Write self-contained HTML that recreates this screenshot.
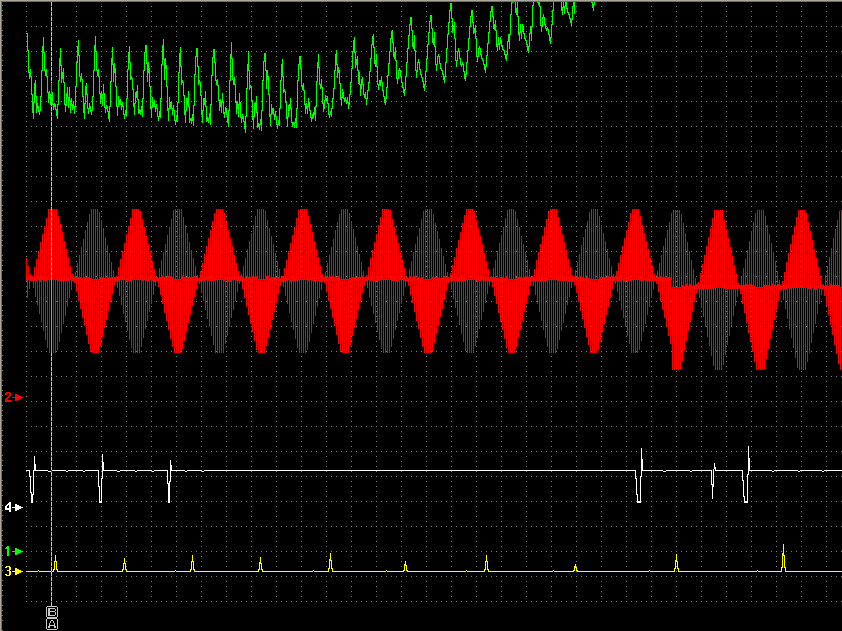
<!DOCTYPE html>
<html><head><meta charset="utf-8"><style>
html,body{margin:0;padding:0;background:#000;}
body{width:842px;height:631px;position:relative;overflow:hidden;font-family:"Liberation Sans",sans-serif;}
</style></head><body>
<svg width="842" height="631" viewBox="0 0 842 631" shape-rendering="crispEdges" style="position:absolute;left:0;top:0"><rect width="842" height="631" fill="#000"/><path fill="#808080" d="M26 6h1v1h-1zM26 11h1v1h-1zM26 16h1v1h-1zM26 21h1v1h-1zM26 26h1v1h-1zM26 31h1v1h-1zM26 36h1v1h-1zM26 41h1v1h-1zM26 46h1v1h-1zM26 51h1v1h-1zM26 56h1v1h-1zM26 61h1v1h-1zM26 66h1v1h-1zM26 71h1v1h-1zM26 76h1v1h-1zM26 81h1v1h-1zM26 86h1v1h-1zM26 91h1v1h-1zM26 96h1v1h-1zM26 101h1v1h-1zM26 106h1v1h-1zM26 111h1v1h-1zM26 116h1v1h-1zM26 121h1v1h-1zM26 126h1v1h-1zM26 131h1v1h-1zM26 136h1v1h-1zM26 141h1v1h-1zM26 146h1v1h-1zM26 151h1v1h-1zM26 156h1v1h-1zM26 161h1v1h-1zM26 166h1v1h-1zM26 171h1v1h-1zM26 176h1v1h-1zM26 181h1v1h-1zM26 186h1v1h-1zM26 191h1v1h-1zM26 196h1v1h-1zM26 201h1v1h-1zM26 206h1v1h-1zM26 211h1v1h-1zM26 216h1v1h-1zM26 221h1v1h-1zM26 226h1v1h-1zM26 231h1v1h-1zM26 236h1v1h-1zM26 241h1v1h-1zM26 246h1v1h-1zM26 251h1v1h-1zM26 256h1v1h-1zM26 261h1v1h-1zM26 266h1v1h-1zM26 271h1v1h-1zM26 276h1v1h-1zM26 281h1v1h-1zM26 286h1v1h-1zM26 291h1v1h-1zM26 296h1v1h-1zM26 301h1v1h-1zM26 306h1v1h-1zM26 311h1v1h-1zM26 316h1v1h-1zM26 321h1v1h-1zM26 326h1v1h-1zM26 331h1v1h-1zM26 336h1v1h-1zM26 341h1v1h-1zM26 346h1v1h-1zM26 351h1v1h-1zM26 356h1v1h-1zM26 361h1v1h-1zM26 366h1v1h-1zM26 371h1v1h-1zM26 376h1v1h-1zM26 381h1v1h-1zM26 386h1v1h-1zM26 391h1v1h-1zM26 396h1v1h-1zM26 401h1v1h-1zM26 406h1v1h-1zM26 411h1v1h-1zM26 416h1v1h-1zM26 421h1v1h-1zM26 426h1v1h-1zM26 431h1v1h-1zM26 436h1v1h-1zM26 441h1v1h-1zM26 446h1v1h-1zM26 451h1v1h-1zM26 456h1v1h-1zM26 461h1v1h-1zM26 466h1v1h-1zM26 471h1v1h-1zM26 476h1v1h-1zM26 481h1v1h-1zM26 486h1v1h-1zM26 491h1v1h-1zM26 496h1v1h-1zM26 501h1v1h-1zM26 506h1v1h-1zM26 511h1v1h-1zM26 516h1v1h-1zM26 521h1v1h-1zM26 526h1v1h-1zM26 531h1v1h-1zM26 536h1v1h-1zM26 541h1v1h-1zM26 546h1v1h-1zM26 551h1v1h-1zM26 556h1v1h-1zM26 561h1v1h-1zM26 566h1v1h-1zM26 571h1v1h-1zM26 576h1v1h-1zM26 581h1v1h-1zM26 586h1v1h-1zM26 591h1v1h-1zM26 596h1v1h-1zM26 601h1v1h-1zM51 6h1v1h-1zM51 11h1v1h-1zM51 16h1v1h-1zM51 21h1v1h-1zM51 26h1v1h-1zM51 31h1v1h-1zM51 36h1v1h-1zM51 41h1v1h-1zM51 46h1v1h-1zM51 51h1v1h-1zM51 56h1v1h-1zM51 61h1v1h-1zM51 66h1v1h-1zM51 71h1v1h-1zM51 76h1v1h-1zM51 81h1v1h-1zM51 86h1v1h-1zM51 91h1v1h-1zM51 96h1v1h-1zM51 101h1v1h-1zM51 106h1v1h-1zM51 111h1v1h-1zM51 116h1v1h-1zM51 121h1v1h-1zM51 126h1v1h-1zM51 131h1v1h-1zM51 136h1v1h-1zM51 141h1v1h-1zM51 146h1v1h-1zM51 151h1v1h-1zM51 156h1v1h-1zM51 161h1v1h-1zM51 166h1v1h-1zM51 171h1v1h-1zM51 176h1v1h-1zM51 181h1v1h-1zM51 186h1v1h-1zM51 191h1v1h-1zM51 196h1v1h-1zM51 201h1v1h-1zM51 206h1v1h-1zM51 211h1v1h-1zM51 216h1v1h-1zM51 221h1v1h-1zM51 226h1v1h-1zM51 231h1v1h-1zM51 236h1v1h-1zM51 241h1v1h-1zM51 246h1v1h-1zM51 251h1v1h-1zM51 256h1v1h-1zM51 261h1v1h-1zM51 266h1v1h-1zM51 271h1v1h-1zM51 276h1v1h-1zM51 281h1v1h-1zM51 286h1v1h-1zM51 291h1v1h-1zM51 296h1v1h-1zM51 301h1v1h-1zM51 306h1v1h-1zM51 311h1v1h-1zM51 316h1v1h-1zM51 321h1v1h-1zM51 326h1v1h-1zM51 331h1v1h-1zM51 336h1v1h-1zM51 341h1v1h-1zM51 346h1v1h-1zM51 351h1v1h-1zM51 356h1v1h-1zM51 361h1v1h-1zM51 366h1v1h-1zM51 371h1v1h-1zM51 376h1v1h-1zM51 381h1v1h-1zM51 386h1v1h-1zM51 391h1v1h-1zM51 396h1v1h-1zM51 401h1v1h-1zM51 406h1v1h-1zM51 411h1v1h-1zM51 416h1v1h-1zM51 421h1v1h-1zM51 426h1v1h-1zM51 431h1v1h-1zM51 436h1v1h-1zM51 441h1v1h-1zM51 446h1v1h-1zM51 451h1v1h-1zM51 456h1v1h-1zM51 461h1v1h-1zM51 466h1v1h-1zM51 471h1v1h-1zM51 476h1v1h-1zM51 481h1v1h-1zM51 486h1v1h-1zM51 491h1v1h-1zM51 496h1v1h-1zM51 501h1v1h-1zM51 506h1v1h-1zM51 511h1v1h-1zM51 516h1v1h-1zM51 521h1v1h-1zM51 526h1v1h-1zM51 531h1v1h-1zM51 536h1v1h-1zM51 541h1v1h-1zM51 546h1v1h-1zM51 551h1v1h-1zM51 556h1v1h-1zM51 561h1v1h-1zM51 566h1v1h-1zM51 571h1v1h-1zM51 576h1v1h-1zM51 581h1v1h-1zM51 586h1v1h-1zM51 591h1v1h-1zM51 596h1v1h-1zM51 601h1v1h-1zM76 6h1v1h-1zM76 11h1v1h-1zM76 16h1v1h-1zM76 21h1v1h-1zM76 26h1v1h-1zM76 31h1v1h-1zM76 36h1v1h-1zM76 41h1v1h-1zM76 46h1v1h-1zM76 51h1v1h-1zM76 56h1v1h-1zM76 61h1v1h-1zM76 66h1v1h-1zM76 71h1v1h-1zM76 76h1v1h-1zM76 81h1v1h-1zM76 86h1v1h-1zM76 91h1v1h-1zM76 96h1v1h-1zM76 101h1v1h-1zM76 106h1v1h-1zM76 111h1v1h-1zM76 116h1v1h-1zM76 121h1v1h-1zM76 126h1v1h-1zM76 131h1v1h-1zM76 136h1v1h-1zM76 141h1v1h-1zM76 146h1v1h-1zM76 151h1v1h-1zM76 156h1v1h-1zM76 161h1v1h-1zM76 166h1v1h-1zM76 171h1v1h-1zM76 176h1v1h-1zM76 181h1v1h-1zM76 186h1v1h-1zM76 191h1v1h-1zM76 196h1v1h-1zM76 201h1v1h-1zM76 206h1v1h-1zM76 211h1v1h-1zM76 216h1v1h-1zM76 221h1v1h-1zM76 226h1v1h-1zM76 231h1v1h-1zM76 236h1v1h-1zM76 241h1v1h-1zM76 246h1v1h-1zM76 251h1v1h-1zM76 256h1v1h-1zM76 261h1v1h-1zM76 266h1v1h-1zM76 271h1v1h-1zM76 276h1v1h-1zM76 281h1v1h-1zM76 286h1v1h-1zM76 291h1v1h-1zM76 296h1v1h-1zM76 301h1v1h-1zM76 306h1v1h-1zM76 311h1v1h-1zM76 316h1v1h-1zM76 321h1v1h-1zM76 326h1v1h-1zM76 331h1v1h-1zM76 336h1v1h-1zM76 341h1v1h-1zM76 346h1v1h-1zM76 351h1v1h-1zM76 356h1v1h-1zM76 361h1v1h-1zM76 366h1v1h-1zM76 371h1v1h-1zM76 376h1v1h-1zM76 381h1v1h-1zM76 386h1v1h-1zM76 391h1v1h-1zM76 396h1v1h-1zM76 401h1v1h-1zM76 406h1v1h-1zM76 411h1v1h-1zM76 416h1v1h-1zM76 421h1v1h-1zM76 426h1v1h-1zM76 431h1v1h-1zM76 436h1v1h-1zM76 441h1v1h-1zM76 446h1v1h-1zM76 451h1v1h-1zM76 456h1v1h-1zM76 461h1v1h-1zM76 466h1v1h-1zM76 471h1v1h-1zM76 476h1v1h-1zM76 481h1v1h-1zM76 486h1v1h-1zM76 491h1v1h-1zM76 496h1v1h-1zM76 501h1v1h-1zM76 506h1v1h-1zM76 511h1v1h-1zM76 516h1v1h-1zM76 521h1v1h-1zM76 526h1v1h-1zM76 531h1v1h-1zM76 536h1v1h-1zM76 541h1v1h-1zM76 546h1v1h-1zM76 551h1v1h-1zM76 556h1v1h-1zM76 561h1v1h-1zM76 566h1v1h-1zM76 571h1v1h-1zM76 576h1v1h-1zM76 581h1v1h-1zM76 586h1v1h-1zM76 591h1v1h-1zM76 596h1v1h-1zM76 601h1v1h-1zM101 6h1v1h-1zM101 11h1v1h-1zM101 16h1v1h-1zM101 21h1v1h-1zM101 26h1v1h-1zM101 31h1v1h-1zM101 36h1v1h-1zM101 41h1v1h-1zM101 46h1v1h-1zM101 51h1v1h-1zM101 56h1v1h-1zM101 61h1v1h-1zM101 66h1v1h-1zM101 71h1v1h-1zM101 76h1v1h-1zM101 81h1v1h-1zM101 86h1v1h-1zM101 91h1v1h-1zM101 96h1v1h-1zM101 101h1v1h-1zM101 106h1v1h-1zM101 111h1v1h-1zM101 116h1v1h-1zM101 121h1v1h-1zM101 126h1v1h-1zM101 131h1v1h-1zM101 136h1v1h-1zM101 141h1v1h-1zM101 146h1v1h-1zM101 151h1v1h-1zM101 156h1v1h-1zM101 161h1v1h-1zM101 166h1v1h-1zM101 171h1v1h-1zM101 176h1v1h-1zM101 181h1v1h-1zM101 186h1v1h-1zM101 191h1v1h-1zM101 196h1v1h-1zM101 201h1v1h-1zM101 206h1v1h-1zM101 211h1v1h-1zM101 216h1v1h-1zM101 221h1v1h-1zM101 226h1v1h-1zM101 231h1v1h-1zM101 236h1v1h-1zM101 241h1v1h-1zM101 246h1v1h-1zM101 251h1v1h-1zM101 256h1v1h-1zM101 261h1v1h-1zM101 266h1v1h-1zM101 271h1v1h-1zM101 276h1v1h-1zM101 281h1v1h-1zM101 286h1v1h-1zM101 291h1v1h-1zM101 296h1v1h-1zM101 301h1v1h-1zM101 306h1v1h-1zM101 311h1v1h-1zM101 316h1v1h-1zM101 321h1v1h-1zM101 326h1v1h-1zM101 331h1v1h-1zM101 336h1v1h-1zM101 341h1v1h-1zM101 346h1v1h-1zM101 351h1v1h-1zM101 356h1v1h-1zM101 361h1v1h-1zM101 366h1v1h-1zM101 371h1v1h-1zM101 376h1v1h-1zM101 381h1v1h-1zM101 386h1v1h-1zM101 391h1v1h-1zM101 396h1v1h-1zM101 401h1v1h-1zM101 406h1v1h-1zM101 411h1v1h-1zM101 416h1v1h-1zM101 421h1v1h-1zM101 426h1v1h-1zM101 431h1v1h-1zM101 436h1v1h-1zM101 441h1v1h-1zM101 446h1v1h-1zM101 451h1v1h-1zM101 456h1v1h-1zM101 461h1v1h-1zM101 466h1v1h-1zM101 471h1v1h-1zM101 476h1v1h-1zM101 481h1v1h-1zM101 486h1v1h-1zM101 491h1v1h-1zM101 496h1v1h-1zM101 501h1v1h-1zM101 506h1v1h-1zM101 511h1v1h-1zM101 516h1v1h-1zM101 521h1v1h-1zM101 526h1v1h-1zM101 531h1v1h-1zM101 536h1v1h-1zM101 541h1v1h-1zM101 546h1v1h-1zM101 551h1v1h-1zM101 556h1v1h-1zM101 561h1v1h-1zM101 566h1v1h-1zM101 571h1v1h-1zM101 576h1v1h-1zM101 581h1v1h-1zM101 586h1v1h-1zM101 591h1v1h-1zM101 596h1v1h-1zM101 601h1v1h-1zM126 6h1v1h-1zM126 11h1v1h-1zM126 16h1v1h-1zM126 21h1v1h-1zM126 26h1v1h-1zM126 31h1v1h-1zM126 36h1v1h-1zM126 41h1v1h-1zM126 46h1v1h-1zM126 51h1v1h-1zM126 56h1v1h-1zM126 61h1v1h-1zM126 66h1v1h-1zM126 71h1v1h-1zM126 76h1v1h-1zM126 81h1v1h-1zM126 86h1v1h-1zM126 91h1v1h-1zM126 96h1v1h-1zM126 101h1v1h-1zM126 106h1v1h-1zM126 111h1v1h-1zM126 116h1v1h-1zM126 121h1v1h-1zM126 126h1v1h-1zM126 131h1v1h-1zM126 136h1v1h-1zM126 141h1v1h-1zM126 146h1v1h-1zM126 151h1v1h-1zM126 156h1v1h-1zM126 161h1v1h-1zM126 166h1v1h-1zM126 171h1v1h-1zM126 176h1v1h-1zM126 181h1v1h-1zM126 186h1v1h-1zM126 191h1v1h-1zM126 196h1v1h-1zM126 201h1v1h-1zM126 206h1v1h-1zM126 211h1v1h-1zM126 216h1v1h-1zM126 221h1v1h-1zM126 226h1v1h-1zM126 231h1v1h-1zM126 236h1v1h-1zM126 241h1v1h-1zM126 246h1v1h-1zM126 251h1v1h-1zM126 256h1v1h-1zM126 261h1v1h-1zM126 266h1v1h-1zM126 271h1v1h-1zM126 276h1v1h-1zM126 281h1v1h-1zM126 286h1v1h-1zM126 291h1v1h-1zM126 296h1v1h-1zM126 301h1v1h-1zM126 306h1v1h-1zM126 311h1v1h-1zM126 316h1v1h-1zM126 321h1v1h-1zM126 326h1v1h-1zM126 331h1v1h-1zM126 336h1v1h-1zM126 341h1v1h-1zM126 346h1v1h-1zM126 351h1v1h-1zM126 356h1v1h-1zM126 361h1v1h-1zM126 366h1v1h-1zM126 371h1v1h-1zM126 376h1v1h-1zM126 381h1v1h-1zM126 386h1v1h-1zM126 391h1v1h-1zM126 396h1v1h-1zM126 401h1v1h-1zM126 406h1v1h-1zM126 411h1v1h-1zM126 416h1v1h-1zM126 421h1v1h-1zM126 426h1v1h-1zM126 431h1v1h-1zM126 436h1v1h-1zM126 441h1v1h-1zM126 446h1v1h-1zM126 451h1v1h-1zM126 456h1v1h-1zM126 461h1v1h-1zM126 466h1v1h-1zM126 471h1v1h-1zM126 476h1v1h-1zM126 481h1v1h-1zM126 486h1v1h-1zM126 491h1v1h-1zM126 496h1v1h-1zM126 501h1v1h-1zM126 506h1v1h-1zM126 511h1v1h-1zM126 516h1v1h-1zM126 521h1v1h-1zM126 526h1v1h-1zM126 531h1v1h-1zM126 536h1v1h-1zM126 541h1v1h-1zM126 546h1v1h-1zM126 551h1v1h-1zM126 556h1v1h-1zM126 561h1v1h-1zM126 566h1v1h-1zM126 571h1v1h-1zM126 576h1v1h-1zM126 581h1v1h-1zM126 586h1v1h-1zM126 591h1v1h-1zM126 596h1v1h-1zM126 601h1v1h-1zM151 6h1v1h-1zM151 11h1v1h-1zM151 16h1v1h-1zM151 21h1v1h-1zM151 26h1v1h-1zM151 31h1v1h-1zM151 36h1v1h-1zM151 41h1v1h-1zM151 46h1v1h-1zM151 51h1v1h-1zM151 56h1v1h-1zM151 61h1v1h-1zM151 66h1v1h-1zM151 71h1v1h-1zM151 76h1v1h-1zM151 81h1v1h-1zM151 86h1v1h-1zM151 91h1v1h-1zM151 96h1v1h-1zM151 101h1v1h-1zM151 106h1v1h-1zM151 111h1v1h-1zM151 116h1v1h-1zM151 121h1v1h-1zM151 126h1v1h-1zM151 131h1v1h-1zM151 136h1v1h-1zM151 141h1v1h-1zM151 146h1v1h-1zM151 151h1v1h-1zM151 156h1v1h-1zM151 161h1v1h-1zM151 166h1v1h-1zM151 171h1v1h-1zM151 176h1v1h-1zM151 181h1v1h-1zM151 186h1v1h-1zM151 191h1v1h-1zM151 196h1v1h-1zM151 201h1v1h-1zM151 206h1v1h-1zM151 211h1v1h-1zM151 216h1v1h-1zM151 221h1v1h-1zM151 226h1v1h-1zM151 231h1v1h-1zM151 236h1v1h-1zM151 241h1v1h-1zM151 246h1v1h-1zM151 251h1v1h-1zM151 256h1v1h-1zM151 261h1v1h-1zM151 266h1v1h-1zM151 271h1v1h-1zM151 276h1v1h-1zM151 281h1v1h-1zM151 286h1v1h-1zM151 291h1v1h-1zM151 296h1v1h-1zM151 301h1v1h-1zM151 306h1v1h-1zM151 311h1v1h-1zM151 316h1v1h-1zM151 321h1v1h-1zM151 326h1v1h-1zM151 331h1v1h-1zM151 336h1v1h-1zM151 341h1v1h-1zM151 346h1v1h-1zM151 351h1v1h-1zM151 356h1v1h-1zM151 361h1v1h-1zM151 366h1v1h-1zM151 371h1v1h-1zM151 376h1v1h-1zM151 381h1v1h-1zM151 386h1v1h-1zM151 391h1v1h-1zM151 396h1v1h-1zM151 401h1v1h-1zM151 406h1v1h-1zM151 411h1v1h-1zM151 416h1v1h-1zM151 421h1v1h-1zM151 426h1v1h-1zM151 431h1v1h-1zM151 436h1v1h-1zM151 441h1v1h-1zM151 446h1v1h-1zM151 451h1v1h-1zM151 456h1v1h-1zM151 461h1v1h-1zM151 466h1v1h-1zM151 471h1v1h-1zM151 476h1v1h-1zM151 481h1v1h-1zM151 486h1v1h-1zM151 491h1v1h-1zM151 496h1v1h-1zM151 501h1v1h-1zM151 506h1v1h-1zM151 511h1v1h-1zM151 516h1v1h-1zM151 521h1v1h-1zM151 526h1v1h-1zM151 531h1v1h-1zM151 536h1v1h-1zM151 541h1v1h-1zM151 546h1v1h-1zM151 551h1v1h-1zM151 556h1v1h-1zM151 561h1v1h-1zM151 566h1v1h-1zM151 571h1v1h-1zM151 576h1v1h-1zM151 581h1v1h-1zM151 586h1v1h-1zM151 591h1v1h-1zM151 596h1v1h-1zM151 601h1v1h-1zM176 6h1v1h-1zM176 11h1v1h-1zM176 16h1v1h-1zM176 21h1v1h-1zM176 26h1v1h-1zM176 31h1v1h-1zM176 36h1v1h-1zM176 41h1v1h-1zM176 46h1v1h-1zM176 51h1v1h-1zM176 56h1v1h-1zM176 61h1v1h-1zM176 66h1v1h-1zM176 71h1v1h-1zM176 76h1v1h-1zM176 81h1v1h-1zM176 86h1v1h-1zM176 91h1v1h-1zM176 96h1v1h-1zM176 101h1v1h-1zM176 106h1v1h-1zM176 111h1v1h-1zM176 116h1v1h-1zM176 121h1v1h-1zM176 126h1v1h-1zM176 131h1v1h-1zM176 136h1v1h-1zM176 141h1v1h-1zM176 146h1v1h-1zM176 151h1v1h-1zM176 156h1v1h-1zM176 161h1v1h-1zM176 166h1v1h-1zM176 171h1v1h-1zM176 176h1v1h-1zM176 181h1v1h-1zM176 186h1v1h-1zM176 191h1v1h-1zM176 196h1v1h-1zM176 201h1v1h-1zM176 206h1v1h-1zM176 211h1v1h-1zM176 216h1v1h-1zM176 221h1v1h-1zM176 226h1v1h-1zM176 231h1v1h-1zM176 236h1v1h-1zM176 241h1v1h-1zM176 246h1v1h-1zM176 251h1v1h-1zM176 256h1v1h-1zM176 261h1v1h-1zM176 266h1v1h-1zM176 271h1v1h-1zM176 276h1v1h-1zM176 281h1v1h-1zM176 286h1v1h-1zM176 291h1v1h-1zM176 296h1v1h-1zM176 301h1v1h-1zM176 306h1v1h-1zM176 311h1v1h-1zM176 316h1v1h-1zM176 321h1v1h-1zM176 326h1v1h-1zM176 331h1v1h-1zM176 336h1v1h-1zM176 341h1v1h-1zM176 346h1v1h-1zM176 351h1v1h-1zM176 356h1v1h-1zM176 361h1v1h-1zM176 366h1v1h-1zM176 371h1v1h-1zM176 376h1v1h-1zM176 381h1v1h-1zM176 386h1v1h-1zM176 391h1v1h-1zM176 396h1v1h-1zM176 401h1v1h-1zM176 406h1v1h-1zM176 411h1v1h-1zM176 416h1v1h-1zM176 421h1v1h-1zM176 426h1v1h-1zM176 431h1v1h-1zM176 436h1v1h-1zM176 441h1v1h-1zM176 446h1v1h-1zM176 451h1v1h-1zM176 456h1v1h-1zM176 461h1v1h-1zM176 466h1v1h-1zM176 471h1v1h-1zM176 476h1v1h-1zM176 481h1v1h-1zM176 486h1v1h-1zM176 491h1v1h-1zM176 496h1v1h-1zM176 501h1v1h-1zM176 506h1v1h-1zM176 511h1v1h-1zM176 516h1v1h-1zM176 521h1v1h-1zM176 526h1v1h-1zM176 531h1v1h-1zM176 536h1v1h-1zM176 541h1v1h-1zM176 546h1v1h-1zM176 551h1v1h-1zM176 556h1v1h-1zM176 561h1v1h-1zM176 566h1v1h-1zM176 571h1v1h-1zM176 576h1v1h-1zM176 581h1v1h-1zM176 586h1v1h-1zM176 591h1v1h-1zM176 596h1v1h-1zM176 601h1v1h-1zM201 6h1v1h-1zM201 11h1v1h-1zM201 16h1v1h-1zM201 21h1v1h-1zM201 26h1v1h-1zM201 31h1v1h-1zM201 36h1v1h-1zM201 41h1v1h-1zM201 46h1v1h-1zM201 51h1v1h-1zM201 56h1v1h-1zM201 61h1v1h-1zM201 66h1v1h-1zM201 71h1v1h-1zM201 76h1v1h-1zM201 81h1v1h-1zM201 86h1v1h-1zM201 91h1v1h-1zM201 96h1v1h-1zM201 101h1v1h-1zM201 106h1v1h-1zM201 111h1v1h-1zM201 116h1v1h-1zM201 121h1v1h-1zM201 126h1v1h-1zM201 131h1v1h-1zM201 136h1v1h-1zM201 141h1v1h-1zM201 146h1v1h-1zM201 151h1v1h-1zM201 156h1v1h-1zM201 161h1v1h-1zM201 166h1v1h-1zM201 171h1v1h-1zM201 176h1v1h-1zM201 181h1v1h-1zM201 186h1v1h-1zM201 191h1v1h-1zM201 196h1v1h-1zM201 201h1v1h-1zM201 206h1v1h-1zM201 211h1v1h-1zM201 216h1v1h-1zM201 221h1v1h-1zM201 226h1v1h-1zM201 231h1v1h-1zM201 236h1v1h-1zM201 241h1v1h-1zM201 246h1v1h-1zM201 251h1v1h-1zM201 256h1v1h-1zM201 261h1v1h-1zM201 266h1v1h-1zM201 271h1v1h-1zM201 276h1v1h-1zM201 281h1v1h-1zM201 286h1v1h-1zM201 291h1v1h-1zM201 296h1v1h-1zM201 301h1v1h-1zM201 306h1v1h-1zM201 311h1v1h-1zM201 316h1v1h-1zM201 321h1v1h-1zM201 326h1v1h-1zM201 331h1v1h-1zM201 336h1v1h-1zM201 341h1v1h-1zM201 346h1v1h-1zM201 351h1v1h-1zM201 356h1v1h-1zM201 361h1v1h-1zM201 366h1v1h-1zM201 371h1v1h-1zM201 376h1v1h-1zM201 381h1v1h-1zM201 386h1v1h-1zM201 391h1v1h-1zM201 396h1v1h-1zM201 401h1v1h-1zM201 406h1v1h-1zM201 411h1v1h-1zM201 416h1v1h-1zM201 421h1v1h-1zM201 426h1v1h-1zM201 431h1v1h-1zM201 436h1v1h-1zM201 441h1v1h-1zM201 446h1v1h-1zM201 451h1v1h-1zM201 456h1v1h-1zM201 461h1v1h-1zM201 466h1v1h-1zM201 471h1v1h-1zM201 476h1v1h-1zM201 481h1v1h-1zM201 486h1v1h-1zM201 491h1v1h-1zM201 496h1v1h-1zM201 501h1v1h-1zM201 506h1v1h-1zM201 511h1v1h-1zM201 516h1v1h-1zM201 521h1v1h-1zM201 526h1v1h-1zM201 531h1v1h-1zM201 536h1v1h-1zM201 541h1v1h-1zM201 546h1v1h-1zM201 551h1v1h-1zM201 556h1v1h-1zM201 561h1v1h-1zM201 566h1v1h-1zM201 571h1v1h-1zM201 576h1v1h-1zM201 581h1v1h-1zM201 586h1v1h-1zM201 591h1v1h-1zM201 596h1v1h-1zM201 601h1v1h-1zM226 6h1v1h-1zM226 11h1v1h-1zM226 16h1v1h-1zM226 21h1v1h-1zM226 26h1v1h-1zM226 31h1v1h-1zM226 36h1v1h-1zM226 41h1v1h-1zM226 46h1v1h-1zM226 51h1v1h-1zM226 56h1v1h-1zM226 61h1v1h-1zM226 66h1v1h-1zM226 71h1v1h-1zM226 76h1v1h-1zM226 81h1v1h-1zM226 86h1v1h-1zM226 91h1v1h-1zM226 96h1v1h-1zM226 101h1v1h-1zM226 106h1v1h-1zM226 111h1v1h-1zM226 116h1v1h-1zM226 121h1v1h-1zM226 126h1v1h-1zM226 131h1v1h-1zM226 136h1v1h-1zM226 141h1v1h-1zM226 146h1v1h-1zM226 151h1v1h-1zM226 156h1v1h-1zM226 161h1v1h-1zM226 166h1v1h-1zM226 171h1v1h-1zM226 176h1v1h-1zM226 181h1v1h-1zM226 186h1v1h-1zM226 191h1v1h-1zM226 196h1v1h-1zM226 201h1v1h-1zM226 206h1v1h-1zM226 211h1v1h-1zM226 216h1v1h-1zM226 221h1v1h-1zM226 226h1v1h-1zM226 231h1v1h-1zM226 236h1v1h-1zM226 241h1v1h-1zM226 246h1v1h-1zM226 251h1v1h-1zM226 256h1v1h-1zM226 261h1v1h-1zM226 266h1v1h-1zM226 271h1v1h-1zM226 276h1v1h-1zM226 281h1v1h-1zM226 286h1v1h-1zM226 291h1v1h-1zM226 296h1v1h-1zM226 301h1v1h-1zM226 306h1v1h-1zM226 311h1v1h-1zM226 316h1v1h-1zM226 321h1v1h-1zM226 326h1v1h-1zM226 331h1v1h-1zM226 336h1v1h-1zM226 341h1v1h-1zM226 346h1v1h-1zM226 351h1v1h-1zM226 356h1v1h-1zM226 361h1v1h-1zM226 366h1v1h-1zM226 371h1v1h-1zM226 376h1v1h-1zM226 381h1v1h-1zM226 386h1v1h-1zM226 391h1v1h-1zM226 396h1v1h-1zM226 401h1v1h-1zM226 406h1v1h-1zM226 411h1v1h-1zM226 416h1v1h-1zM226 421h1v1h-1zM226 426h1v1h-1zM226 431h1v1h-1zM226 436h1v1h-1zM226 441h1v1h-1zM226 446h1v1h-1zM226 451h1v1h-1zM226 456h1v1h-1zM226 461h1v1h-1zM226 466h1v1h-1zM226 471h1v1h-1zM226 476h1v1h-1zM226 481h1v1h-1zM226 486h1v1h-1zM226 491h1v1h-1zM226 496h1v1h-1zM226 501h1v1h-1zM226 506h1v1h-1zM226 511h1v1h-1zM226 516h1v1h-1zM226 521h1v1h-1zM226 526h1v1h-1zM226 531h1v1h-1zM226 536h1v1h-1zM226 541h1v1h-1zM226 546h1v1h-1zM226 551h1v1h-1zM226 556h1v1h-1zM226 561h1v1h-1zM226 566h1v1h-1zM226 571h1v1h-1zM226 576h1v1h-1zM226 581h1v1h-1zM226 586h1v1h-1zM226 591h1v1h-1zM226 596h1v1h-1zM226 601h1v1h-1zM251 6h1v1h-1zM251 11h1v1h-1zM251 16h1v1h-1zM251 21h1v1h-1zM251 26h1v1h-1zM251 31h1v1h-1zM251 36h1v1h-1zM251 41h1v1h-1zM251 46h1v1h-1zM251 51h1v1h-1zM251 56h1v1h-1zM251 61h1v1h-1zM251 66h1v1h-1zM251 71h1v1h-1zM251 76h1v1h-1zM251 81h1v1h-1zM251 86h1v1h-1zM251 91h1v1h-1zM251 96h1v1h-1zM251 101h1v1h-1zM251 106h1v1h-1zM251 111h1v1h-1zM251 116h1v1h-1zM251 121h1v1h-1zM251 126h1v1h-1zM251 131h1v1h-1zM251 136h1v1h-1zM251 141h1v1h-1zM251 146h1v1h-1zM251 151h1v1h-1zM251 156h1v1h-1zM251 161h1v1h-1zM251 166h1v1h-1zM251 171h1v1h-1zM251 176h1v1h-1zM251 181h1v1h-1zM251 186h1v1h-1zM251 191h1v1h-1zM251 196h1v1h-1zM251 201h1v1h-1zM251 206h1v1h-1zM251 211h1v1h-1zM251 216h1v1h-1zM251 221h1v1h-1zM251 226h1v1h-1zM251 231h1v1h-1zM251 236h1v1h-1zM251 241h1v1h-1zM251 246h1v1h-1zM251 251h1v1h-1zM251 256h1v1h-1zM251 261h1v1h-1zM251 266h1v1h-1zM251 271h1v1h-1zM251 276h1v1h-1zM251 281h1v1h-1zM251 286h1v1h-1zM251 291h1v1h-1zM251 296h1v1h-1zM251 301h1v1h-1zM251 306h1v1h-1zM251 311h1v1h-1zM251 316h1v1h-1zM251 321h1v1h-1zM251 326h1v1h-1zM251 331h1v1h-1zM251 336h1v1h-1zM251 341h1v1h-1zM251 346h1v1h-1zM251 351h1v1h-1zM251 356h1v1h-1zM251 361h1v1h-1zM251 366h1v1h-1zM251 371h1v1h-1zM251 376h1v1h-1zM251 381h1v1h-1zM251 386h1v1h-1zM251 391h1v1h-1zM251 396h1v1h-1zM251 401h1v1h-1zM251 406h1v1h-1zM251 411h1v1h-1zM251 416h1v1h-1zM251 421h1v1h-1zM251 426h1v1h-1zM251 431h1v1h-1zM251 436h1v1h-1zM251 441h1v1h-1zM251 446h1v1h-1zM251 451h1v1h-1zM251 456h1v1h-1zM251 461h1v1h-1zM251 466h1v1h-1zM251 471h1v1h-1zM251 476h1v1h-1zM251 481h1v1h-1zM251 486h1v1h-1zM251 491h1v1h-1zM251 496h1v1h-1zM251 501h1v1h-1zM251 506h1v1h-1zM251 511h1v1h-1zM251 516h1v1h-1zM251 521h1v1h-1zM251 526h1v1h-1zM251 531h1v1h-1zM251 536h1v1h-1zM251 541h1v1h-1zM251 546h1v1h-1zM251 551h1v1h-1zM251 556h1v1h-1zM251 561h1v1h-1zM251 566h1v1h-1zM251 571h1v1h-1zM251 576h1v1h-1zM251 581h1v1h-1zM251 586h1v1h-1zM251 591h1v1h-1zM251 596h1v1h-1zM251 601h1v1h-1zM276 6h1v1h-1zM276 11h1v1h-1zM276 16h1v1h-1zM276 21h1v1h-1zM276 26h1v1h-1zM276 31h1v1h-1zM276 36h1v1h-1zM276 41h1v1h-1zM276 46h1v1h-1zM276 51h1v1h-1zM276 56h1v1h-1zM276 61h1v1h-1zM276 66h1v1h-1zM276 71h1v1h-1zM276 76h1v1h-1zM276 81h1v1h-1zM276 86h1v1h-1zM276 91h1v1h-1zM276 96h1v1h-1zM276 101h1v1h-1zM276 106h1v1h-1zM276 111h1v1h-1zM276 116h1v1h-1zM276 121h1v1h-1zM276 126h1v1h-1zM276 131h1v1h-1zM276 136h1v1h-1zM276 141h1v1h-1zM276 146h1v1h-1zM276 151h1v1h-1zM276 156h1v1h-1zM276 161h1v1h-1zM276 166h1v1h-1zM276 171h1v1h-1zM276 176h1v1h-1zM276 181h1v1h-1zM276 186h1v1h-1zM276 191h1v1h-1zM276 196h1v1h-1zM276 201h1v1h-1zM276 206h1v1h-1zM276 211h1v1h-1zM276 216h1v1h-1zM276 221h1v1h-1zM276 226h1v1h-1zM276 231h1v1h-1zM276 236h1v1h-1zM276 241h1v1h-1zM276 246h1v1h-1zM276 251h1v1h-1zM276 256h1v1h-1zM276 261h1v1h-1zM276 266h1v1h-1zM276 271h1v1h-1zM276 276h1v1h-1zM276 281h1v1h-1zM276 286h1v1h-1zM276 291h1v1h-1zM276 296h1v1h-1zM276 301h1v1h-1zM276 306h1v1h-1zM276 311h1v1h-1zM276 316h1v1h-1zM276 321h1v1h-1zM276 326h1v1h-1zM276 331h1v1h-1zM276 336h1v1h-1zM276 341h1v1h-1zM276 346h1v1h-1zM276 351h1v1h-1zM276 356h1v1h-1zM276 361h1v1h-1zM276 366h1v1h-1zM276 371h1v1h-1zM276 376h1v1h-1zM276 381h1v1h-1zM276 386h1v1h-1zM276 391h1v1h-1zM276 396h1v1h-1zM276 401h1v1h-1zM276 406h1v1h-1zM276 411h1v1h-1zM276 416h1v1h-1zM276 421h1v1h-1zM276 426h1v1h-1zM276 431h1v1h-1zM276 436h1v1h-1zM276 441h1v1h-1zM276 446h1v1h-1zM276 451h1v1h-1zM276 456h1v1h-1zM276 461h1v1h-1zM276 466h1v1h-1zM276 471h1v1h-1zM276 476h1v1h-1zM276 481h1v1h-1zM276 486h1v1h-1zM276 491h1v1h-1zM276 496h1v1h-1zM276 501h1v1h-1zM276 506h1v1h-1zM276 511h1v1h-1zM276 516h1v1h-1zM276 521h1v1h-1zM276 526h1v1h-1zM276 531h1v1h-1zM276 536h1v1h-1zM276 541h1v1h-1zM276 546h1v1h-1zM276 551h1v1h-1zM276 556h1v1h-1zM276 561h1v1h-1zM276 566h1v1h-1zM276 571h1v1h-1zM276 576h1v1h-1zM276 581h1v1h-1zM276 586h1v1h-1zM276 591h1v1h-1zM276 596h1v1h-1zM276 601h1v1h-1zM301 6h1v1h-1zM301 11h1v1h-1zM301 16h1v1h-1zM301 21h1v1h-1zM301 26h1v1h-1zM301 31h1v1h-1zM301 36h1v1h-1zM301 41h1v1h-1zM301 46h1v1h-1zM301 51h1v1h-1zM301 56h1v1h-1zM301 61h1v1h-1zM301 66h1v1h-1zM301 71h1v1h-1zM301 76h1v1h-1zM301 81h1v1h-1zM301 86h1v1h-1zM301 91h1v1h-1zM301 96h1v1h-1zM301 101h1v1h-1zM301 106h1v1h-1zM301 111h1v1h-1zM301 116h1v1h-1zM301 121h1v1h-1zM301 126h1v1h-1zM301 131h1v1h-1zM301 136h1v1h-1zM301 141h1v1h-1zM301 146h1v1h-1zM301 151h1v1h-1zM301 156h1v1h-1zM301 161h1v1h-1zM301 166h1v1h-1zM301 171h1v1h-1zM301 176h1v1h-1zM301 181h1v1h-1zM301 186h1v1h-1zM301 191h1v1h-1zM301 196h1v1h-1zM301 201h1v1h-1zM301 206h1v1h-1zM301 211h1v1h-1zM301 216h1v1h-1zM301 221h1v1h-1zM301 226h1v1h-1zM301 231h1v1h-1zM301 236h1v1h-1zM301 241h1v1h-1zM301 246h1v1h-1zM301 251h1v1h-1zM301 256h1v1h-1zM301 261h1v1h-1zM301 266h1v1h-1zM301 271h1v1h-1zM301 276h1v1h-1zM301 281h1v1h-1zM301 286h1v1h-1zM301 291h1v1h-1zM301 296h1v1h-1zM301 301h1v1h-1zM301 306h1v1h-1zM301 311h1v1h-1zM301 316h1v1h-1zM301 321h1v1h-1zM301 326h1v1h-1zM301 331h1v1h-1zM301 336h1v1h-1zM301 341h1v1h-1zM301 346h1v1h-1zM301 351h1v1h-1zM301 356h1v1h-1zM301 361h1v1h-1zM301 366h1v1h-1zM301 371h1v1h-1zM301 376h1v1h-1zM301 381h1v1h-1zM301 386h1v1h-1zM301 391h1v1h-1zM301 396h1v1h-1zM301 401h1v1h-1zM301 406h1v1h-1zM301 411h1v1h-1zM301 416h1v1h-1zM301 421h1v1h-1zM301 426h1v1h-1zM301 431h1v1h-1zM301 436h1v1h-1zM301 441h1v1h-1zM301 446h1v1h-1zM301 451h1v1h-1zM301 456h1v1h-1zM301 461h1v1h-1zM301 466h1v1h-1zM301 471h1v1h-1zM301 476h1v1h-1zM301 481h1v1h-1zM301 486h1v1h-1zM301 491h1v1h-1zM301 496h1v1h-1zM301 501h1v1h-1zM301 506h1v1h-1zM301 511h1v1h-1zM301 516h1v1h-1zM301 521h1v1h-1zM301 526h1v1h-1zM301 531h1v1h-1zM301 536h1v1h-1zM301 541h1v1h-1zM301 546h1v1h-1zM301 551h1v1h-1zM301 556h1v1h-1zM301 561h1v1h-1zM301 566h1v1h-1zM301 571h1v1h-1zM301 576h1v1h-1zM301 581h1v1h-1zM301 586h1v1h-1zM301 591h1v1h-1zM301 596h1v1h-1zM301 601h1v1h-1zM326 6h1v1h-1zM326 11h1v1h-1zM326 16h1v1h-1zM326 21h1v1h-1zM326 26h1v1h-1zM326 31h1v1h-1zM326 36h1v1h-1zM326 41h1v1h-1zM326 46h1v1h-1zM326 51h1v1h-1zM326 56h1v1h-1zM326 61h1v1h-1zM326 66h1v1h-1zM326 71h1v1h-1zM326 76h1v1h-1zM326 81h1v1h-1zM326 86h1v1h-1zM326 91h1v1h-1zM326 96h1v1h-1zM326 101h1v1h-1zM326 106h1v1h-1zM326 111h1v1h-1zM326 116h1v1h-1zM326 121h1v1h-1zM326 126h1v1h-1zM326 131h1v1h-1zM326 136h1v1h-1zM326 141h1v1h-1zM326 146h1v1h-1zM326 151h1v1h-1zM326 156h1v1h-1zM326 161h1v1h-1zM326 166h1v1h-1zM326 171h1v1h-1zM326 176h1v1h-1zM326 181h1v1h-1zM326 186h1v1h-1zM326 191h1v1h-1zM326 196h1v1h-1zM326 201h1v1h-1zM326 206h1v1h-1zM326 211h1v1h-1zM326 216h1v1h-1zM326 221h1v1h-1zM326 226h1v1h-1zM326 231h1v1h-1zM326 236h1v1h-1zM326 241h1v1h-1zM326 246h1v1h-1zM326 251h1v1h-1zM326 256h1v1h-1zM326 261h1v1h-1zM326 266h1v1h-1zM326 271h1v1h-1zM326 276h1v1h-1zM326 281h1v1h-1zM326 286h1v1h-1zM326 291h1v1h-1zM326 296h1v1h-1zM326 301h1v1h-1zM326 306h1v1h-1zM326 311h1v1h-1zM326 316h1v1h-1zM326 321h1v1h-1zM326 326h1v1h-1zM326 331h1v1h-1zM326 336h1v1h-1zM326 341h1v1h-1zM326 346h1v1h-1zM326 351h1v1h-1zM326 356h1v1h-1zM326 361h1v1h-1zM326 366h1v1h-1zM326 371h1v1h-1zM326 376h1v1h-1zM326 381h1v1h-1zM326 386h1v1h-1zM326 391h1v1h-1zM326 396h1v1h-1zM326 401h1v1h-1zM326 406h1v1h-1zM326 411h1v1h-1zM326 416h1v1h-1zM326 421h1v1h-1zM326 426h1v1h-1zM326 431h1v1h-1zM326 436h1v1h-1zM326 441h1v1h-1zM326 446h1v1h-1zM326 451h1v1h-1zM326 456h1v1h-1zM326 461h1v1h-1zM326 466h1v1h-1zM326 471h1v1h-1zM326 476h1v1h-1zM326 481h1v1h-1zM326 486h1v1h-1zM326 491h1v1h-1zM326 496h1v1h-1zM326 501h1v1h-1zM326 506h1v1h-1zM326 511h1v1h-1zM326 516h1v1h-1zM326 521h1v1h-1zM326 526h1v1h-1zM326 531h1v1h-1zM326 536h1v1h-1zM326 541h1v1h-1zM326 546h1v1h-1zM326 551h1v1h-1zM326 556h1v1h-1zM326 561h1v1h-1zM326 566h1v1h-1zM326 571h1v1h-1zM326 576h1v1h-1zM326 581h1v1h-1zM326 586h1v1h-1zM326 591h1v1h-1zM326 596h1v1h-1zM326 601h1v1h-1zM351 6h1v1h-1zM351 11h1v1h-1zM351 16h1v1h-1zM351 21h1v1h-1zM351 26h1v1h-1zM351 31h1v1h-1zM351 36h1v1h-1zM351 41h1v1h-1zM351 46h1v1h-1zM351 51h1v1h-1zM351 56h1v1h-1zM351 61h1v1h-1zM351 66h1v1h-1zM351 71h1v1h-1zM351 76h1v1h-1zM351 81h1v1h-1zM351 86h1v1h-1zM351 91h1v1h-1zM351 96h1v1h-1zM351 101h1v1h-1zM351 106h1v1h-1zM351 111h1v1h-1zM351 116h1v1h-1zM351 121h1v1h-1zM351 126h1v1h-1zM351 131h1v1h-1zM351 136h1v1h-1zM351 141h1v1h-1zM351 146h1v1h-1zM351 151h1v1h-1zM351 156h1v1h-1zM351 161h1v1h-1zM351 166h1v1h-1zM351 171h1v1h-1zM351 176h1v1h-1zM351 181h1v1h-1zM351 186h1v1h-1zM351 191h1v1h-1zM351 196h1v1h-1zM351 201h1v1h-1zM351 206h1v1h-1zM351 211h1v1h-1zM351 216h1v1h-1zM351 221h1v1h-1zM351 226h1v1h-1zM351 231h1v1h-1zM351 236h1v1h-1zM351 241h1v1h-1zM351 246h1v1h-1zM351 251h1v1h-1zM351 256h1v1h-1zM351 261h1v1h-1zM351 266h1v1h-1zM351 271h1v1h-1zM351 276h1v1h-1zM351 281h1v1h-1zM351 286h1v1h-1zM351 291h1v1h-1zM351 296h1v1h-1zM351 301h1v1h-1zM351 306h1v1h-1zM351 311h1v1h-1zM351 316h1v1h-1zM351 321h1v1h-1zM351 326h1v1h-1zM351 331h1v1h-1zM351 336h1v1h-1zM351 341h1v1h-1zM351 346h1v1h-1zM351 351h1v1h-1zM351 356h1v1h-1zM351 361h1v1h-1zM351 366h1v1h-1zM351 371h1v1h-1zM351 376h1v1h-1zM351 381h1v1h-1zM351 386h1v1h-1zM351 391h1v1h-1zM351 396h1v1h-1zM351 401h1v1h-1zM351 406h1v1h-1zM351 411h1v1h-1zM351 416h1v1h-1zM351 421h1v1h-1zM351 426h1v1h-1zM351 431h1v1h-1zM351 436h1v1h-1zM351 441h1v1h-1zM351 446h1v1h-1zM351 451h1v1h-1zM351 456h1v1h-1zM351 461h1v1h-1zM351 466h1v1h-1zM351 471h1v1h-1zM351 476h1v1h-1zM351 481h1v1h-1zM351 486h1v1h-1zM351 491h1v1h-1zM351 496h1v1h-1zM351 501h1v1h-1zM351 506h1v1h-1zM351 511h1v1h-1zM351 516h1v1h-1zM351 521h1v1h-1zM351 526h1v1h-1zM351 531h1v1h-1zM351 536h1v1h-1zM351 541h1v1h-1zM351 546h1v1h-1zM351 551h1v1h-1zM351 556h1v1h-1zM351 561h1v1h-1zM351 566h1v1h-1zM351 571h1v1h-1zM351 576h1v1h-1zM351 581h1v1h-1zM351 586h1v1h-1zM351 591h1v1h-1zM351 596h1v1h-1zM351 601h1v1h-1zM376 6h1v1h-1zM376 11h1v1h-1zM376 16h1v1h-1zM376 21h1v1h-1zM376 26h1v1h-1zM376 31h1v1h-1zM376 36h1v1h-1zM376 41h1v1h-1zM376 46h1v1h-1zM376 51h1v1h-1zM376 56h1v1h-1zM376 61h1v1h-1zM376 66h1v1h-1zM376 71h1v1h-1zM376 76h1v1h-1zM376 81h1v1h-1zM376 86h1v1h-1zM376 91h1v1h-1zM376 96h1v1h-1zM376 101h1v1h-1zM376 106h1v1h-1zM376 111h1v1h-1zM376 116h1v1h-1zM376 121h1v1h-1zM376 126h1v1h-1zM376 131h1v1h-1zM376 136h1v1h-1zM376 141h1v1h-1zM376 146h1v1h-1zM376 151h1v1h-1zM376 156h1v1h-1zM376 161h1v1h-1zM376 166h1v1h-1zM376 171h1v1h-1zM376 176h1v1h-1zM376 181h1v1h-1zM376 186h1v1h-1zM376 191h1v1h-1zM376 196h1v1h-1zM376 201h1v1h-1zM376 206h1v1h-1zM376 211h1v1h-1zM376 216h1v1h-1zM376 221h1v1h-1zM376 226h1v1h-1zM376 231h1v1h-1zM376 236h1v1h-1zM376 241h1v1h-1zM376 246h1v1h-1zM376 251h1v1h-1zM376 256h1v1h-1zM376 261h1v1h-1zM376 266h1v1h-1zM376 271h1v1h-1zM376 276h1v1h-1zM376 281h1v1h-1zM376 286h1v1h-1zM376 291h1v1h-1zM376 296h1v1h-1zM376 301h1v1h-1zM376 306h1v1h-1zM376 311h1v1h-1zM376 316h1v1h-1zM376 321h1v1h-1zM376 326h1v1h-1zM376 331h1v1h-1zM376 336h1v1h-1zM376 341h1v1h-1zM376 346h1v1h-1zM376 351h1v1h-1zM376 356h1v1h-1zM376 361h1v1h-1zM376 366h1v1h-1zM376 371h1v1h-1zM376 376h1v1h-1zM376 381h1v1h-1zM376 386h1v1h-1zM376 391h1v1h-1zM376 396h1v1h-1zM376 401h1v1h-1zM376 406h1v1h-1zM376 411h1v1h-1zM376 416h1v1h-1zM376 421h1v1h-1zM376 426h1v1h-1zM376 431h1v1h-1zM376 436h1v1h-1zM376 441h1v1h-1zM376 446h1v1h-1zM376 451h1v1h-1zM376 456h1v1h-1zM376 461h1v1h-1zM376 466h1v1h-1zM376 471h1v1h-1zM376 476h1v1h-1zM376 481h1v1h-1zM376 486h1v1h-1zM376 491h1v1h-1zM376 496h1v1h-1zM376 501h1v1h-1zM376 506h1v1h-1zM376 511h1v1h-1zM376 516h1v1h-1zM376 521h1v1h-1zM376 526h1v1h-1zM376 531h1v1h-1zM376 536h1v1h-1zM376 541h1v1h-1zM376 546h1v1h-1zM376 551h1v1h-1zM376 556h1v1h-1zM376 561h1v1h-1zM376 566h1v1h-1zM376 571h1v1h-1zM376 576h1v1h-1zM376 581h1v1h-1zM376 586h1v1h-1zM376 591h1v1h-1zM376 596h1v1h-1zM376 601h1v1h-1zM401 6h1v1h-1zM401 11h1v1h-1zM401 16h1v1h-1zM401 21h1v1h-1zM401 26h1v1h-1zM401 31h1v1h-1zM401 36h1v1h-1zM401 41h1v1h-1zM401 46h1v1h-1zM401 51h1v1h-1zM401 56h1v1h-1zM401 61h1v1h-1zM401 66h1v1h-1zM401 71h1v1h-1zM401 76h1v1h-1zM401 81h1v1h-1zM401 86h1v1h-1zM401 91h1v1h-1zM401 96h1v1h-1zM401 101h1v1h-1zM401 106h1v1h-1zM401 111h1v1h-1zM401 116h1v1h-1zM401 121h1v1h-1zM401 126h1v1h-1zM401 131h1v1h-1zM401 136h1v1h-1zM401 141h1v1h-1zM401 146h1v1h-1zM401 151h1v1h-1zM401 156h1v1h-1zM401 161h1v1h-1zM401 166h1v1h-1zM401 171h1v1h-1zM401 176h1v1h-1zM401 181h1v1h-1zM401 186h1v1h-1zM401 191h1v1h-1zM401 196h1v1h-1zM401 201h1v1h-1zM401 206h1v1h-1zM401 211h1v1h-1zM401 216h1v1h-1zM401 221h1v1h-1zM401 226h1v1h-1zM401 231h1v1h-1zM401 236h1v1h-1zM401 241h1v1h-1zM401 246h1v1h-1zM401 251h1v1h-1zM401 256h1v1h-1zM401 261h1v1h-1zM401 266h1v1h-1zM401 271h1v1h-1zM401 276h1v1h-1zM401 281h1v1h-1zM401 286h1v1h-1zM401 291h1v1h-1zM401 296h1v1h-1zM401 301h1v1h-1zM401 306h1v1h-1zM401 311h1v1h-1zM401 316h1v1h-1zM401 321h1v1h-1zM401 326h1v1h-1zM401 331h1v1h-1zM401 336h1v1h-1zM401 341h1v1h-1zM401 346h1v1h-1zM401 351h1v1h-1zM401 356h1v1h-1zM401 361h1v1h-1zM401 366h1v1h-1zM401 371h1v1h-1zM401 376h1v1h-1zM401 381h1v1h-1zM401 386h1v1h-1zM401 391h1v1h-1zM401 396h1v1h-1zM401 401h1v1h-1zM401 406h1v1h-1zM401 411h1v1h-1zM401 416h1v1h-1zM401 421h1v1h-1zM401 426h1v1h-1zM401 431h1v1h-1zM401 436h1v1h-1zM401 441h1v1h-1zM401 446h1v1h-1zM401 451h1v1h-1zM401 456h1v1h-1zM401 461h1v1h-1zM401 466h1v1h-1zM401 471h1v1h-1zM401 476h1v1h-1zM401 481h1v1h-1zM401 486h1v1h-1zM401 491h1v1h-1zM401 496h1v1h-1zM401 501h1v1h-1zM401 506h1v1h-1zM401 511h1v1h-1zM401 516h1v1h-1zM401 521h1v1h-1zM401 526h1v1h-1zM401 531h1v1h-1zM401 536h1v1h-1zM401 541h1v1h-1zM401 546h1v1h-1zM401 551h1v1h-1zM401 556h1v1h-1zM401 561h1v1h-1zM401 566h1v1h-1zM401 571h1v1h-1zM401 576h1v1h-1zM401 581h1v1h-1zM401 586h1v1h-1zM401 591h1v1h-1zM401 596h1v1h-1zM401 601h1v1h-1zM426 6h1v1h-1zM426 11h1v1h-1zM426 16h1v1h-1zM426 21h1v1h-1zM426 26h1v1h-1zM426 31h1v1h-1zM426 36h1v1h-1zM426 41h1v1h-1zM426 46h1v1h-1zM426 51h1v1h-1zM426 56h1v1h-1zM426 61h1v1h-1zM426 66h1v1h-1zM426 71h1v1h-1zM426 76h1v1h-1zM426 81h1v1h-1zM426 86h1v1h-1zM426 91h1v1h-1zM426 96h1v1h-1zM426 101h1v1h-1zM426 106h1v1h-1zM426 111h1v1h-1zM426 116h1v1h-1zM426 121h1v1h-1zM426 126h1v1h-1zM426 131h1v1h-1zM426 136h1v1h-1zM426 141h1v1h-1zM426 146h1v1h-1zM426 151h1v1h-1zM426 156h1v1h-1zM426 161h1v1h-1zM426 166h1v1h-1zM426 171h1v1h-1zM426 176h1v1h-1zM426 181h1v1h-1zM426 186h1v1h-1zM426 191h1v1h-1zM426 196h1v1h-1zM426 201h1v1h-1zM426 206h1v1h-1zM426 211h1v1h-1zM426 216h1v1h-1zM426 221h1v1h-1zM426 226h1v1h-1zM426 231h1v1h-1zM426 236h1v1h-1zM426 241h1v1h-1zM426 246h1v1h-1zM426 251h1v1h-1zM426 256h1v1h-1zM426 261h1v1h-1zM426 266h1v1h-1zM426 271h1v1h-1zM426 276h1v1h-1zM426 281h1v1h-1zM426 286h1v1h-1zM426 291h1v1h-1zM426 296h1v1h-1zM426 301h1v1h-1zM426 306h1v1h-1zM426 311h1v1h-1zM426 316h1v1h-1zM426 321h1v1h-1zM426 326h1v1h-1zM426 331h1v1h-1zM426 336h1v1h-1zM426 341h1v1h-1zM426 346h1v1h-1zM426 351h1v1h-1zM426 356h1v1h-1zM426 361h1v1h-1zM426 366h1v1h-1zM426 371h1v1h-1zM426 376h1v1h-1zM426 381h1v1h-1zM426 386h1v1h-1zM426 391h1v1h-1zM426 396h1v1h-1zM426 401h1v1h-1zM426 406h1v1h-1zM426 411h1v1h-1zM426 416h1v1h-1zM426 421h1v1h-1zM426 426h1v1h-1zM426 431h1v1h-1zM426 436h1v1h-1zM426 441h1v1h-1zM426 446h1v1h-1zM426 451h1v1h-1zM426 456h1v1h-1zM426 461h1v1h-1zM426 466h1v1h-1zM426 471h1v1h-1zM426 476h1v1h-1zM426 481h1v1h-1zM426 486h1v1h-1zM426 491h1v1h-1zM426 496h1v1h-1zM426 501h1v1h-1zM426 506h1v1h-1zM426 511h1v1h-1zM426 516h1v1h-1zM426 521h1v1h-1zM426 526h1v1h-1zM426 531h1v1h-1zM426 536h1v1h-1zM426 541h1v1h-1zM426 546h1v1h-1zM426 551h1v1h-1zM426 556h1v1h-1zM426 561h1v1h-1zM426 566h1v1h-1zM426 571h1v1h-1zM426 576h1v1h-1zM426 581h1v1h-1zM426 586h1v1h-1zM426 591h1v1h-1zM426 596h1v1h-1zM426 601h1v1h-1zM451 6h1v1h-1zM451 11h1v1h-1zM451 16h1v1h-1zM451 21h1v1h-1zM451 26h1v1h-1zM451 31h1v1h-1zM451 36h1v1h-1zM451 41h1v1h-1zM451 46h1v1h-1zM451 51h1v1h-1zM451 56h1v1h-1zM451 61h1v1h-1zM451 66h1v1h-1zM451 71h1v1h-1zM451 76h1v1h-1zM451 81h1v1h-1zM451 86h1v1h-1zM451 91h1v1h-1zM451 96h1v1h-1zM451 101h1v1h-1zM451 106h1v1h-1zM451 111h1v1h-1zM451 116h1v1h-1zM451 121h1v1h-1zM451 126h1v1h-1zM451 131h1v1h-1zM451 136h1v1h-1zM451 141h1v1h-1zM451 146h1v1h-1zM451 151h1v1h-1zM451 156h1v1h-1zM451 161h1v1h-1zM451 166h1v1h-1zM451 171h1v1h-1zM451 176h1v1h-1zM451 181h1v1h-1zM451 186h1v1h-1zM451 191h1v1h-1zM451 196h1v1h-1zM451 201h1v1h-1zM451 206h1v1h-1zM451 211h1v1h-1zM451 216h1v1h-1zM451 221h1v1h-1zM451 226h1v1h-1zM451 231h1v1h-1zM451 236h1v1h-1zM451 241h1v1h-1zM451 246h1v1h-1zM451 251h1v1h-1zM451 256h1v1h-1zM451 261h1v1h-1zM451 266h1v1h-1zM451 271h1v1h-1zM451 276h1v1h-1zM451 281h1v1h-1zM451 286h1v1h-1zM451 291h1v1h-1zM451 296h1v1h-1zM451 301h1v1h-1zM451 306h1v1h-1zM451 311h1v1h-1zM451 316h1v1h-1zM451 321h1v1h-1zM451 326h1v1h-1zM451 331h1v1h-1zM451 336h1v1h-1zM451 341h1v1h-1zM451 346h1v1h-1zM451 351h1v1h-1zM451 356h1v1h-1zM451 361h1v1h-1zM451 366h1v1h-1zM451 371h1v1h-1zM451 376h1v1h-1zM451 381h1v1h-1zM451 386h1v1h-1zM451 391h1v1h-1zM451 396h1v1h-1zM451 401h1v1h-1zM451 406h1v1h-1zM451 411h1v1h-1zM451 416h1v1h-1zM451 421h1v1h-1zM451 426h1v1h-1zM451 431h1v1h-1zM451 436h1v1h-1zM451 441h1v1h-1zM451 446h1v1h-1zM451 451h1v1h-1zM451 456h1v1h-1zM451 461h1v1h-1zM451 466h1v1h-1zM451 471h1v1h-1zM451 476h1v1h-1zM451 481h1v1h-1zM451 486h1v1h-1zM451 491h1v1h-1zM451 496h1v1h-1zM451 501h1v1h-1zM451 506h1v1h-1zM451 511h1v1h-1zM451 516h1v1h-1zM451 521h1v1h-1zM451 526h1v1h-1zM451 531h1v1h-1zM451 536h1v1h-1zM451 541h1v1h-1zM451 546h1v1h-1zM451 551h1v1h-1zM451 556h1v1h-1zM451 561h1v1h-1zM451 566h1v1h-1zM451 571h1v1h-1zM451 576h1v1h-1zM451 581h1v1h-1zM451 586h1v1h-1zM451 591h1v1h-1zM451 596h1v1h-1zM451 601h1v1h-1zM476 6h1v1h-1zM476 11h1v1h-1zM476 16h1v1h-1zM476 21h1v1h-1zM476 26h1v1h-1zM476 31h1v1h-1zM476 36h1v1h-1zM476 41h1v1h-1zM476 46h1v1h-1zM476 51h1v1h-1zM476 56h1v1h-1zM476 61h1v1h-1zM476 66h1v1h-1zM476 71h1v1h-1zM476 76h1v1h-1zM476 81h1v1h-1zM476 86h1v1h-1zM476 91h1v1h-1zM476 96h1v1h-1zM476 101h1v1h-1zM476 106h1v1h-1zM476 111h1v1h-1zM476 116h1v1h-1zM476 121h1v1h-1zM476 126h1v1h-1zM476 131h1v1h-1zM476 136h1v1h-1zM476 141h1v1h-1zM476 146h1v1h-1zM476 151h1v1h-1zM476 156h1v1h-1zM476 161h1v1h-1zM476 166h1v1h-1zM476 171h1v1h-1zM476 176h1v1h-1zM476 181h1v1h-1zM476 186h1v1h-1zM476 191h1v1h-1zM476 196h1v1h-1zM476 201h1v1h-1zM476 206h1v1h-1zM476 211h1v1h-1zM476 216h1v1h-1zM476 221h1v1h-1zM476 226h1v1h-1zM476 231h1v1h-1zM476 236h1v1h-1zM476 241h1v1h-1zM476 246h1v1h-1zM476 251h1v1h-1zM476 256h1v1h-1zM476 261h1v1h-1zM476 266h1v1h-1zM476 271h1v1h-1zM476 276h1v1h-1zM476 281h1v1h-1zM476 286h1v1h-1zM476 291h1v1h-1zM476 296h1v1h-1zM476 301h1v1h-1zM476 306h1v1h-1zM476 311h1v1h-1zM476 316h1v1h-1zM476 321h1v1h-1zM476 326h1v1h-1zM476 331h1v1h-1zM476 336h1v1h-1zM476 341h1v1h-1zM476 346h1v1h-1zM476 351h1v1h-1zM476 356h1v1h-1zM476 361h1v1h-1zM476 366h1v1h-1zM476 371h1v1h-1zM476 376h1v1h-1zM476 381h1v1h-1zM476 386h1v1h-1zM476 391h1v1h-1zM476 396h1v1h-1zM476 401h1v1h-1zM476 406h1v1h-1zM476 411h1v1h-1zM476 416h1v1h-1zM476 421h1v1h-1zM476 426h1v1h-1zM476 431h1v1h-1zM476 436h1v1h-1zM476 441h1v1h-1zM476 446h1v1h-1zM476 451h1v1h-1zM476 456h1v1h-1zM476 461h1v1h-1zM476 466h1v1h-1zM476 471h1v1h-1zM476 476h1v1h-1zM476 481h1v1h-1zM476 486h1v1h-1zM476 491h1v1h-1zM476 496h1v1h-1zM476 501h1v1h-1zM476 506h1v1h-1zM476 511h1v1h-1zM476 516h1v1h-1zM476 521h1v1h-1zM476 526h1v1h-1zM476 531h1v1h-1zM476 536h1v1h-1zM476 541h1v1h-1zM476 546h1v1h-1zM476 551h1v1h-1zM476 556h1v1h-1zM476 561h1v1h-1zM476 566h1v1h-1zM476 571h1v1h-1zM476 576h1v1h-1zM476 581h1v1h-1zM476 586h1v1h-1zM476 591h1v1h-1zM476 596h1v1h-1zM476 601h1v1h-1zM501 6h1v1h-1zM501 11h1v1h-1zM501 16h1v1h-1zM501 21h1v1h-1zM501 26h1v1h-1zM501 31h1v1h-1zM501 36h1v1h-1zM501 41h1v1h-1zM501 46h1v1h-1zM501 51h1v1h-1zM501 56h1v1h-1zM501 61h1v1h-1zM501 66h1v1h-1zM501 71h1v1h-1zM501 76h1v1h-1zM501 81h1v1h-1zM501 86h1v1h-1zM501 91h1v1h-1zM501 96h1v1h-1zM501 101h1v1h-1zM501 106h1v1h-1zM501 111h1v1h-1zM501 116h1v1h-1zM501 121h1v1h-1zM501 126h1v1h-1zM501 131h1v1h-1zM501 136h1v1h-1zM501 141h1v1h-1zM501 146h1v1h-1zM501 151h1v1h-1zM501 156h1v1h-1zM501 161h1v1h-1zM501 166h1v1h-1zM501 171h1v1h-1zM501 176h1v1h-1zM501 181h1v1h-1zM501 186h1v1h-1zM501 191h1v1h-1zM501 196h1v1h-1zM501 201h1v1h-1zM501 206h1v1h-1zM501 211h1v1h-1zM501 216h1v1h-1zM501 221h1v1h-1zM501 226h1v1h-1zM501 231h1v1h-1zM501 236h1v1h-1zM501 241h1v1h-1zM501 246h1v1h-1zM501 251h1v1h-1zM501 256h1v1h-1zM501 261h1v1h-1zM501 266h1v1h-1zM501 271h1v1h-1zM501 276h1v1h-1zM501 281h1v1h-1zM501 286h1v1h-1zM501 291h1v1h-1zM501 296h1v1h-1zM501 301h1v1h-1zM501 306h1v1h-1zM501 311h1v1h-1zM501 316h1v1h-1zM501 321h1v1h-1zM501 326h1v1h-1zM501 331h1v1h-1zM501 336h1v1h-1zM501 341h1v1h-1zM501 346h1v1h-1zM501 351h1v1h-1zM501 356h1v1h-1zM501 361h1v1h-1zM501 366h1v1h-1zM501 371h1v1h-1zM501 376h1v1h-1zM501 381h1v1h-1zM501 386h1v1h-1zM501 391h1v1h-1zM501 396h1v1h-1zM501 401h1v1h-1zM501 406h1v1h-1zM501 411h1v1h-1zM501 416h1v1h-1zM501 421h1v1h-1zM501 426h1v1h-1zM501 431h1v1h-1zM501 436h1v1h-1zM501 441h1v1h-1zM501 446h1v1h-1zM501 451h1v1h-1zM501 456h1v1h-1zM501 461h1v1h-1zM501 466h1v1h-1zM501 471h1v1h-1zM501 476h1v1h-1zM501 481h1v1h-1zM501 486h1v1h-1zM501 491h1v1h-1zM501 496h1v1h-1zM501 501h1v1h-1zM501 506h1v1h-1zM501 511h1v1h-1zM501 516h1v1h-1zM501 521h1v1h-1zM501 526h1v1h-1zM501 531h1v1h-1zM501 536h1v1h-1zM501 541h1v1h-1zM501 546h1v1h-1zM501 551h1v1h-1zM501 556h1v1h-1zM501 561h1v1h-1zM501 566h1v1h-1zM501 571h1v1h-1zM501 576h1v1h-1zM501 581h1v1h-1zM501 586h1v1h-1zM501 591h1v1h-1zM501 596h1v1h-1zM501 601h1v1h-1zM526 6h1v1h-1zM526 11h1v1h-1zM526 16h1v1h-1zM526 21h1v1h-1zM526 26h1v1h-1zM526 31h1v1h-1zM526 36h1v1h-1zM526 41h1v1h-1zM526 46h1v1h-1zM526 51h1v1h-1zM526 56h1v1h-1zM526 61h1v1h-1zM526 66h1v1h-1zM526 71h1v1h-1zM526 76h1v1h-1zM526 81h1v1h-1zM526 86h1v1h-1zM526 91h1v1h-1zM526 96h1v1h-1zM526 101h1v1h-1zM526 106h1v1h-1zM526 111h1v1h-1zM526 116h1v1h-1zM526 121h1v1h-1zM526 126h1v1h-1zM526 131h1v1h-1zM526 136h1v1h-1zM526 141h1v1h-1zM526 146h1v1h-1zM526 151h1v1h-1zM526 156h1v1h-1zM526 161h1v1h-1zM526 166h1v1h-1zM526 171h1v1h-1zM526 176h1v1h-1zM526 181h1v1h-1zM526 186h1v1h-1zM526 191h1v1h-1zM526 196h1v1h-1zM526 201h1v1h-1zM526 206h1v1h-1zM526 211h1v1h-1zM526 216h1v1h-1zM526 221h1v1h-1zM526 226h1v1h-1zM526 231h1v1h-1zM526 236h1v1h-1zM526 241h1v1h-1zM526 246h1v1h-1zM526 251h1v1h-1zM526 256h1v1h-1zM526 261h1v1h-1zM526 266h1v1h-1zM526 271h1v1h-1zM526 276h1v1h-1zM526 281h1v1h-1zM526 286h1v1h-1zM526 291h1v1h-1zM526 296h1v1h-1zM526 301h1v1h-1zM526 306h1v1h-1zM526 311h1v1h-1zM526 316h1v1h-1zM526 321h1v1h-1zM526 326h1v1h-1zM526 331h1v1h-1zM526 336h1v1h-1zM526 341h1v1h-1zM526 346h1v1h-1zM526 351h1v1h-1zM526 356h1v1h-1zM526 361h1v1h-1zM526 366h1v1h-1zM526 371h1v1h-1zM526 376h1v1h-1zM526 381h1v1h-1zM526 386h1v1h-1zM526 391h1v1h-1zM526 396h1v1h-1zM526 401h1v1h-1zM526 406h1v1h-1zM526 411h1v1h-1zM526 416h1v1h-1zM526 421h1v1h-1zM526 426h1v1h-1zM526 431h1v1h-1zM526 436h1v1h-1zM526 441h1v1h-1zM526 446h1v1h-1zM526 451h1v1h-1zM526 456h1v1h-1zM526 461h1v1h-1zM526 466h1v1h-1zM526 471h1v1h-1zM526 476h1v1h-1zM526 481h1v1h-1zM526 486h1v1h-1zM526 491h1v1h-1zM526 496h1v1h-1zM526 501h1v1h-1zM526 506h1v1h-1zM526 511h1v1h-1zM526 516h1v1h-1zM526 521h1v1h-1zM526 526h1v1h-1zM526 531h1v1h-1zM526 536h1v1h-1zM526 541h1v1h-1zM526 546h1v1h-1zM526 551h1v1h-1zM526 556h1v1h-1zM526 561h1v1h-1zM526 566h1v1h-1zM526 571h1v1h-1zM526 576h1v1h-1zM526 581h1v1h-1zM526 586h1v1h-1zM526 591h1v1h-1zM526 596h1v1h-1zM526 601h1v1h-1zM551 6h1v1h-1zM551 11h1v1h-1zM551 16h1v1h-1zM551 21h1v1h-1zM551 26h1v1h-1zM551 31h1v1h-1zM551 36h1v1h-1zM551 41h1v1h-1zM551 46h1v1h-1zM551 51h1v1h-1zM551 56h1v1h-1zM551 61h1v1h-1zM551 66h1v1h-1zM551 71h1v1h-1zM551 76h1v1h-1zM551 81h1v1h-1zM551 86h1v1h-1zM551 91h1v1h-1zM551 96h1v1h-1zM551 101h1v1h-1zM551 106h1v1h-1zM551 111h1v1h-1zM551 116h1v1h-1zM551 121h1v1h-1zM551 126h1v1h-1zM551 131h1v1h-1zM551 136h1v1h-1zM551 141h1v1h-1zM551 146h1v1h-1zM551 151h1v1h-1zM551 156h1v1h-1zM551 161h1v1h-1zM551 166h1v1h-1zM551 171h1v1h-1zM551 176h1v1h-1zM551 181h1v1h-1zM551 186h1v1h-1zM551 191h1v1h-1zM551 196h1v1h-1zM551 201h1v1h-1zM551 206h1v1h-1zM551 211h1v1h-1zM551 216h1v1h-1zM551 221h1v1h-1zM551 226h1v1h-1zM551 231h1v1h-1zM551 236h1v1h-1zM551 241h1v1h-1zM551 246h1v1h-1zM551 251h1v1h-1zM551 256h1v1h-1zM551 261h1v1h-1zM551 266h1v1h-1zM551 271h1v1h-1zM551 276h1v1h-1zM551 281h1v1h-1zM551 286h1v1h-1zM551 291h1v1h-1zM551 296h1v1h-1zM551 301h1v1h-1zM551 306h1v1h-1zM551 311h1v1h-1zM551 316h1v1h-1zM551 321h1v1h-1zM551 326h1v1h-1zM551 331h1v1h-1zM551 336h1v1h-1zM551 341h1v1h-1zM551 346h1v1h-1zM551 351h1v1h-1zM551 356h1v1h-1zM551 361h1v1h-1zM551 366h1v1h-1zM551 371h1v1h-1zM551 376h1v1h-1zM551 381h1v1h-1zM551 386h1v1h-1zM551 391h1v1h-1zM551 396h1v1h-1zM551 401h1v1h-1zM551 406h1v1h-1zM551 411h1v1h-1zM551 416h1v1h-1zM551 421h1v1h-1zM551 426h1v1h-1zM551 431h1v1h-1zM551 436h1v1h-1zM551 441h1v1h-1zM551 446h1v1h-1zM551 451h1v1h-1zM551 456h1v1h-1zM551 461h1v1h-1zM551 466h1v1h-1zM551 471h1v1h-1zM551 476h1v1h-1zM551 481h1v1h-1zM551 486h1v1h-1zM551 491h1v1h-1zM551 496h1v1h-1zM551 501h1v1h-1zM551 506h1v1h-1zM551 511h1v1h-1zM551 516h1v1h-1zM551 521h1v1h-1zM551 526h1v1h-1zM551 531h1v1h-1zM551 536h1v1h-1zM551 541h1v1h-1zM551 546h1v1h-1zM551 551h1v1h-1zM551 556h1v1h-1zM551 561h1v1h-1zM551 566h1v1h-1zM551 571h1v1h-1zM551 576h1v1h-1zM551 581h1v1h-1zM551 586h1v1h-1zM551 591h1v1h-1zM551 596h1v1h-1zM551 601h1v1h-1zM576 6h1v1h-1zM576 11h1v1h-1zM576 16h1v1h-1zM576 21h1v1h-1zM576 26h1v1h-1zM576 31h1v1h-1zM576 36h1v1h-1zM576 41h1v1h-1zM576 46h1v1h-1zM576 51h1v1h-1zM576 56h1v1h-1zM576 61h1v1h-1zM576 66h1v1h-1zM576 71h1v1h-1zM576 76h1v1h-1zM576 81h1v1h-1zM576 86h1v1h-1zM576 91h1v1h-1zM576 96h1v1h-1zM576 101h1v1h-1zM576 106h1v1h-1zM576 111h1v1h-1zM576 116h1v1h-1zM576 121h1v1h-1zM576 126h1v1h-1zM576 131h1v1h-1zM576 136h1v1h-1zM576 141h1v1h-1zM576 146h1v1h-1zM576 151h1v1h-1zM576 156h1v1h-1zM576 161h1v1h-1zM576 166h1v1h-1zM576 171h1v1h-1zM576 176h1v1h-1zM576 181h1v1h-1zM576 186h1v1h-1zM576 191h1v1h-1zM576 196h1v1h-1zM576 201h1v1h-1zM576 206h1v1h-1zM576 211h1v1h-1zM576 216h1v1h-1zM576 221h1v1h-1zM576 226h1v1h-1zM576 231h1v1h-1zM576 236h1v1h-1zM576 241h1v1h-1zM576 246h1v1h-1zM576 251h1v1h-1zM576 256h1v1h-1zM576 261h1v1h-1zM576 266h1v1h-1zM576 271h1v1h-1zM576 276h1v1h-1zM576 281h1v1h-1zM576 286h1v1h-1zM576 291h1v1h-1zM576 296h1v1h-1zM576 301h1v1h-1zM576 306h1v1h-1zM576 311h1v1h-1zM576 316h1v1h-1zM576 321h1v1h-1zM576 326h1v1h-1zM576 331h1v1h-1zM576 336h1v1h-1zM576 341h1v1h-1zM576 346h1v1h-1zM576 351h1v1h-1zM576 356h1v1h-1zM576 361h1v1h-1zM576 366h1v1h-1zM576 371h1v1h-1zM576 376h1v1h-1zM576 381h1v1h-1zM576 386h1v1h-1zM576 391h1v1h-1zM576 396h1v1h-1zM576 401h1v1h-1zM576 406h1v1h-1zM576 411h1v1h-1zM576 416h1v1h-1zM576 421h1v1h-1zM576 426h1v1h-1zM576 431h1v1h-1zM576 436h1v1h-1zM576 441h1v1h-1zM576 446h1v1h-1zM576 451h1v1h-1zM576 456h1v1h-1zM576 461h1v1h-1zM576 466h1v1h-1zM576 471h1v1h-1zM576 476h1v1h-1zM576 481h1v1h-1zM576 486h1v1h-1zM576 491h1v1h-1zM576 496h1v1h-1zM576 501h1v1h-1zM576 506h1v1h-1zM576 511h1v1h-1zM576 516h1v1h-1zM576 521h1v1h-1zM576 526h1v1h-1zM576 531h1v1h-1zM576 536h1v1h-1zM576 541h1v1h-1zM576 546h1v1h-1zM576 551h1v1h-1zM576 556h1v1h-1zM576 561h1v1h-1zM576 566h1v1h-1zM576 571h1v1h-1zM576 576h1v1h-1zM576 581h1v1h-1zM576 586h1v1h-1zM576 591h1v1h-1zM576 596h1v1h-1zM576 601h1v1h-1zM601 6h1v1h-1zM601 11h1v1h-1zM601 16h1v1h-1zM601 21h1v1h-1zM601 26h1v1h-1zM601 31h1v1h-1zM601 36h1v1h-1zM601 41h1v1h-1zM601 46h1v1h-1zM601 51h1v1h-1zM601 56h1v1h-1zM601 61h1v1h-1zM601 66h1v1h-1zM601 71h1v1h-1zM601 76h1v1h-1zM601 81h1v1h-1zM601 86h1v1h-1zM601 91h1v1h-1zM601 96h1v1h-1zM601 101h1v1h-1zM601 106h1v1h-1zM601 111h1v1h-1zM601 116h1v1h-1zM601 121h1v1h-1zM601 126h1v1h-1zM601 131h1v1h-1zM601 136h1v1h-1zM601 141h1v1h-1zM601 146h1v1h-1zM601 151h1v1h-1zM601 156h1v1h-1zM601 161h1v1h-1zM601 166h1v1h-1zM601 171h1v1h-1zM601 176h1v1h-1zM601 181h1v1h-1zM601 186h1v1h-1zM601 191h1v1h-1zM601 196h1v1h-1zM601 201h1v1h-1zM601 206h1v1h-1zM601 211h1v1h-1zM601 216h1v1h-1zM601 221h1v1h-1zM601 226h1v1h-1zM601 231h1v1h-1zM601 236h1v1h-1zM601 241h1v1h-1zM601 246h1v1h-1zM601 251h1v1h-1zM601 256h1v1h-1zM601 261h1v1h-1zM601 266h1v1h-1zM601 271h1v1h-1zM601 276h1v1h-1zM601 281h1v1h-1zM601 286h1v1h-1zM601 291h1v1h-1zM601 296h1v1h-1zM601 301h1v1h-1zM601 306h1v1h-1zM601 311h1v1h-1zM601 316h1v1h-1zM601 321h1v1h-1zM601 326h1v1h-1zM601 331h1v1h-1zM601 336h1v1h-1zM601 341h1v1h-1zM601 346h1v1h-1zM601 351h1v1h-1zM601 356h1v1h-1zM601 361h1v1h-1zM601 366h1v1h-1zM601 371h1v1h-1zM601 376h1v1h-1zM601 381h1v1h-1zM601 386h1v1h-1zM601 391h1v1h-1zM601 396h1v1h-1zM601 401h1v1h-1zM601 406h1v1h-1zM601 411h1v1h-1zM601 416h1v1h-1zM601 421h1v1h-1zM601 426h1v1h-1zM601 431h1v1h-1zM601 436h1v1h-1zM601 441h1v1h-1zM601 446h1v1h-1zM601 451h1v1h-1zM601 456h1v1h-1zM601 461h1v1h-1zM601 466h1v1h-1zM601 471h1v1h-1zM601 476h1v1h-1zM601 481h1v1h-1zM601 486h1v1h-1zM601 491h1v1h-1zM601 496h1v1h-1zM601 501h1v1h-1zM601 506h1v1h-1zM601 511h1v1h-1zM601 516h1v1h-1zM601 521h1v1h-1zM601 526h1v1h-1zM601 531h1v1h-1zM601 536h1v1h-1zM601 541h1v1h-1zM601 546h1v1h-1zM601 551h1v1h-1zM601 556h1v1h-1zM601 561h1v1h-1zM601 566h1v1h-1zM601 571h1v1h-1zM601 576h1v1h-1zM601 581h1v1h-1zM601 586h1v1h-1zM601 591h1v1h-1zM601 596h1v1h-1zM601 601h1v1h-1zM626 6h1v1h-1zM626 11h1v1h-1zM626 16h1v1h-1zM626 21h1v1h-1zM626 26h1v1h-1zM626 31h1v1h-1zM626 36h1v1h-1zM626 41h1v1h-1zM626 46h1v1h-1zM626 51h1v1h-1zM626 56h1v1h-1zM626 61h1v1h-1zM626 66h1v1h-1zM626 71h1v1h-1zM626 76h1v1h-1zM626 81h1v1h-1zM626 86h1v1h-1zM626 91h1v1h-1zM626 96h1v1h-1zM626 101h1v1h-1zM626 106h1v1h-1zM626 111h1v1h-1zM626 116h1v1h-1zM626 121h1v1h-1zM626 126h1v1h-1zM626 131h1v1h-1zM626 136h1v1h-1zM626 141h1v1h-1zM626 146h1v1h-1zM626 151h1v1h-1zM626 156h1v1h-1zM626 161h1v1h-1zM626 166h1v1h-1zM626 171h1v1h-1zM626 176h1v1h-1zM626 181h1v1h-1zM626 186h1v1h-1zM626 191h1v1h-1zM626 196h1v1h-1zM626 201h1v1h-1zM626 206h1v1h-1zM626 211h1v1h-1zM626 216h1v1h-1zM626 221h1v1h-1zM626 226h1v1h-1zM626 231h1v1h-1zM626 236h1v1h-1zM626 241h1v1h-1zM626 246h1v1h-1zM626 251h1v1h-1zM626 256h1v1h-1zM626 261h1v1h-1zM626 266h1v1h-1zM626 271h1v1h-1zM626 276h1v1h-1zM626 281h1v1h-1zM626 286h1v1h-1zM626 291h1v1h-1zM626 296h1v1h-1zM626 301h1v1h-1zM626 306h1v1h-1zM626 311h1v1h-1zM626 316h1v1h-1zM626 321h1v1h-1zM626 326h1v1h-1zM626 331h1v1h-1zM626 336h1v1h-1zM626 341h1v1h-1zM626 346h1v1h-1zM626 351h1v1h-1zM626 356h1v1h-1zM626 361h1v1h-1zM626 366h1v1h-1zM626 371h1v1h-1zM626 376h1v1h-1zM626 381h1v1h-1zM626 386h1v1h-1zM626 391h1v1h-1zM626 396h1v1h-1zM626 401h1v1h-1zM626 406h1v1h-1zM626 411h1v1h-1zM626 416h1v1h-1zM626 421h1v1h-1zM626 426h1v1h-1zM626 431h1v1h-1zM626 436h1v1h-1zM626 441h1v1h-1zM626 446h1v1h-1zM626 451h1v1h-1zM626 456h1v1h-1zM626 461h1v1h-1zM626 466h1v1h-1zM626 471h1v1h-1zM626 476h1v1h-1zM626 481h1v1h-1zM626 486h1v1h-1zM626 491h1v1h-1zM626 496h1v1h-1zM626 501h1v1h-1zM626 506h1v1h-1zM626 511h1v1h-1zM626 516h1v1h-1zM626 521h1v1h-1zM626 526h1v1h-1zM626 531h1v1h-1zM626 536h1v1h-1zM626 541h1v1h-1zM626 546h1v1h-1zM626 551h1v1h-1zM626 556h1v1h-1zM626 561h1v1h-1zM626 566h1v1h-1zM626 571h1v1h-1zM626 576h1v1h-1zM626 581h1v1h-1zM626 586h1v1h-1zM626 591h1v1h-1zM626 596h1v1h-1zM626 601h1v1h-1zM651 6h1v1h-1zM651 11h1v1h-1zM651 16h1v1h-1zM651 21h1v1h-1zM651 26h1v1h-1zM651 31h1v1h-1zM651 36h1v1h-1zM651 41h1v1h-1zM651 46h1v1h-1zM651 51h1v1h-1zM651 56h1v1h-1zM651 61h1v1h-1zM651 66h1v1h-1zM651 71h1v1h-1zM651 76h1v1h-1zM651 81h1v1h-1zM651 86h1v1h-1zM651 91h1v1h-1zM651 96h1v1h-1zM651 101h1v1h-1zM651 106h1v1h-1zM651 111h1v1h-1zM651 116h1v1h-1zM651 121h1v1h-1zM651 126h1v1h-1zM651 131h1v1h-1zM651 136h1v1h-1zM651 141h1v1h-1zM651 146h1v1h-1zM651 151h1v1h-1zM651 156h1v1h-1zM651 161h1v1h-1zM651 166h1v1h-1zM651 171h1v1h-1zM651 176h1v1h-1zM651 181h1v1h-1zM651 186h1v1h-1zM651 191h1v1h-1zM651 196h1v1h-1zM651 201h1v1h-1zM651 206h1v1h-1zM651 211h1v1h-1zM651 216h1v1h-1zM651 221h1v1h-1zM651 226h1v1h-1zM651 231h1v1h-1zM651 236h1v1h-1zM651 241h1v1h-1zM651 246h1v1h-1zM651 251h1v1h-1zM651 256h1v1h-1zM651 261h1v1h-1zM651 266h1v1h-1zM651 271h1v1h-1zM651 276h1v1h-1zM651 281h1v1h-1zM651 286h1v1h-1zM651 291h1v1h-1zM651 296h1v1h-1zM651 301h1v1h-1zM651 306h1v1h-1zM651 311h1v1h-1zM651 316h1v1h-1zM651 321h1v1h-1zM651 326h1v1h-1zM651 331h1v1h-1zM651 336h1v1h-1zM651 341h1v1h-1zM651 346h1v1h-1zM651 351h1v1h-1zM651 356h1v1h-1zM651 361h1v1h-1zM651 366h1v1h-1zM651 371h1v1h-1zM651 376h1v1h-1zM651 381h1v1h-1zM651 386h1v1h-1zM651 391h1v1h-1zM651 396h1v1h-1zM651 401h1v1h-1zM651 406h1v1h-1zM651 411h1v1h-1zM651 416h1v1h-1zM651 421h1v1h-1zM651 426h1v1h-1zM651 431h1v1h-1zM651 436h1v1h-1zM651 441h1v1h-1zM651 446h1v1h-1zM651 451h1v1h-1zM651 456h1v1h-1zM651 461h1v1h-1zM651 466h1v1h-1zM651 471h1v1h-1zM651 476h1v1h-1zM651 481h1v1h-1zM651 486h1v1h-1zM651 491h1v1h-1zM651 496h1v1h-1zM651 501h1v1h-1zM651 506h1v1h-1zM651 511h1v1h-1zM651 516h1v1h-1zM651 521h1v1h-1zM651 526h1v1h-1zM651 531h1v1h-1zM651 536h1v1h-1zM651 541h1v1h-1zM651 546h1v1h-1zM651 551h1v1h-1zM651 556h1v1h-1zM651 561h1v1h-1zM651 566h1v1h-1zM651 571h1v1h-1zM651 576h1v1h-1zM651 581h1v1h-1zM651 586h1v1h-1zM651 591h1v1h-1zM651 596h1v1h-1zM651 601h1v1h-1zM676 6h1v1h-1zM676 11h1v1h-1zM676 16h1v1h-1zM676 21h1v1h-1zM676 26h1v1h-1zM676 31h1v1h-1zM676 36h1v1h-1zM676 41h1v1h-1zM676 46h1v1h-1zM676 51h1v1h-1zM676 56h1v1h-1zM676 61h1v1h-1zM676 66h1v1h-1zM676 71h1v1h-1zM676 76h1v1h-1zM676 81h1v1h-1zM676 86h1v1h-1zM676 91h1v1h-1zM676 96h1v1h-1zM676 101h1v1h-1zM676 106h1v1h-1zM676 111h1v1h-1zM676 116h1v1h-1zM676 121h1v1h-1zM676 126h1v1h-1zM676 131h1v1h-1zM676 136h1v1h-1zM676 141h1v1h-1zM676 146h1v1h-1zM676 151h1v1h-1zM676 156h1v1h-1zM676 161h1v1h-1zM676 166h1v1h-1zM676 171h1v1h-1zM676 176h1v1h-1zM676 181h1v1h-1zM676 186h1v1h-1zM676 191h1v1h-1zM676 196h1v1h-1zM676 201h1v1h-1zM676 206h1v1h-1zM676 211h1v1h-1zM676 216h1v1h-1zM676 221h1v1h-1zM676 226h1v1h-1zM676 231h1v1h-1zM676 236h1v1h-1zM676 241h1v1h-1zM676 246h1v1h-1zM676 251h1v1h-1zM676 256h1v1h-1zM676 261h1v1h-1zM676 266h1v1h-1zM676 271h1v1h-1zM676 276h1v1h-1zM676 281h1v1h-1zM676 286h1v1h-1zM676 291h1v1h-1zM676 296h1v1h-1zM676 301h1v1h-1zM676 306h1v1h-1zM676 311h1v1h-1zM676 316h1v1h-1zM676 321h1v1h-1zM676 326h1v1h-1zM676 331h1v1h-1zM676 336h1v1h-1zM676 341h1v1h-1zM676 346h1v1h-1zM676 351h1v1h-1zM676 356h1v1h-1zM676 361h1v1h-1zM676 366h1v1h-1zM676 371h1v1h-1zM676 376h1v1h-1zM676 381h1v1h-1zM676 386h1v1h-1zM676 391h1v1h-1zM676 396h1v1h-1zM676 401h1v1h-1zM676 406h1v1h-1zM676 411h1v1h-1zM676 416h1v1h-1zM676 421h1v1h-1zM676 426h1v1h-1zM676 431h1v1h-1zM676 436h1v1h-1zM676 441h1v1h-1zM676 446h1v1h-1zM676 451h1v1h-1zM676 456h1v1h-1zM676 461h1v1h-1zM676 466h1v1h-1zM676 471h1v1h-1zM676 476h1v1h-1zM676 481h1v1h-1zM676 486h1v1h-1zM676 491h1v1h-1zM676 496h1v1h-1zM676 501h1v1h-1zM676 506h1v1h-1zM676 511h1v1h-1zM676 516h1v1h-1zM676 521h1v1h-1zM676 526h1v1h-1zM676 531h1v1h-1zM676 536h1v1h-1zM676 541h1v1h-1zM676 546h1v1h-1zM676 551h1v1h-1zM676 556h1v1h-1zM676 561h1v1h-1zM676 566h1v1h-1zM676 571h1v1h-1zM676 576h1v1h-1zM676 581h1v1h-1zM676 586h1v1h-1zM676 591h1v1h-1zM676 596h1v1h-1zM676 601h1v1h-1zM701 6h1v1h-1zM701 11h1v1h-1zM701 16h1v1h-1zM701 21h1v1h-1zM701 26h1v1h-1zM701 31h1v1h-1zM701 36h1v1h-1zM701 41h1v1h-1zM701 46h1v1h-1zM701 51h1v1h-1zM701 56h1v1h-1zM701 61h1v1h-1zM701 66h1v1h-1zM701 71h1v1h-1zM701 76h1v1h-1zM701 81h1v1h-1zM701 86h1v1h-1zM701 91h1v1h-1zM701 96h1v1h-1zM701 101h1v1h-1zM701 106h1v1h-1zM701 111h1v1h-1zM701 116h1v1h-1zM701 121h1v1h-1zM701 126h1v1h-1zM701 131h1v1h-1zM701 136h1v1h-1zM701 141h1v1h-1zM701 146h1v1h-1zM701 151h1v1h-1zM701 156h1v1h-1zM701 161h1v1h-1zM701 166h1v1h-1zM701 171h1v1h-1zM701 176h1v1h-1zM701 181h1v1h-1zM701 186h1v1h-1zM701 191h1v1h-1zM701 196h1v1h-1zM701 201h1v1h-1zM701 206h1v1h-1zM701 211h1v1h-1zM701 216h1v1h-1zM701 221h1v1h-1zM701 226h1v1h-1zM701 231h1v1h-1zM701 236h1v1h-1zM701 241h1v1h-1zM701 246h1v1h-1zM701 251h1v1h-1zM701 256h1v1h-1zM701 261h1v1h-1zM701 266h1v1h-1zM701 271h1v1h-1zM701 276h1v1h-1zM701 281h1v1h-1zM701 286h1v1h-1zM701 291h1v1h-1zM701 296h1v1h-1zM701 301h1v1h-1zM701 306h1v1h-1zM701 311h1v1h-1zM701 316h1v1h-1zM701 321h1v1h-1zM701 326h1v1h-1zM701 331h1v1h-1zM701 336h1v1h-1zM701 341h1v1h-1zM701 346h1v1h-1zM701 351h1v1h-1zM701 356h1v1h-1zM701 361h1v1h-1zM701 366h1v1h-1zM701 371h1v1h-1zM701 376h1v1h-1zM701 381h1v1h-1zM701 386h1v1h-1zM701 391h1v1h-1zM701 396h1v1h-1zM701 401h1v1h-1zM701 406h1v1h-1zM701 411h1v1h-1zM701 416h1v1h-1zM701 421h1v1h-1zM701 426h1v1h-1zM701 431h1v1h-1zM701 436h1v1h-1zM701 441h1v1h-1zM701 446h1v1h-1zM701 451h1v1h-1zM701 456h1v1h-1zM701 461h1v1h-1zM701 466h1v1h-1zM701 471h1v1h-1zM701 476h1v1h-1zM701 481h1v1h-1zM701 486h1v1h-1zM701 491h1v1h-1zM701 496h1v1h-1zM701 501h1v1h-1zM701 506h1v1h-1zM701 511h1v1h-1zM701 516h1v1h-1zM701 521h1v1h-1zM701 526h1v1h-1zM701 531h1v1h-1zM701 536h1v1h-1zM701 541h1v1h-1zM701 546h1v1h-1zM701 551h1v1h-1zM701 556h1v1h-1zM701 561h1v1h-1zM701 566h1v1h-1zM701 571h1v1h-1zM701 576h1v1h-1zM701 581h1v1h-1zM701 586h1v1h-1zM701 591h1v1h-1zM701 596h1v1h-1zM701 601h1v1h-1zM726 6h1v1h-1zM726 11h1v1h-1zM726 16h1v1h-1zM726 21h1v1h-1zM726 26h1v1h-1zM726 31h1v1h-1zM726 36h1v1h-1zM726 41h1v1h-1zM726 46h1v1h-1zM726 51h1v1h-1zM726 56h1v1h-1zM726 61h1v1h-1zM726 66h1v1h-1zM726 71h1v1h-1zM726 76h1v1h-1zM726 81h1v1h-1zM726 86h1v1h-1zM726 91h1v1h-1zM726 96h1v1h-1zM726 101h1v1h-1zM726 106h1v1h-1zM726 111h1v1h-1zM726 116h1v1h-1zM726 121h1v1h-1zM726 126h1v1h-1zM726 131h1v1h-1zM726 136h1v1h-1zM726 141h1v1h-1zM726 146h1v1h-1zM726 151h1v1h-1zM726 156h1v1h-1zM726 161h1v1h-1zM726 166h1v1h-1zM726 171h1v1h-1zM726 176h1v1h-1zM726 181h1v1h-1zM726 186h1v1h-1zM726 191h1v1h-1zM726 196h1v1h-1zM726 201h1v1h-1zM726 206h1v1h-1zM726 211h1v1h-1zM726 216h1v1h-1zM726 221h1v1h-1zM726 226h1v1h-1zM726 231h1v1h-1zM726 236h1v1h-1zM726 241h1v1h-1zM726 246h1v1h-1zM726 251h1v1h-1zM726 256h1v1h-1zM726 261h1v1h-1zM726 266h1v1h-1zM726 271h1v1h-1zM726 276h1v1h-1zM726 281h1v1h-1zM726 286h1v1h-1zM726 291h1v1h-1zM726 296h1v1h-1zM726 301h1v1h-1zM726 306h1v1h-1zM726 311h1v1h-1zM726 316h1v1h-1zM726 321h1v1h-1zM726 326h1v1h-1zM726 331h1v1h-1zM726 336h1v1h-1zM726 341h1v1h-1zM726 346h1v1h-1zM726 351h1v1h-1zM726 356h1v1h-1zM726 361h1v1h-1zM726 366h1v1h-1zM726 371h1v1h-1zM726 376h1v1h-1zM726 381h1v1h-1zM726 386h1v1h-1zM726 391h1v1h-1zM726 396h1v1h-1zM726 401h1v1h-1zM726 406h1v1h-1zM726 411h1v1h-1zM726 416h1v1h-1zM726 421h1v1h-1zM726 426h1v1h-1zM726 431h1v1h-1zM726 436h1v1h-1zM726 441h1v1h-1zM726 446h1v1h-1zM726 451h1v1h-1zM726 456h1v1h-1zM726 461h1v1h-1zM726 466h1v1h-1zM726 471h1v1h-1zM726 476h1v1h-1zM726 481h1v1h-1zM726 486h1v1h-1zM726 491h1v1h-1zM726 496h1v1h-1zM726 501h1v1h-1zM726 506h1v1h-1zM726 511h1v1h-1zM726 516h1v1h-1zM726 521h1v1h-1zM726 526h1v1h-1zM726 531h1v1h-1zM726 536h1v1h-1zM726 541h1v1h-1zM726 546h1v1h-1zM726 551h1v1h-1zM726 556h1v1h-1zM726 561h1v1h-1zM726 566h1v1h-1zM726 571h1v1h-1zM726 576h1v1h-1zM726 581h1v1h-1zM726 586h1v1h-1zM726 591h1v1h-1zM726 596h1v1h-1zM726 601h1v1h-1zM751 6h1v1h-1zM751 11h1v1h-1zM751 16h1v1h-1zM751 21h1v1h-1zM751 26h1v1h-1zM751 31h1v1h-1zM751 36h1v1h-1zM751 41h1v1h-1zM751 46h1v1h-1zM751 51h1v1h-1zM751 56h1v1h-1zM751 61h1v1h-1zM751 66h1v1h-1zM751 71h1v1h-1zM751 76h1v1h-1zM751 81h1v1h-1zM751 86h1v1h-1zM751 91h1v1h-1zM751 96h1v1h-1zM751 101h1v1h-1zM751 106h1v1h-1zM751 111h1v1h-1zM751 116h1v1h-1zM751 121h1v1h-1zM751 126h1v1h-1zM751 131h1v1h-1zM751 136h1v1h-1zM751 141h1v1h-1zM751 146h1v1h-1zM751 151h1v1h-1zM751 156h1v1h-1zM751 161h1v1h-1zM751 166h1v1h-1zM751 171h1v1h-1zM751 176h1v1h-1zM751 181h1v1h-1zM751 186h1v1h-1zM751 191h1v1h-1zM751 196h1v1h-1zM751 201h1v1h-1zM751 206h1v1h-1zM751 211h1v1h-1zM751 216h1v1h-1zM751 221h1v1h-1zM751 226h1v1h-1zM751 231h1v1h-1zM751 236h1v1h-1zM751 241h1v1h-1zM751 246h1v1h-1zM751 251h1v1h-1zM751 256h1v1h-1zM751 261h1v1h-1zM751 266h1v1h-1zM751 271h1v1h-1zM751 276h1v1h-1zM751 281h1v1h-1zM751 286h1v1h-1zM751 291h1v1h-1zM751 296h1v1h-1zM751 301h1v1h-1zM751 306h1v1h-1zM751 311h1v1h-1zM751 316h1v1h-1zM751 321h1v1h-1zM751 326h1v1h-1zM751 331h1v1h-1zM751 336h1v1h-1zM751 341h1v1h-1zM751 346h1v1h-1zM751 351h1v1h-1zM751 356h1v1h-1zM751 361h1v1h-1zM751 366h1v1h-1zM751 371h1v1h-1zM751 376h1v1h-1zM751 381h1v1h-1zM751 386h1v1h-1zM751 391h1v1h-1zM751 396h1v1h-1zM751 401h1v1h-1zM751 406h1v1h-1zM751 411h1v1h-1zM751 416h1v1h-1zM751 421h1v1h-1zM751 426h1v1h-1zM751 431h1v1h-1zM751 436h1v1h-1zM751 441h1v1h-1zM751 446h1v1h-1zM751 451h1v1h-1zM751 456h1v1h-1zM751 461h1v1h-1zM751 466h1v1h-1zM751 471h1v1h-1zM751 476h1v1h-1zM751 481h1v1h-1zM751 486h1v1h-1zM751 491h1v1h-1zM751 496h1v1h-1zM751 501h1v1h-1zM751 506h1v1h-1zM751 511h1v1h-1zM751 516h1v1h-1zM751 521h1v1h-1zM751 526h1v1h-1zM751 531h1v1h-1zM751 536h1v1h-1zM751 541h1v1h-1zM751 546h1v1h-1zM751 551h1v1h-1zM751 556h1v1h-1zM751 561h1v1h-1zM751 566h1v1h-1zM751 571h1v1h-1zM751 576h1v1h-1zM751 581h1v1h-1zM751 586h1v1h-1zM751 591h1v1h-1zM751 596h1v1h-1zM751 601h1v1h-1zM776 6h1v1h-1zM776 11h1v1h-1zM776 16h1v1h-1zM776 21h1v1h-1zM776 26h1v1h-1zM776 31h1v1h-1zM776 36h1v1h-1zM776 41h1v1h-1zM776 46h1v1h-1zM776 51h1v1h-1zM776 56h1v1h-1zM776 61h1v1h-1zM776 66h1v1h-1zM776 71h1v1h-1zM776 76h1v1h-1zM776 81h1v1h-1zM776 86h1v1h-1zM776 91h1v1h-1zM776 96h1v1h-1zM776 101h1v1h-1zM776 106h1v1h-1zM776 111h1v1h-1zM776 116h1v1h-1zM776 121h1v1h-1zM776 126h1v1h-1zM776 131h1v1h-1zM776 136h1v1h-1zM776 141h1v1h-1zM776 146h1v1h-1zM776 151h1v1h-1zM776 156h1v1h-1zM776 161h1v1h-1zM776 166h1v1h-1zM776 171h1v1h-1zM776 176h1v1h-1zM776 181h1v1h-1zM776 186h1v1h-1zM776 191h1v1h-1zM776 196h1v1h-1zM776 201h1v1h-1zM776 206h1v1h-1zM776 211h1v1h-1zM776 216h1v1h-1zM776 221h1v1h-1zM776 226h1v1h-1zM776 231h1v1h-1zM776 236h1v1h-1zM776 241h1v1h-1zM776 246h1v1h-1zM776 251h1v1h-1zM776 256h1v1h-1zM776 261h1v1h-1zM776 266h1v1h-1zM776 271h1v1h-1zM776 276h1v1h-1zM776 281h1v1h-1zM776 286h1v1h-1zM776 291h1v1h-1zM776 296h1v1h-1zM776 301h1v1h-1zM776 306h1v1h-1zM776 311h1v1h-1zM776 316h1v1h-1zM776 321h1v1h-1zM776 326h1v1h-1zM776 331h1v1h-1zM776 336h1v1h-1zM776 341h1v1h-1zM776 346h1v1h-1zM776 351h1v1h-1zM776 356h1v1h-1zM776 361h1v1h-1zM776 366h1v1h-1zM776 371h1v1h-1zM776 376h1v1h-1zM776 381h1v1h-1zM776 386h1v1h-1zM776 391h1v1h-1zM776 396h1v1h-1zM776 401h1v1h-1zM776 406h1v1h-1zM776 411h1v1h-1zM776 416h1v1h-1zM776 421h1v1h-1zM776 426h1v1h-1zM776 431h1v1h-1zM776 436h1v1h-1zM776 441h1v1h-1zM776 446h1v1h-1zM776 451h1v1h-1zM776 456h1v1h-1zM776 461h1v1h-1zM776 466h1v1h-1zM776 471h1v1h-1zM776 476h1v1h-1zM776 481h1v1h-1zM776 486h1v1h-1zM776 491h1v1h-1zM776 496h1v1h-1zM776 501h1v1h-1zM776 506h1v1h-1zM776 511h1v1h-1zM776 516h1v1h-1zM776 521h1v1h-1zM776 526h1v1h-1zM776 531h1v1h-1zM776 536h1v1h-1zM776 541h1v1h-1zM776 546h1v1h-1zM776 551h1v1h-1zM776 556h1v1h-1zM776 561h1v1h-1zM776 566h1v1h-1zM776 571h1v1h-1zM776 576h1v1h-1zM776 581h1v1h-1zM776 586h1v1h-1zM776 591h1v1h-1zM776 596h1v1h-1zM776 601h1v1h-1zM801 6h1v1h-1zM801 11h1v1h-1zM801 16h1v1h-1zM801 21h1v1h-1zM801 26h1v1h-1zM801 31h1v1h-1zM801 36h1v1h-1zM801 41h1v1h-1zM801 46h1v1h-1zM801 51h1v1h-1zM801 56h1v1h-1zM801 61h1v1h-1zM801 66h1v1h-1zM801 71h1v1h-1zM801 76h1v1h-1zM801 81h1v1h-1zM801 86h1v1h-1zM801 91h1v1h-1zM801 96h1v1h-1zM801 101h1v1h-1zM801 106h1v1h-1zM801 111h1v1h-1zM801 116h1v1h-1zM801 121h1v1h-1zM801 126h1v1h-1zM801 131h1v1h-1zM801 136h1v1h-1zM801 141h1v1h-1zM801 146h1v1h-1zM801 151h1v1h-1zM801 156h1v1h-1zM801 161h1v1h-1zM801 166h1v1h-1zM801 171h1v1h-1zM801 176h1v1h-1zM801 181h1v1h-1zM801 186h1v1h-1zM801 191h1v1h-1zM801 196h1v1h-1zM801 201h1v1h-1zM801 206h1v1h-1zM801 211h1v1h-1zM801 216h1v1h-1zM801 221h1v1h-1zM801 226h1v1h-1zM801 231h1v1h-1zM801 236h1v1h-1zM801 241h1v1h-1zM801 246h1v1h-1zM801 251h1v1h-1zM801 256h1v1h-1zM801 261h1v1h-1zM801 266h1v1h-1zM801 271h1v1h-1zM801 276h1v1h-1zM801 281h1v1h-1zM801 286h1v1h-1zM801 291h1v1h-1zM801 296h1v1h-1zM801 301h1v1h-1zM801 306h1v1h-1zM801 311h1v1h-1zM801 316h1v1h-1zM801 321h1v1h-1zM801 326h1v1h-1zM801 331h1v1h-1zM801 336h1v1h-1zM801 341h1v1h-1zM801 346h1v1h-1zM801 351h1v1h-1zM801 356h1v1h-1zM801 361h1v1h-1zM801 366h1v1h-1zM801 371h1v1h-1zM801 376h1v1h-1zM801 381h1v1h-1zM801 386h1v1h-1zM801 391h1v1h-1zM801 396h1v1h-1zM801 401h1v1h-1zM801 406h1v1h-1zM801 411h1v1h-1zM801 416h1v1h-1zM801 421h1v1h-1zM801 426h1v1h-1zM801 431h1v1h-1zM801 436h1v1h-1zM801 441h1v1h-1zM801 446h1v1h-1zM801 451h1v1h-1zM801 456h1v1h-1zM801 461h1v1h-1zM801 466h1v1h-1zM801 471h1v1h-1zM801 476h1v1h-1zM801 481h1v1h-1zM801 486h1v1h-1zM801 491h1v1h-1zM801 496h1v1h-1zM801 501h1v1h-1zM801 506h1v1h-1zM801 511h1v1h-1zM801 516h1v1h-1zM801 521h1v1h-1zM801 526h1v1h-1zM801 531h1v1h-1zM801 536h1v1h-1zM801 541h1v1h-1zM801 546h1v1h-1zM801 551h1v1h-1zM801 556h1v1h-1zM801 561h1v1h-1zM801 566h1v1h-1zM801 571h1v1h-1zM801 576h1v1h-1zM801 581h1v1h-1zM801 586h1v1h-1zM801 591h1v1h-1zM801 596h1v1h-1zM801 601h1v1h-1zM826 6h1v1h-1zM826 11h1v1h-1zM826 16h1v1h-1zM826 21h1v1h-1zM826 26h1v1h-1zM826 31h1v1h-1zM826 36h1v1h-1zM826 41h1v1h-1zM826 46h1v1h-1zM826 51h1v1h-1zM826 56h1v1h-1zM826 61h1v1h-1zM826 66h1v1h-1zM826 71h1v1h-1zM826 76h1v1h-1zM826 81h1v1h-1zM826 86h1v1h-1zM826 91h1v1h-1zM826 96h1v1h-1zM826 101h1v1h-1zM826 106h1v1h-1zM826 111h1v1h-1zM826 116h1v1h-1zM826 121h1v1h-1zM826 126h1v1h-1zM826 131h1v1h-1zM826 136h1v1h-1zM826 141h1v1h-1zM826 146h1v1h-1zM826 151h1v1h-1zM826 156h1v1h-1zM826 161h1v1h-1zM826 166h1v1h-1zM826 171h1v1h-1zM826 176h1v1h-1zM826 181h1v1h-1zM826 186h1v1h-1zM826 191h1v1h-1zM826 196h1v1h-1zM826 201h1v1h-1zM826 206h1v1h-1zM826 211h1v1h-1zM826 216h1v1h-1zM826 221h1v1h-1zM826 226h1v1h-1zM826 231h1v1h-1zM826 236h1v1h-1zM826 241h1v1h-1zM826 246h1v1h-1zM826 251h1v1h-1zM826 256h1v1h-1zM826 261h1v1h-1zM826 266h1v1h-1zM826 271h1v1h-1zM826 276h1v1h-1zM826 281h1v1h-1zM826 286h1v1h-1zM826 291h1v1h-1zM826 296h1v1h-1zM826 301h1v1h-1zM826 306h1v1h-1zM826 311h1v1h-1zM826 316h1v1h-1zM826 321h1v1h-1zM826 326h1v1h-1zM826 331h1v1h-1zM826 336h1v1h-1zM826 341h1v1h-1zM826 346h1v1h-1zM826 351h1v1h-1zM826 356h1v1h-1zM826 361h1v1h-1zM826 366h1v1h-1zM826 371h1v1h-1zM826 376h1v1h-1zM826 381h1v1h-1zM826 386h1v1h-1zM826 391h1v1h-1zM826 396h1v1h-1zM826 401h1v1h-1zM826 406h1v1h-1zM826 411h1v1h-1zM826 416h1v1h-1zM826 421h1v1h-1zM826 426h1v1h-1zM826 431h1v1h-1zM826 436h1v1h-1zM826 441h1v1h-1zM826 446h1v1h-1zM826 451h1v1h-1zM826 456h1v1h-1zM826 461h1v1h-1zM826 466h1v1h-1zM826 471h1v1h-1zM826 476h1v1h-1zM826 481h1v1h-1zM826 486h1v1h-1zM826 491h1v1h-1zM826 496h1v1h-1zM826 501h1v1h-1zM826 506h1v1h-1zM826 511h1v1h-1zM826 516h1v1h-1zM826 521h1v1h-1zM826 526h1v1h-1zM826 531h1v1h-1zM826 536h1v1h-1zM826 541h1v1h-1zM826 546h1v1h-1zM826 551h1v1h-1zM826 556h1v1h-1zM826 561h1v1h-1zM826 566h1v1h-1zM826 571h1v1h-1zM826 576h1v1h-1zM826 581h1v1h-1zM826 586h1v1h-1zM826 591h1v1h-1zM826 596h1v1h-1zM826 601h1v1h-1zM31 26h1v1h-1zM36 26h1v1h-1zM41 26h1v1h-1zM46 26h1v1h-1zM56 26h1v1h-1zM61 26h1v1h-1zM66 26h1v1h-1zM71 26h1v1h-1zM81 26h1v1h-1zM86 26h1v1h-1zM91 26h1v1h-1zM96 26h1v1h-1zM106 26h1v1h-1zM111 26h1v1h-1zM116 26h1v1h-1zM121 26h1v1h-1zM131 26h1v1h-1zM136 26h1v1h-1zM141 26h1v1h-1zM146 26h1v1h-1zM156 26h1v1h-1zM161 26h1v1h-1zM166 26h1v1h-1zM171 26h1v1h-1zM181 26h1v1h-1zM186 26h1v1h-1zM191 26h1v1h-1zM196 26h1v1h-1zM206 26h1v1h-1zM211 26h1v1h-1zM216 26h1v1h-1zM221 26h1v1h-1zM231 26h1v1h-1zM236 26h1v1h-1zM241 26h1v1h-1zM246 26h1v1h-1zM256 26h1v1h-1zM261 26h1v1h-1zM266 26h1v1h-1zM271 26h1v1h-1zM281 26h1v1h-1zM286 26h1v1h-1zM291 26h1v1h-1zM296 26h1v1h-1zM306 26h1v1h-1zM311 26h1v1h-1zM316 26h1v1h-1zM321 26h1v1h-1zM331 26h1v1h-1zM336 26h1v1h-1zM341 26h1v1h-1zM346 26h1v1h-1zM356 26h1v1h-1zM361 26h1v1h-1zM366 26h1v1h-1zM371 26h1v1h-1zM381 26h1v1h-1zM386 26h1v1h-1zM391 26h1v1h-1zM396 26h1v1h-1zM406 26h1v1h-1zM411 26h1v1h-1zM416 26h1v1h-1zM421 26h1v1h-1zM431 26h1v1h-1zM436 26h1v1h-1zM441 26h1v1h-1zM446 26h1v1h-1zM456 26h1v1h-1zM461 26h1v1h-1zM466 26h1v1h-1zM471 26h1v1h-1zM481 26h1v1h-1zM486 26h1v1h-1zM491 26h1v1h-1zM496 26h1v1h-1zM506 26h1v1h-1zM511 26h1v1h-1zM516 26h1v1h-1zM521 26h1v1h-1zM531 26h1v1h-1zM536 26h1v1h-1zM541 26h1v1h-1zM546 26h1v1h-1zM556 26h1v1h-1zM561 26h1v1h-1zM566 26h1v1h-1zM571 26h1v1h-1zM581 26h1v1h-1zM586 26h1v1h-1zM591 26h1v1h-1zM596 26h1v1h-1zM606 26h1v1h-1zM611 26h1v1h-1zM616 26h1v1h-1zM621 26h1v1h-1zM631 26h1v1h-1zM636 26h1v1h-1zM641 26h1v1h-1zM646 26h1v1h-1zM656 26h1v1h-1zM661 26h1v1h-1zM666 26h1v1h-1zM671 26h1v1h-1zM681 26h1v1h-1zM686 26h1v1h-1zM691 26h1v1h-1zM696 26h1v1h-1zM706 26h1v1h-1zM711 26h1v1h-1zM716 26h1v1h-1zM721 26h1v1h-1zM731 26h1v1h-1zM736 26h1v1h-1zM741 26h1v1h-1zM746 26h1v1h-1zM756 26h1v1h-1zM761 26h1v1h-1zM766 26h1v1h-1zM771 26h1v1h-1zM781 26h1v1h-1zM786 26h1v1h-1zM791 26h1v1h-1zM796 26h1v1h-1zM806 26h1v1h-1zM811 26h1v1h-1zM816 26h1v1h-1zM821 26h1v1h-1zM831 26h1v1h-1zM836 26h1v1h-1zM841 26h1v1h-1zM31 51h1v1h-1zM36 51h1v1h-1zM41 51h1v1h-1zM46 51h1v1h-1zM56 51h1v1h-1zM61 51h1v1h-1zM66 51h1v1h-1zM71 51h1v1h-1zM81 51h1v1h-1zM86 51h1v1h-1zM91 51h1v1h-1zM96 51h1v1h-1zM106 51h1v1h-1zM111 51h1v1h-1zM116 51h1v1h-1zM121 51h1v1h-1zM131 51h1v1h-1zM136 51h1v1h-1zM141 51h1v1h-1zM146 51h1v1h-1zM156 51h1v1h-1zM161 51h1v1h-1zM166 51h1v1h-1zM171 51h1v1h-1zM181 51h1v1h-1zM186 51h1v1h-1zM191 51h1v1h-1zM196 51h1v1h-1zM206 51h1v1h-1zM211 51h1v1h-1zM216 51h1v1h-1zM221 51h1v1h-1zM231 51h1v1h-1zM236 51h1v1h-1zM241 51h1v1h-1zM246 51h1v1h-1zM256 51h1v1h-1zM261 51h1v1h-1zM266 51h1v1h-1zM271 51h1v1h-1zM281 51h1v1h-1zM286 51h1v1h-1zM291 51h1v1h-1zM296 51h1v1h-1zM306 51h1v1h-1zM311 51h1v1h-1zM316 51h1v1h-1zM321 51h1v1h-1zM331 51h1v1h-1zM336 51h1v1h-1zM341 51h1v1h-1zM346 51h1v1h-1zM356 51h1v1h-1zM361 51h1v1h-1zM366 51h1v1h-1zM371 51h1v1h-1zM381 51h1v1h-1zM386 51h1v1h-1zM391 51h1v1h-1zM396 51h1v1h-1zM406 51h1v1h-1zM411 51h1v1h-1zM416 51h1v1h-1zM421 51h1v1h-1zM431 51h1v1h-1zM436 51h1v1h-1zM441 51h1v1h-1zM446 51h1v1h-1zM456 51h1v1h-1zM461 51h1v1h-1zM466 51h1v1h-1zM471 51h1v1h-1zM481 51h1v1h-1zM486 51h1v1h-1zM491 51h1v1h-1zM496 51h1v1h-1zM506 51h1v1h-1zM511 51h1v1h-1zM516 51h1v1h-1zM521 51h1v1h-1zM531 51h1v1h-1zM536 51h1v1h-1zM541 51h1v1h-1zM546 51h1v1h-1zM556 51h1v1h-1zM561 51h1v1h-1zM566 51h1v1h-1zM571 51h1v1h-1zM581 51h1v1h-1zM586 51h1v1h-1zM591 51h1v1h-1zM596 51h1v1h-1zM606 51h1v1h-1zM611 51h1v1h-1zM616 51h1v1h-1zM621 51h1v1h-1zM631 51h1v1h-1zM636 51h1v1h-1zM641 51h1v1h-1zM646 51h1v1h-1zM656 51h1v1h-1zM661 51h1v1h-1zM666 51h1v1h-1zM671 51h1v1h-1zM681 51h1v1h-1zM686 51h1v1h-1zM691 51h1v1h-1zM696 51h1v1h-1zM706 51h1v1h-1zM711 51h1v1h-1zM716 51h1v1h-1zM721 51h1v1h-1zM731 51h1v1h-1zM736 51h1v1h-1zM741 51h1v1h-1zM746 51h1v1h-1zM756 51h1v1h-1zM761 51h1v1h-1zM766 51h1v1h-1zM771 51h1v1h-1zM781 51h1v1h-1zM786 51h1v1h-1zM791 51h1v1h-1zM796 51h1v1h-1zM806 51h1v1h-1zM811 51h1v1h-1zM816 51h1v1h-1zM821 51h1v1h-1zM831 51h1v1h-1zM836 51h1v1h-1zM841 51h1v1h-1zM31 76h1v1h-1zM36 76h1v1h-1zM41 76h1v1h-1zM46 76h1v1h-1zM56 76h1v1h-1zM61 76h1v1h-1zM66 76h1v1h-1zM71 76h1v1h-1zM81 76h1v1h-1zM86 76h1v1h-1zM91 76h1v1h-1zM96 76h1v1h-1zM106 76h1v1h-1zM111 76h1v1h-1zM116 76h1v1h-1zM121 76h1v1h-1zM131 76h1v1h-1zM136 76h1v1h-1zM141 76h1v1h-1zM146 76h1v1h-1zM156 76h1v1h-1zM161 76h1v1h-1zM166 76h1v1h-1zM171 76h1v1h-1zM181 76h1v1h-1zM186 76h1v1h-1zM191 76h1v1h-1zM196 76h1v1h-1zM206 76h1v1h-1zM211 76h1v1h-1zM216 76h1v1h-1zM221 76h1v1h-1zM231 76h1v1h-1zM236 76h1v1h-1zM241 76h1v1h-1zM246 76h1v1h-1zM256 76h1v1h-1zM261 76h1v1h-1zM266 76h1v1h-1zM271 76h1v1h-1zM281 76h1v1h-1zM286 76h1v1h-1zM291 76h1v1h-1zM296 76h1v1h-1zM306 76h1v1h-1zM311 76h1v1h-1zM316 76h1v1h-1zM321 76h1v1h-1zM331 76h1v1h-1zM336 76h1v1h-1zM341 76h1v1h-1zM346 76h1v1h-1zM356 76h1v1h-1zM361 76h1v1h-1zM366 76h1v1h-1zM371 76h1v1h-1zM381 76h1v1h-1zM386 76h1v1h-1zM391 76h1v1h-1zM396 76h1v1h-1zM406 76h1v1h-1zM411 76h1v1h-1zM416 76h1v1h-1zM421 76h1v1h-1zM431 76h1v1h-1zM436 76h1v1h-1zM441 76h1v1h-1zM446 76h1v1h-1zM456 76h1v1h-1zM461 76h1v1h-1zM466 76h1v1h-1zM471 76h1v1h-1zM481 76h1v1h-1zM486 76h1v1h-1zM491 76h1v1h-1zM496 76h1v1h-1zM506 76h1v1h-1zM511 76h1v1h-1zM516 76h1v1h-1zM521 76h1v1h-1zM531 76h1v1h-1zM536 76h1v1h-1zM541 76h1v1h-1zM546 76h1v1h-1zM556 76h1v1h-1zM561 76h1v1h-1zM566 76h1v1h-1zM571 76h1v1h-1zM581 76h1v1h-1zM586 76h1v1h-1zM591 76h1v1h-1zM596 76h1v1h-1zM606 76h1v1h-1zM611 76h1v1h-1zM616 76h1v1h-1zM621 76h1v1h-1zM631 76h1v1h-1zM636 76h1v1h-1zM641 76h1v1h-1zM646 76h1v1h-1zM656 76h1v1h-1zM661 76h1v1h-1zM666 76h1v1h-1zM671 76h1v1h-1zM681 76h1v1h-1zM686 76h1v1h-1zM691 76h1v1h-1zM696 76h1v1h-1zM706 76h1v1h-1zM711 76h1v1h-1zM716 76h1v1h-1zM721 76h1v1h-1zM731 76h1v1h-1zM736 76h1v1h-1zM741 76h1v1h-1zM746 76h1v1h-1zM756 76h1v1h-1zM761 76h1v1h-1zM766 76h1v1h-1zM771 76h1v1h-1zM781 76h1v1h-1zM786 76h1v1h-1zM791 76h1v1h-1zM796 76h1v1h-1zM806 76h1v1h-1zM811 76h1v1h-1zM816 76h1v1h-1zM821 76h1v1h-1zM831 76h1v1h-1zM836 76h1v1h-1zM841 76h1v1h-1zM31 101h1v1h-1zM36 101h1v1h-1zM41 101h1v1h-1zM46 101h1v1h-1zM56 101h1v1h-1zM61 101h1v1h-1zM66 101h1v1h-1zM71 101h1v1h-1zM81 101h1v1h-1zM86 101h1v1h-1zM91 101h1v1h-1zM96 101h1v1h-1zM106 101h1v1h-1zM111 101h1v1h-1zM116 101h1v1h-1zM121 101h1v1h-1zM131 101h1v1h-1zM136 101h1v1h-1zM141 101h1v1h-1zM146 101h1v1h-1zM156 101h1v1h-1zM161 101h1v1h-1zM166 101h1v1h-1zM171 101h1v1h-1zM181 101h1v1h-1zM186 101h1v1h-1zM191 101h1v1h-1zM196 101h1v1h-1zM206 101h1v1h-1zM211 101h1v1h-1zM216 101h1v1h-1zM221 101h1v1h-1zM231 101h1v1h-1zM236 101h1v1h-1zM241 101h1v1h-1zM246 101h1v1h-1zM256 101h1v1h-1zM261 101h1v1h-1zM266 101h1v1h-1zM271 101h1v1h-1zM281 101h1v1h-1zM286 101h1v1h-1zM291 101h1v1h-1zM296 101h1v1h-1zM306 101h1v1h-1zM311 101h1v1h-1zM316 101h1v1h-1zM321 101h1v1h-1zM331 101h1v1h-1zM336 101h1v1h-1zM341 101h1v1h-1zM346 101h1v1h-1zM356 101h1v1h-1zM361 101h1v1h-1zM366 101h1v1h-1zM371 101h1v1h-1zM381 101h1v1h-1zM386 101h1v1h-1zM391 101h1v1h-1zM396 101h1v1h-1zM406 101h1v1h-1zM411 101h1v1h-1zM416 101h1v1h-1zM421 101h1v1h-1zM431 101h1v1h-1zM436 101h1v1h-1zM441 101h1v1h-1zM446 101h1v1h-1zM456 101h1v1h-1zM461 101h1v1h-1zM466 101h1v1h-1zM471 101h1v1h-1zM481 101h1v1h-1zM486 101h1v1h-1zM491 101h1v1h-1zM496 101h1v1h-1zM506 101h1v1h-1zM511 101h1v1h-1zM516 101h1v1h-1zM521 101h1v1h-1zM531 101h1v1h-1zM536 101h1v1h-1zM541 101h1v1h-1zM546 101h1v1h-1zM556 101h1v1h-1zM561 101h1v1h-1zM566 101h1v1h-1zM571 101h1v1h-1zM581 101h1v1h-1zM586 101h1v1h-1zM591 101h1v1h-1zM596 101h1v1h-1zM606 101h1v1h-1zM611 101h1v1h-1zM616 101h1v1h-1zM621 101h1v1h-1zM631 101h1v1h-1zM636 101h1v1h-1zM641 101h1v1h-1zM646 101h1v1h-1zM656 101h1v1h-1zM661 101h1v1h-1zM666 101h1v1h-1zM671 101h1v1h-1zM681 101h1v1h-1zM686 101h1v1h-1zM691 101h1v1h-1zM696 101h1v1h-1zM706 101h1v1h-1zM711 101h1v1h-1zM716 101h1v1h-1zM721 101h1v1h-1zM731 101h1v1h-1zM736 101h1v1h-1zM741 101h1v1h-1zM746 101h1v1h-1zM756 101h1v1h-1zM761 101h1v1h-1zM766 101h1v1h-1zM771 101h1v1h-1zM781 101h1v1h-1zM786 101h1v1h-1zM791 101h1v1h-1zM796 101h1v1h-1zM806 101h1v1h-1zM811 101h1v1h-1zM816 101h1v1h-1zM821 101h1v1h-1zM831 101h1v1h-1zM836 101h1v1h-1zM841 101h1v1h-1zM31 126h1v1h-1zM36 126h1v1h-1zM41 126h1v1h-1zM46 126h1v1h-1zM56 126h1v1h-1zM61 126h1v1h-1zM66 126h1v1h-1zM71 126h1v1h-1zM81 126h1v1h-1zM86 126h1v1h-1zM91 126h1v1h-1zM96 126h1v1h-1zM106 126h1v1h-1zM111 126h1v1h-1zM116 126h1v1h-1zM121 126h1v1h-1zM131 126h1v1h-1zM136 126h1v1h-1zM141 126h1v1h-1zM146 126h1v1h-1zM156 126h1v1h-1zM161 126h1v1h-1zM166 126h1v1h-1zM171 126h1v1h-1zM181 126h1v1h-1zM186 126h1v1h-1zM191 126h1v1h-1zM196 126h1v1h-1zM206 126h1v1h-1zM211 126h1v1h-1zM216 126h1v1h-1zM221 126h1v1h-1zM231 126h1v1h-1zM236 126h1v1h-1zM241 126h1v1h-1zM246 126h1v1h-1zM256 126h1v1h-1zM261 126h1v1h-1zM266 126h1v1h-1zM271 126h1v1h-1zM281 126h1v1h-1zM286 126h1v1h-1zM291 126h1v1h-1zM296 126h1v1h-1zM306 126h1v1h-1zM311 126h1v1h-1zM316 126h1v1h-1zM321 126h1v1h-1zM331 126h1v1h-1zM336 126h1v1h-1zM341 126h1v1h-1zM346 126h1v1h-1zM356 126h1v1h-1zM361 126h1v1h-1zM366 126h1v1h-1zM371 126h1v1h-1zM381 126h1v1h-1zM386 126h1v1h-1zM391 126h1v1h-1zM396 126h1v1h-1zM406 126h1v1h-1zM411 126h1v1h-1zM416 126h1v1h-1zM421 126h1v1h-1zM431 126h1v1h-1zM436 126h1v1h-1zM441 126h1v1h-1zM446 126h1v1h-1zM456 126h1v1h-1zM461 126h1v1h-1zM466 126h1v1h-1zM471 126h1v1h-1zM481 126h1v1h-1zM486 126h1v1h-1zM491 126h1v1h-1zM496 126h1v1h-1zM506 126h1v1h-1zM511 126h1v1h-1zM516 126h1v1h-1zM521 126h1v1h-1zM531 126h1v1h-1zM536 126h1v1h-1zM541 126h1v1h-1zM546 126h1v1h-1zM556 126h1v1h-1zM561 126h1v1h-1zM566 126h1v1h-1zM571 126h1v1h-1zM581 126h1v1h-1zM586 126h1v1h-1zM591 126h1v1h-1zM596 126h1v1h-1zM606 126h1v1h-1zM611 126h1v1h-1zM616 126h1v1h-1zM621 126h1v1h-1zM631 126h1v1h-1zM636 126h1v1h-1zM641 126h1v1h-1zM646 126h1v1h-1zM656 126h1v1h-1zM661 126h1v1h-1zM666 126h1v1h-1zM671 126h1v1h-1zM681 126h1v1h-1zM686 126h1v1h-1zM691 126h1v1h-1zM696 126h1v1h-1zM706 126h1v1h-1zM711 126h1v1h-1zM716 126h1v1h-1zM721 126h1v1h-1zM731 126h1v1h-1zM736 126h1v1h-1zM741 126h1v1h-1zM746 126h1v1h-1zM756 126h1v1h-1zM761 126h1v1h-1zM766 126h1v1h-1zM771 126h1v1h-1zM781 126h1v1h-1zM786 126h1v1h-1zM791 126h1v1h-1zM796 126h1v1h-1zM806 126h1v1h-1zM811 126h1v1h-1zM816 126h1v1h-1zM821 126h1v1h-1zM831 126h1v1h-1zM836 126h1v1h-1zM841 126h1v1h-1zM31 151h1v1h-1zM36 151h1v1h-1zM41 151h1v1h-1zM46 151h1v1h-1zM56 151h1v1h-1zM61 151h1v1h-1zM66 151h1v1h-1zM71 151h1v1h-1zM81 151h1v1h-1zM86 151h1v1h-1zM91 151h1v1h-1zM96 151h1v1h-1zM106 151h1v1h-1zM111 151h1v1h-1zM116 151h1v1h-1zM121 151h1v1h-1zM131 151h1v1h-1zM136 151h1v1h-1zM141 151h1v1h-1zM146 151h1v1h-1zM156 151h1v1h-1zM161 151h1v1h-1zM166 151h1v1h-1zM171 151h1v1h-1zM181 151h1v1h-1zM186 151h1v1h-1zM191 151h1v1h-1zM196 151h1v1h-1zM206 151h1v1h-1zM211 151h1v1h-1zM216 151h1v1h-1zM221 151h1v1h-1zM231 151h1v1h-1zM236 151h1v1h-1zM241 151h1v1h-1zM246 151h1v1h-1zM256 151h1v1h-1zM261 151h1v1h-1zM266 151h1v1h-1zM271 151h1v1h-1zM281 151h1v1h-1zM286 151h1v1h-1zM291 151h1v1h-1zM296 151h1v1h-1zM306 151h1v1h-1zM311 151h1v1h-1zM316 151h1v1h-1zM321 151h1v1h-1zM331 151h1v1h-1zM336 151h1v1h-1zM341 151h1v1h-1zM346 151h1v1h-1zM356 151h1v1h-1zM361 151h1v1h-1zM366 151h1v1h-1zM371 151h1v1h-1zM381 151h1v1h-1zM386 151h1v1h-1zM391 151h1v1h-1zM396 151h1v1h-1zM406 151h1v1h-1zM411 151h1v1h-1zM416 151h1v1h-1zM421 151h1v1h-1zM431 151h1v1h-1zM436 151h1v1h-1zM441 151h1v1h-1zM446 151h1v1h-1zM456 151h1v1h-1zM461 151h1v1h-1zM466 151h1v1h-1zM471 151h1v1h-1zM481 151h1v1h-1zM486 151h1v1h-1zM491 151h1v1h-1zM496 151h1v1h-1zM506 151h1v1h-1zM511 151h1v1h-1zM516 151h1v1h-1zM521 151h1v1h-1zM531 151h1v1h-1zM536 151h1v1h-1zM541 151h1v1h-1zM546 151h1v1h-1zM556 151h1v1h-1zM561 151h1v1h-1zM566 151h1v1h-1zM571 151h1v1h-1zM581 151h1v1h-1zM586 151h1v1h-1zM591 151h1v1h-1zM596 151h1v1h-1zM606 151h1v1h-1zM611 151h1v1h-1zM616 151h1v1h-1zM621 151h1v1h-1zM631 151h1v1h-1zM636 151h1v1h-1zM641 151h1v1h-1zM646 151h1v1h-1zM656 151h1v1h-1zM661 151h1v1h-1zM666 151h1v1h-1zM671 151h1v1h-1zM681 151h1v1h-1zM686 151h1v1h-1zM691 151h1v1h-1zM696 151h1v1h-1zM706 151h1v1h-1zM711 151h1v1h-1zM716 151h1v1h-1zM721 151h1v1h-1zM731 151h1v1h-1zM736 151h1v1h-1zM741 151h1v1h-1zM746 151h1v1h-1zM756 151h1v1h-1zM761 151h1v1h-1zM766 151h1v1h-1zM771 151h1v1h-1zM781 151h1v1h-1zM786 151h1v1h-1zM791 151h1v1h-1zM796 151h1v1h-1zM806 151h1v1h-1zM811 151h1v1h-1zM816 151h1v1h-1zM821 151h1v1h-1zM831 151h1v1h-1zM836 151h1v1h-1zM841 151h1v1h-1zM31 176h1v1h-1zM36 176h1v1h-1zM41 176h1v1h-1zM46 176h1v1h-1zM56 176h1v1h-1zM61 176h1v1h-1zM66 176h1v1h-1zM71 176h1v1h-1zM81 176h1v1h-1zM86 176h1v1h-1zM91 176h1v1h-1zM96 176h1v1h-1zM106 176h1v1h-1zM111 176h1v1h-1zM116 176h1v1h-1zM121 176h1v1h-1zM131 176h1v1h-1zM136 176h1v1h-1zM141 176h1v1h-1zM146 176h1v1h-1zM156 176h1v1h-1zM161 176h1v1h-1zM166 176h1v1h-1zM171 176h1v1h-1zM181 176h1v1h-1zM186 176h1v1h-1zM191 176h1v1h-1zM196 176h1v1h-1zM206 176h1v1h-1zM211 176h1v1h-1zM216 176h1v1h-1zM221 176h1v1h-1zM231 176h1v1h-1zM236 176h1v1h-1zM241 176h1v1h-1zM246 176h1v1h-1zM256 176h1v1h-1zM261 176h1v1h-1zM266 176h1v1h-1zM271 176h1v1h-1zM281 176h1v1h-1zM286 176h1v1h-1zM291 176h1v1h-1zM296 176h1v1h-1zM306 176h1v1h-1zM311 176h1v1h-1zM316 176h1v1h-1zM321 176h1v1h-1zM331 176h1v1h-1zM336 176h1v1h-1zM341 176h1v1h-1zM346 176h1v1h-1zM356 176h1v1h-1zM361 176h1v1h-1zM366 176h1v1h-1zM371 176h1v1h-1zM381 176h1v1h-1zM386 176h1v1h-1zM391 176h1v1h-1zM396 176h1v1h-1zM406 176h1v1h-1zM411 176h1v1h-1zM416 176h1v1h-1zM421 176h1v1h-1zM431 176h1v1h-1zM436 176h1v1h-1zM441 176h1v1h-1zM446 176h1v1h-1zM456 176h1v1h-1zM461 176h1v1h-1zM466 176h1v1h-1zM471 176h1v1h-1zM481 176h1v1h-1zM486 176h1v1h-1zM491 176h1v1h-1zM496 176h1v1h-1zM506 176h1v1h-1zM511 176h1v1h-1zM516 176h1v1h-1zM521 176h1v1h-1zM531 176h1v1h-1zM536 176h1v1h-1zM541 176h1v1h-1zM546 176h1v1h-1zM556 176h1v1h-1zM561 176h1v1h-1zM566 176h1v1h-1zM571 176h1v1h-1zM581 176h1v1h-1zM586 176h1v1h-1zM591 176h1v1h-1zM596 176h1v1h-1zM606 176h1v1h-1zM611 176h1v1h-1zM616 176h1v1h-1zM621 176h1v1h-1zM631 176h1v1h-1zM636 176h1v1h-1zM641 176h1v1h-1zM646 176h1v1h-1zM656 176h1v1h-1zM661 176h1v1h-1zM666 176h1v1h-1zM671 176h1v1h-1zM681 176h1v1h-1zM686 176h1v1h-1zM691 176h1v1h-1zM696 176h1v1h-1zM706 176h1v1h-1zM711 176h1v1h-1zM716 176h1v1h-1zM721 176h1v1h-1zM731 176h1v1h-1zM736 176h1v1h-1zM741 176h1v1h-1zM746 176h1v1h-1zM756 176h1v1h-1zM761 176h1v1h-1zM766 176h1v1h-1zM771 176h1v1h-1zM781 176h1v1h-1zM786 176h1v1h-1zM791 176h1v1h-1zM796 176h1v1h-1zM806 176h1v1h-1zM811 176h1v1h-1zM816 176h1v1h-1zM821 176h1v1h-1zM831 176h1v1h-1zM836 176h1v1h-1zM841 176h1v1h-1zM31 201h1v1h-1zM36 201h1v1h-1zM41 201h1v1h-1zM46 201h1v1h-1zM56 201h1v1h-1zM61 201h1v1h-1zM66 201h1v1h-1zM71 201h1v1h-1zM81 201h1v1h-1zM86 201h1v1h-1zM91 201h1v1h-1zM96 201h1v1h-1zM106 201h1v1h-1zM111 201h1v1h-1zM116 201h1v1h-1zM121 201h1v1h-1zM131 201h1v1h-1zM136 201h1v1h-1zM141 201h1v1h-1zM146 201h1v1h-1zM156 201h1v1h-1zM161 201h1v1h-1zM166 201h1v1h-1zM171 201h1v1h-1zM181 201h1v1h-1zM186 201h1v1h-1zM191 201h1v1h-1zM196 201h1v1h-1zM206 201h1v1h-1zM211 201h1v1h-1zM216 201h1v1h-1zM221 201h1v1h-1zM231 201h1v1h-1zM236 201h1v1h-1zM241 201h1v1h-1zM246 201h1v1h-1zM256 201h1v1h-1zM261 201h1v1h-1zM266 201h1v1h-1zM271 201h1v1h-1zM281 201h1v1h-1zM286 201h1v1h-1zM291 201h1v1h-1zM296 201h1v1h-1zM306 201h1v1h-1zM311 201h1v1h-1zM316 201h1v1h-1zM321 201h1v1h-1zM331 201h1v1h-1zM336 201h1v1h-1zM341 201h1v1h-1zM346 201h1v1h-1zM356 201h1v1h-1zM361 201h1v1h-1zM366 201h1v1h-1zM371 201h1v1h-1zM381 201h1v1h-1zM386 201h1v1h-1zM391 201h1v1h-1zM396 201h1v1h-1zM406 201h1v1h-1zM411 201h1v1h-1zM416 201h1v1h-1zM421 201h1v1h-1zM431 201h1v1h-1zM436 201h1v1h-1zM441 201h1v1h-1zM446 201h1v1h-1zM456 201h1v1h-1zM461 201h1v1h-1zM466 201h1v1h-1zM471 201h1v1h-1zM481 201h1v1h-1zM486 201h1v1h-1zM491 201h1v1h-1zM496 201h1v1h-1zM506 201h1v1h-1zM511 201h1v1h-1zM516 201h1v1h-1zM521 201h1v1h-1zM531 201h1v1h-1zM536 201h1v1h-1zM541 201h1v1h-1zM546 201h1v1h-1zM556 201h1v1h-1zM561 201h1v1h-1zM566 201h1v1h-1zM571 201h1v1h-1zM581 201h1v1h-1zM586 201h1v1h-1zM591 201h1v1h-1zM596 201h1v1h-1zM606 201h1v1h-1zM611 201h1v1h-1zM616 201h1v1h-1zM621 201h1v1h-1zM631 201h1v1h-1zM636 201h1v1h-1zM641 201h1v1h-1zM646 201h1v1h-1zM656 201h1v1h-1zM661 201h1v1h-1zM666 201h1v1h-1zM671 201h1v1h-1zM681 201h1v1h-1zM686 201h1v1h-1zM691 201h1v1h-1zM696 201h1v1h-1zM706 201h1v1h-1zM711 201h1v1h-1zM716 201h1v1h-1zM721 201h1v1h-1zM731 201h1v1h-1zM736 201h1v1h-1zM741 201h1v1h-1zM746 201h1v1h-1zM756 201h1v1h-1zM761 201h1v1h-1zM766 201h1v1h-1zM771 201h1v1h-1zM781 201h1v1h-1zM786 201h1v1h-1zM791 201h1v1h-1zM796 201h1v1h-1zM806 201h1v1h-1zM811 201h1v1h-1zM816 201h1v1h-1zM821 201h1v1h-1zM831 201h1v1h-1zM836 201h1v1h-1zM841 201h1v1h-1zM31 226h1v1h-1zM36 226h1v1h-1zM41 226h1v1h-1zM46 226h1v1h-1zM56 226h1v1h-1zM61 226h1v1h-1zM66 226h1v1h-1zM71 226h1v1h-1zM81 226h1v1h-1zM86 226h1v1h-1zM91 226h1v1h-1zM96 226h1v1h-1zM106 226h1v1h-1zM111 226h1v1h-1zM116 226h1v1h-1zM121 226h1v1h-1zM131 226h1v1h-1zM136 226h1v1h-1zM141 226h1v1h-1zM146 226h1v1h-1zM156 226h1v1h-1zM161 226h1v1h-1zM166 226h1v1h-1zM171 226h1v1h-1zM181 226h1v1h-1zM186 226h1v1h-1zM191 226h1v1h-1zM196 226h1v1h-1zM206 226h1v1h-1zM211 226h1v1h-1zM216 226h1v1h-1zM221 226h1v1h-1zM231 226h1v1h-1zM236 226h1v1h-1zM241 226h1v1h-1zM246 226h1v1h-1zM256 226h1v1h-1zM261 226h1v1h-1zM266 226h1v1h-1zM271 226h1v1h-1zM281 226h1v1h-1zM286 226h1v1h-1zM291 226h1v1h-1zM296 226h1v1h-1zM306 226h1v1h-1zM311 226h1v1h-1zM316 226h1v1h-1zM321 226h1v1h-1zM331 226h1v1h-1zM336 226h1v1h-1zM341 226h1v1h-1zM346 226h1v1h-1zM356 226h1v1h-1zM361 226h1v1h-1zM366 226h1v1h-1zM371 226h1v1h-1zM381 226h1v1h-1zM386 226h1v1h-1zM391 226h1v1h-1zM396 226h1v1h-1zM406 226h1v1h-1zM411 226h1v1h-1zM416 226h1v1h-1zM421 226h1v1h-1zM431 226h1v1h-1zM436 226h1v1h-1zM441 226h1v1h-1zM446 226h1v1h-1zM456 226h1v1h-1zM461 226h1v1h-1zM466 226h1v1h-1zM471 226h1v1h-1zM481 226h1v1h-1zM486 226h1v1h-1zM491 226h1v1h-1zM496 226h1v1h-1zM506 226h1v1h-1zM511 226h1v1h-1zM516 226h1v1h-1zM521 226h1v1h-1zM531 226h1v1h-1zM536 226h1v1h-1zM541 226h1v1h-1zM546 226h1v1h-1zM556 226h1v1h-1zM561 226h1v1h-1zM566 226h1v1h-1zM571 226h1v1h-1zM581 226h1v1h-1zM586 226h1v1h-1zM591 226h1v1h-1zM596 226h1v1h-1zM606 226h1v1h-1zM611 226h1v1h-1zM616 226h1v1h-1zM621 226h1v1h-1zM631 226h1v1h-1zM636 226h1v1h-1zM641 226h1v1h-1zM646 226h1v1h-1zM656 226h1v1h-1zM661 226h1v1h-1zM666 226h1v1h-1zM671 226h1v1h-1zM681 226h1v1h-1zM686 226h1v1h-1zM691 226h1v1h-1zM696 226h1v1h-1zM706 226h1v1h-1zM711 226h1v1h-1zM716 226h1v1h-1zM721 226h1v1h-1zM731 226h1v1h-1zM736 226h1v1h-1zM741 226h1v1h-1zM746 226h1v1h-1zM756 226h1v1h-1zM761 226h1v1h-1zM766 226h1v1h-1zM771 226h1v1h-1zM781 226h1v1h-1zM786 226h1v1h-1zM791 226h1v1h-1zM796 226h1v1h-1zM806 226h1v1h-1zM811 226h1v1h-1zM816 226h1v1h-1zM821 226h1v1h-1zM831 226h1v1h-1zM836 226h1v1h-1zM841 226h1v1h-1zM31 251h1v1h-1zM36 251h1v1h-1zM41 251h1v1h-1zM46 251h1v1h-1zM56 251h1v1h-1zM61 251h1v1h-1zM66 251h1v1h-1zM71 251h1v1h-1zM81 251h1v1h-1zM86 251h1v1h-1zM91 251h1v1h-1zM96 251h1v1h-1zM106 251h1v1h-1zM111 251h1v1h-1zM116 251h1v1h-1zM121 251h1v1h-1zM131 251h1v1h-1zM136 251h1v1h-1zM141 251h1v1h-1zM146 251h1v1h-1zM156 251h1v1h-1zM161 251h1v1h-1zM166 251h1v1h-1zM171 251h1v1h-1zM181 251h1v1h-1zM186 251h1v1h-1zM191 251h1v1h-1zM196 251h1v1h-1zM206 251h1v1h-1zM211 251h1v1h-1zM216 251h1v1h-1zM221 251h1v1h-1zM231 251h1v1h-1zM236 251h1v1h-1zM241 251h1v1h-1zM246 251h1v1h-1zM256 251h1v1h-1zM261 251h1v1h-1zM266 251h1v1h-1zM271 251h1v1h-1zM281 251h1v1h-1zM286 251h1v1h-1zM291 251h1v1h-1zM296 251h1v1h-1zM306 251h1v1h-1zM311 251h1v1h-1zM316 251h1v1h-1zM321 251h1v1h-1zM331 251h1v1h-1zM336 251h1v1h-1zM341 251h1v1h-1zM346 251h1v1h-1zM356 251h1v1h-1zM361 251h1v1h-1zM366 251h1v1h-1zM371 251h1v1h-1zM381 251h1v1h-1zM386 251h1v1h-1zM391 251h1v1h-1zM396 251h1v1h-1zM406 251h1v1h-1zM411 251h1v1h-1zM416 251h1v1h-1zM421 251h1v1h-1zM431 251h1v1h-1zM436 251h1v1h-1zM441 251h1v1h-1zM446 251h1v1h-1zM456 251h1v1h-1zM461 251h1v1h-1zM466 251h1v1h-1zM471 251h1v1h-1zM481 251h1v1h-1zM486 251h1v1h-1zM491 251h1v1h-1zM496 251h1v1h-1zM506 251h1v1h-1zM511 251h1v1h-1zM516 251h1v1h-1zM521 251h1v1h-1zM531 251h1v1h-1zM536 251h1v1h-1zM541 251h1v1h-1zM546 251h1v1h-1zM556 251h1v1h-1zM561 251h1v1h-1zM566 251h1v1h-1zM571 251h1v1h-1zM581 251h1v1h-1zM586 251h1v1h-1zM591 251h1v1h-1zM596 251h1v1h-1zM606 251h1v1h-1zM611 251h1v1h-1zM616 251h1v1h-1zM621 251h1v1h-1zM631 251h1v1h-1zM636 251h1v1h-1zM641 251h1v1h-1zM646 251h1v1h-1zM656 251h1v1h-1zM661 251h1v1h-1zM666 251h1v1h-1zM671 251h1v1h-1zM681 251h1v1h-1zM686 251h1v1h-1zM691 251h1v1h-1zM696 251h1v1h-1zM706 251h1v1h-1zM711 251h1v1h-1zM716 251h1v1h-1zM721 251h1v1h-1zM731 251h1v1h-1zM736 251h1v1h-1zM741 251h1v1h-1zM746 251h1v1h-1zM756 251h1v1h-1zM761 251h1v1h-1zM766 251h1v1h-1zM771 251h1v1h-1zM781 251h1v1h-1zM786 251h1v1h-1zM791 251h1v1h-1zM796 251h1v1h-1zM806 251h1v1h-1zM811 251h1v1h-1zM816 251h1v1h-1zM821 251h1v1h-1zM831 251h1v1h-1zM836 251h1v1h-1zM841 251h1v1h-1zM31 276h1v1h-1zM36 276h1v1h-1zM41 276h1v1h-1zM46 276h1v1h-1zM56 276h1v1h-1zM61 276h1v1h-1zM66 276h1v1h-1zM71 276h1v1h-1zM81 276h1v1h-1zM86 276h1v1h-1zM91 276h1v1h-1zM96 276h1v1h-1zM106 276h1v1h-1zM111 276h1v1h-1zM116 276h1v1h-1zM121 276h1v1h-1zM131 276h1v1h-1zM136 276h1v1h-1zM141 276h1v1h-1zM146 276h1v1h-1zM156 276h1v1h-1zM161 276h1v1h-1zM166 276h1v1h-1zM171 276h1v1h-1zM181 276h1v1h-1zM186 276h1v1h-1zM191 276h1v1h-1zM196 276h1v1h-1zM206 276h1v1h-1zM211 276h1v1h-1zM216 276h1v1h-1zM221 276h1v1h-1zM231 276h1v1h-1zM236 276h1v1h-1zM241 276h1v1h-1zM246 276h1v1h-1zM256 276h1v1h-1zM261 276h1v1h-1zM266 276h1v1h-1zM271 276h1v1h-1zM281 276h1v1h-1zM286 276h1v1h-1zM291 276h1v1h-1zM296 276h1v1h-1zM306 276h1v1h-1zM311 276h1v1h-1zM316 276h1v1h-1zM321 276h1v1h-1zM331 276h1v1h-1zM336 276h1v1h-1zM341 276h1v1h-1zM346 276h1v1h-1zM356 276h1v1h-1zM361 276h1v1h-1zM366 276h1v1h-1zM371 276h1v1h-1zM381 276h1v1h-1zM386 276h1v1h-1zM391 276h1v1h-1zM396 276h1v1h-1zM406 276h1v1h-1zM411 276h1v1h-1zM416 276h1v1h-1zM421 276h1v1h-1zM431 276h1v1h-1zM436 276h1v1h-1zM441 276h1v1h-1zM446 276h1v1h-1zM456 276h1v1h-1zM461 276h1v1h-1zM466 276h1v1h-1zM471 276h1v1h-1zM481 276h1v1h-1zM486 276h1v1h-1zM491 276h1v1h-1zM496 276h1v1h-1zM506 276h1v1h-1zM511 276h1v1h-1zM516 276h1v1h-1zM521 276h1v1h-1zM531 276h1v1h-1zM536 276h1v1h-1zM541 276h1v1h-1zM546 276h1v1h-1zM556 276h1v1h-1zM561 276h1v1h-1zM566 276h1v1h-1zM571 276h1v1h-1zM581 276h1v1h-1zM586 276h1v1h-1zM591 276h1v1h-1zM596 276h1v1h-1zM606 276h1v1h-1zM611 276h1v1h-1zM616 276h1v1h-1zM621 276h1v1h-1zM631 276h1v1h-1zM636 276h1v1h-1zM641 276h1v1h-1zM646 276h1v1h-1zM656 276h1v1h-1zM661 276h1v1h-1zM666 276h1v1h-1zM671 276h1v1h-1zM681 276h1v1h-1zM686 276h1v1h-1zM691 276h1v1h-1zM696 276h1v1h-1zM706 276h1v1h-1zM711 276h1v1h-1zM716 276h1v1h-1zM721 276h1v1h-1zM731 276h1v1h-1zM736 276h1v1h-1zM741 276h1v1h-1zM746 276h1v1h-1zM756 276h1v1h-1zM761 276h1v1h-1zM766 276h1v1h-1zM771 276h1v1h-1zM781 276h1v1h-1zM786 276h1v1h-1zM791 276h1v1h-1zM796 276h1v1h-1zM806 276h1v1h-1zM811 276h1v1h-1zM816 276h1v1h-1zM821 276h1v1h-1zM831 276h1v1h-1zM836 276h1v1h-1zM841 276h1v1h-1zM31 301h1v1h-1zM36 301h1v1h-1zM41 301h1v1h-1zM46 301h1v1h-1zM56 301h1v1h-1zM61 301h1v1h-1zM66 301h1v1h-1zM71 301h1v1h-1zM81 301h1v1h-1zM86 301h1v1h-1zM91 301h1v1h-1zM96 301h1v1h-1zM106 301h1v1h-1zM111 301h1v1h-1zM116 301h1v1h-1zM121 301h1v1h-1zM131 301h1v1h-1zM136 301h1v1h-1zM141 301h1v1h-1zM146 301h1v1h-1zM156 301h1v1h-1zM161 301h1v1h-1zM166 301h1v1h-1zM171 301h1v1h-1zM181 301h1v1h-1zM186 301h1v1h-1zM191 301h1v1h-1zM196 301h1v1h-1zM206 301h1v1h-1zM211 301h1v1h-1zM216 301h1v1h-1zM221 301h1v1h-1zM231 301h1v1h-1zM236 301h1v1h-1zM241 301h1v1h-1zM246 301h1v1h-1zM256 301h1v1h-1zM261 301h1v1h-1zM266 301h1v1h-1zM271 301h1v1h-1zM281 301h1v1h-1zM286 301h1v1h-1zM291 301h1v1h-1zM296 301h1v1h-1zM306 301h1v1h-1zM311 301h1v1h-1zM316 301h1v1h-1zM321 301h1v1h-1zM331 301h1v1h-1zM336 301h1v1h-1zM341 301h1v1h-1zM346 301h1v1h-1zM356 301h1v1h-1zM361 301h1v1h-1zM366 301h1v1h-1zM371 301h1v1h-1zM381 301h1v1h-1zM386 301h1v1h-1zM391 301h1v1h-1zM396 301h1v1h-1zM406 301h1v1h-1zM411 301h1v1h-1zM416 301h1v1h-1zM421 301h1v1h-1zM431 301h1v1h-1zM436 301h1v1h-1zM441 301h1v1h-1zM446 301h1v1h-1zM456 301h1v1h-1zM461 301h1v1h-1zM466 301h1v1h-1zM471 301h1v1h-1zM481 301h1v1h-1zM486 301h1v1h-1zM491 301h1v1h-1zM496 301h1v1h-1zM506 301h1v1h-1zM511 301h1v1h-1zM516 301h1v1h-1zM521 301h1v1h-1zM531 301h1v1h-1zM536 301h1v1h-1zM541 301h1v1h-1zM546 301h1v1h-1zM556 301h1v1h-1zM561 301h1v1h-1zM566 301h1v1h-1zM571 301h1v1h-1zM581 301h1v1h-1zM586 301h1v1h-1zM591 301h1v1h-1zM596 301h1v1h-1zM606 301h1v1h-1zM611 301h1v1h-1zM616 301h1v1h-1zM621 301h1v1h-1zM631 301h1v1h-1zM636 301h1v1h-1zM641 301h1v1h-1zM646 301h1v1h-1zM656 301h1v1h-1zM661 301h1v1h-1zM666 301h1v1h-1zM671 301h1v1h-1zM681 301h1v1h-1zM686 301h1v1h-1zM691 301h1v1h-1zM696 301h1v1h-1zM706 301h1v1h-1zM711 301h1v1h-1zM716 301h1v1h-1zM721 301h1v1h-1zM731 301h1v1h-1zM736 301h1v1h-1zM741 301h1v1h-1zM746 301h1v1h-1zM756 301h1v1h-1zM761 301h1v1h-1zM766 301h1v1h-1zM771 301h1v1h-1zM781 301h1v1h-1zM786 301h1v1h-1zM791 301h1v1h-1zM796 301h1v1h-1zM806 301h1v1h-1zM811 301h1v1h-1zM816 301h1v1h-1zM821 301h1v1h-1zM831 301h1v1h-1zM836 301h1v1h-1zM841 301h1v1h-1zM31 326h1v1h-1zM36 326h1v1h-1zM41 326h1v1h-1zM46 326h1v1h-1zM56 326h1v1h-1zM61 326h1v1h-1zM66 326h1v1h-1zM71 326h1v1h-1zM81 326h1v1h-1zM86 326h1v1h-1zM91 326h1v1h-1zM96 326h1v1h-1zM106 326h1v1h-1zM111 326h1v1h-1zM116 326h1v1h-1zM121 326h1v1h-1zM131 326h1v1h-1zM136 326h1v1h-1zM141 326h1v1h-1zM146 326h1v1h-1zM156 326h1v1h-1zM161 326h1v1h-1zM166 326h1v1h-1zM171 326h1v1h-1zM181 326h1v1h-1zM186 326h1v1h-1zM191 326h1v1h-1zM196 326h1v1h-1zM206 326h1v1h-1zM211 326h1v1h-1zM216 326h1v1h-1zM221 326h1v1h-1zM231 326h1v1h-1zM236 326h1v1h-1zM241 326h1v1h-1zM246 326h1v1h-1zM256 326h1v1h-1zM261 326h1v1h-1zM266 326h1v1h-1zM271 326h1v1h-1zM281 326h1v1h-1zM286 326h1v1h-1zM291 326h1v1h-1zM296 326h1v1h-1zM306 326h1v1h-1zM311 326h1v1h-1zM316 326h1v1h-1zM321 326h1v1h-1zM331 326h1v1h-1zM336 326h1v1h-1zM341 326h1v1h-1zM346 326h1v1h-1zM356 326h1v1h-1zM361 326h1v1h-1zM366 326h1v1h-1zM371 326h1v1h-1zM381 326h1v1h-1zM386 326h1v1h-1zM391 326h1v1h-1zM396 326h1v1h-1zM406 326h1v1h-1zM411 326h1v1h-1zM416 326h1v1h-1zM421 326h1v1h-1zM431 326h1v1h-1zM436 326h1v1h-1zM441 326h1v1h-1zM446 326h1v1h-1zM456 326h1v1h-1zM461 326h1v1h-1zM466 326h1v1h-1zM471 326h1v1h-1zM481 326h1v1h-1zM486 326h1v1h-1zM491 326h1v1h-1zM496 326h1v1h-1zM506 326h1v1h-1zM511 326h1v1h-1zM516 326h1v1h-1zM521 326h1v1h-1zM531 326h1v1h-1zM536 326h1v1h-1zM541 326h1v1h-1zM546 326h1v1h-1zM556 326h1v1h-1zM561 326h1v1h-1zM566 326h1v1h-1zM571 326h1v1h-1zM581 326h1v1h-1zM586 326h1v1h-1zM591 326h1v1h-1zM596 326h1v1h-1zM606 326h1v1h-1zM611 326h1v1h-1zM616 326h1v1h-1zM621 326h1v1h-1zM631 326h1v1h-1zM636 326h1v1h-1zM641 326h1v1h-1zM646 326h1v1h-1zM656 326h1v1h-1zM661 326h1v1h-1zM666 326h1v1h-1zM671 326h1v1h-1zM681 326h1v1h-1zM686 326h1v1h-1zM691 326h1v1h-1zM696 326h1v1h-1zM706 326h1v1h-1zM711 326h1v1h-1zM716 326h1v1h-1zM721 326h1v1h-1zM731 326h1v1h-1zM736 326h1v1h-1zM741 326h1v1h-1zM746 326h1v1h-1zM756 326h1v1h-1zM761 326h1v1h-1zM766 326h1v1h-1zM771 326h1v1h-1zM781 326h1v1h-1zM786 326h1v1h-1zM791 326h1v1h-1zM796 326h1v1h-1zM806 326h1v1h-1zM811 326h1v1h-1zM816 326h1v1h-1zM821 326h1v1h-1zM831 326h1v1h-1zM836 326h1v1h-1zM841 326h1v1h-1zM31 351h1v1h-1zM36 351h1v1h-1zM41 351h1v1h-1zM46 351h1v1h-1zM56 351h1v1h-1zM61 351h1v1h-1zM66 351h1v1h-1zM71 351h1v1h-1zM81 351h1v1h-1zM86 351h1v1h-1zM91 351h1v1h-1zM96 351h1v1h-1zM106 351h1v1h-1zM111 351h1v1h-1zM116 351h1v1h-1zM121 351h1v1h-1zM131 351h1v1h-1zM136 351h1v1h-1zM141 351h1v1h-1zM146 351h1v1h-1zM156 351h1v1h-1zM161 351h1v1h-1zM166 351h1v1h-1zM171 351h1v1h-1zM181 351h1v1h-1zM186 351h1v1h-1zM191 351h1v1h-1zM196 351h1v1h-1zM206 351h1v1h-1zM211 351h1v1h-1zM216 351h1v1h-1zM221 351h1v1h-1zM231 351h1v1h-1zM236 351h1v1h-1zM241 351h1v1h-1zM246 351h1v1h-1zM256 351h1v1h-1zM261 351h1v1h-1zM266 351h1v1h-1zM271 351h1v1h-1zM281 351h1v1h-1zM286 351h1v1h-1zM291 351h1v1h-1zM296 351h1v1h-1zM306 351h1v1h-1zM311 351h1v1h-1zM316 351h1v1h-1zM321 351h1v1h-1zM331 351h1v1h-1zM336 351h1v1h-1zM341 351h1v1h-1zM346 351h1v1h-1zM356 351h1v1h-1zM361 351h1v1h-1zM366 351h1v1h-1zM371 351h1v1h-1zM381 351h1v1h-1zM386 351h1v1h-1zM391 351h1v1h-1zM396 351h1v1h-1zM406 351h1v1h-1zM411 351h1v1h-1zM416 351h1v1h-1zM421 351h1v1h-1zM431 351h1v1h-1zM436 351h1v1h-1zM441 351h1v1h-1zM446 351h1v1h-1zM456 351h1v1h-1zM461 351h1v1h-1zM466 351h1v1h-1zM471 351h1v1h-1zM481 351h1v1h-1zM486 351h1v1h-1zM491 351h1v1h-1zM496 351h1v1h-1zM506 351h1v1h-1zM511 351h1v1h-1zM516 351h1v1h-1zM521 351h1v1h-1zM531 351h1v1h-1zM536 351h1v1h-1zM541 351h1v1h-1zM546 351h1v1h-1zM556 351h1v1h-1zM561 351h1v1h-1zM566 351h1v1h-1zM571 351h1v1h-1zM581 351h1v1h-1zM586 351h1v1h-1zM591 351h1v1h-1zM596 351h1v1h-1zM606 351h1v1h-1zM611 351h1v1h-1zM616 351h1v1h-1zM621 351h1v1h-1zM631 351h1v1h-1zM636 351h1v1h-1zM641 351h1v1h-1zM646 351h1v1h-1zM656 351h1v1h-1zM661 351h1v1h-1zM666 351h1v1h-1zM671 351h1v1h-1zM681 351h1v1h-1zM686 351h1v1h-1zM691 351h1v1h-1zM696 351h1v1h-1zM706 351h1v1h-1zM711 351h1v1h-1zM716 351h1v1h-1zM721 351h1v1h-1zM731 351h1v1h-1zM736 351h1v1h-1zM741 351h1v1h-1zM746 351h1v1h-1zM756 351h1v1h-1zM761 351h1v1h-1zM766 351h1v1h-1zM771 351h1v1h-1zM781 351h1v1h-1zM786 351h1v1h-1zM791 351h1v1h-1zM796 351h1v1h-1zM806 351h1v1h-1zM811 351h1v1h-1zM816 351h1v1h-1zM821 351h1v1h-1zM831 351h1v1h-1zM836 351h1v1h-1zM841 351h1v1h-1zM31 376h1v1h-1zM36 376h1v1h-1zM41 376h1v1h-1zM46 376h1v1h-1zM56 376h1v1h-1zM61 376h1v1h-1zM66 376h1v1h-1zM71 376h1v1h-1zM81 376h1v1h-1zM86 376h1v1h-1zM91 376h1v1h-1zM96 376h1v1h-1zM106 376h1v1h-1zM111 376h1v1h-1zM116 376h1v1h-1zM121 376h1v1h-1zM131 376h1v1h-1zM136 376h1v1h-1zM141 376h1v1h-1zM146 376h1v1h-1zM156 376h1v1h-1zM161 376h1v1h-1zM166 376h1v1h-1zM171 376h1v1h-1zM181 376h1v1h-1zM186 376h1v1h-1zM191 376h1v1h-1zM196 376h1v1h-1zM206 376h1v1h-1zM211 376h1v1h-1zM216 376h1v1h-1zM221 376h1v1h-1zM231 376h1v1h-1zM236 376h1v1h-1zM241 376h1v1h-1zM246 376h1v1h-1zM256 376h1v1h-1zM261 376h1v1h-1zM266 376h1v1h-1zM271 376h1v1h-1zM281 376h1v1h-1zM286 376h1v1h-1zM291 376h1v1h-1zM296 376h1v1h-1zM306 376h1v1h-1zM311 376h1v1h-1zM316 376h1v1h-1zM321 376h1v1h-1zM331 376h1v1h-1zM336 376h1v1h-1zM341 376h1v1h-1zM346 376h1v1h-1zM356 376h1v1h-1zM361 376h1v1h-1zM366 376h1v1h-1zM371 376h1v1h-1zM381 376h1v1h-1zM386 376h1v1h-1zM391 376h1v1h-1zM396 376h1v1h-1zM406 376h1v1h-1zM411 376h1v1h-1zM416 376h1v1h-1zM421 376h1v1h-1zM431 376h1v1h-1zM436 376h1v1h-1zM441 376h1v1h-1zM446 376h1v1h-1zM456 376h1v1h-1zM461 376h1v1h-1zM466 376h1v1h-1zM471 376h1v1h-1zM481 376h1v1h-1zM486 376h1v1h-1zM491 376h1v1h-1zM496 376h1v1h-1zM506 376h1v1h-1zM511 376h1v1h-1zM516 376h1v1h-1zM521 376h1v1h-1zM531 376h1v1h-1zM536 376h1v1h-1zM541 376h1v1h-1zM546 376h1v1h-1zM556 376h1v1h-1zM561 376h1v1h-1zM566 376h1v1h-1zM571 376h1v1h-1zM581 376h1v1h-1zM586 376h1v1h-1zM591 376h1v1h-1zM596 376h1v1h-1zM606 376h1v1h-1zM611 376h1v1h-1zM616 376h1v1h-1zM621 376h1v1h-1zM631 376h1v1h-1zM636 376h1v1h-1zM641 376h1v1h-1zM646 376h1v1h-1zM656 376h1v1h-1zM661 376h1v1h-1zM666 376h1v1h-1zM671 376h1v1h-1zM681 376h1v1h-1zM686 376h1v1h-1zM691 376h1v1h-1zM696 376h1v1h-1zM706 376h1v1h-1zM711 376h1v1h-1zM716 376h1v1h-1zM721 376h1v1h-1zM731 376h1v1h-1zM736 376h1v1h-1zM741 376h1v1h-1zM746 376h1v1h-1zM756 376h1v1h-1zM761 376h1v1h-1zM766 376h1v1h-1zM771 376h1v1h-1zM781 376h1v1h-1zM786 376h1v1h-1zM791 376h1v1h-1zM796 376h1v1h-1zM806 376h1v1h-1zM811 376h1v1h-1zM816 376h1v1h-1zM821 376h1v1h-1zM831 376h1v1h-1zM836 376h1v1h-1zM841 376h1v1h-1zM31 401h1v1h-1zM36 401h1v1h-1zM41 401h1v1h-1zM46 401h1v1h-1zM56 401h1v1h-1zM61 401h1v1h-1zM66 401h1v1h-1zM71 401h1v1h-1zM81 401h1v1h-1zM86 401h1v1h-1zM91 401h1v1h-1zM96 401h1v1h-1zM106 401h1v1h-1zM111 401h1v1h-1zM116 401h1v1h-1zM121 401h1v1h-1zM131 401h1v1h-1zM136 401h1v1h-1zM141 401h1v1h-1zM146 401h1v1h-1zM156 401h1v1h-1zM161 401h1v1h-1zM166 401h1v1h-1zM171 401h1v1h-1zM181 401h1v1h-1zM186 401h1v1h-1zM191 401h1v1h-1zM196 401h1v1h-1zM206 401h1v1h-1zM211 401h1v1h-1zM216 401h1v1h-1zM221 401h1v1h-1zM231 401h1v1h-1zM236 401h1v1h-1zM241 401h1v1h-1zM246 401h1v1h-1zM256 401h1v1h-1zM261 401h1v1h-1zM266 401h1v1h-1zM271 401h1v1h-1zM281 401h1v1h-1zM286 401h1v1h-1zM291 401h1v1h-1zM296 401h1v1h-1zM306 401h1v1h-1zM311 401h1v1h-1zM316 401h1v1h-1zM321 401h1v1h-1zM331 401h1v1h-1zM336 401h1v1h-1zM341 401h1v1h-1zM346 401h1v1h-1zM356 401h1v1h-1zM361 401h1v1h-1zM366 401h1v1h-1zM371 401h1v1h-1zM381 401h1v1h-1zM386 401h1v1h-1zM391 401h1v1h-1zM396 401h1v1h-1zM406 401h1v1h-1zM411 401h1v1h-1zM416 401h1v1h-1zM421 401h1v1h-1zM431 401h1v1h-1zM436 401h1v1h-1zM441 401h1v1h-1zM446 401h1v1h-1zM456 401h1v1h-1zM461 401h1v1h-1zM466 401h1v1h-1zM471 401h1v1h-1zM481 401h1v1h-1zM486 401h1v1h-1zM491 401h1v1h-1zM496 401h1v1h-1zM506 401h1v1h-1zM511 401h1v1h-1zM516 401h1v1h-1zM521 401h1v1h-1zM531 401h1v1h-1zM536 401h1v1h-1zM541 401h1v1h-1zM546 401h1v1h-1zM556 401h1v1h-1zM561 401h1v1h-1zM566 401h1v1h-1zM571 401h1v1h-1zM581 401h1v1h-1zM586 401h1v1h-1zM591 401h1v1h-1zM596 401h1v1h-1zM606 401h1v1h-1zM611 401h1v1h-1zM616 401h1v1h-1zM621 401h1v1h-1zM631 401h1v1h-1zM636 401h1v1h-1zM641 401h1v1h-1zM646 401h1v1h-1zM656 401h1v1h-1zM661 401h1v1h-1zM666 401h1v1h-1zM671 401h1v1h-1zM681 401h1v1h-1zM686 401h1v1h-1zM691 401h1v1h-1zM696 401h1v1h-1zM706 401h1v1h-1zM711 401h1v1h-1zM716 401h1v1h-1zM721 401h1v1h-1zM731 401h1v1h-1zM736 401h1v1h-1zM741 401h1v1h-1zM746 401h1v1h-1zM756 401h1v1h-1zM761 401h1v1h-1zM766 401h1v1h-1zM771 401h1v1h-1zM781 401h1v1h-1zM786 401h1v1h-1zM791 401h1v1h-1zM796 401h1v1h-1zM806 401h1v1h-1zM811 401h1v1h-1zM816 401h1v1h-1zM821 401h1v1h-1zM831 401h1v1h-1zM836 401h1v1h-1zM841 401h1v1h-1zM31 426h1v1h-1zM36 426h1v1h-1zM41 426h1v1h-1zM46 426h1v1h-1zM56 426h1v1h-1zM61 426h1v1h-1zM66 426h1v1h-1zM71 426h1v1h-1zM81 426h1v1h-1zM86 426h1v1h-1zM91 426h1v1h-1zM96 426h1v1h-1zM106 426h1v1h-1zM111 426h1v1h-1zM116 426h1v1h-1zM121 426h1v1h-1zM131 426h1v1h-1zM136 426h1v1h-1zM141 426h1v1h-1zM146 426h1v1h-1zM156 426h1v1h-1zM161 426h1v1h-1zM166 426h1v1h-1zM171 426h1v1h-1zM181 426h1v1h-1zM186 426h1v1h-1zM191 426h1v1h-1zM196 426h1v1h-1zM206 426h1v1h-1zM211 426h1v1h-1zM216 426h1v1h-1zM221 426h1v1h-1zM231 426h1v1h-1zM236 426h1v1h-1zM241 426h1v1h-1zM246 426h1v1h-1zM256 426h1v1h-1zM261 426h1v1h-1zM266 426h1v1h-1zM271 426h1v1h-1zM281 426h1v1h-1zM286 426h1v1h-1zM291 426h1v1h-1zM296 426h1v1h-1zM306 426h1v1h-1zM311 426h1v1h-1zM316 426h1v1h-1zM321 426h1v1h-1zM331 426h1v1h-1zM336 426h1v1h-1zM341 426h1v1h-1zM346 426h1v1h-1zM356 426h1v1h-1zM361 426h1v1h-1zM366 426h1v1h-1zM371 426h1v1h-1zM381 426h1v1h-1zM386 426h1v1h-1zM391 426h1v1h-1zM396 426h1v1h-1zM406 426h1v1h-1zM411 426h1v1h-1zM416 426h1v1h-1zM421 426h1v1h-1zM431 426h1v1h-1zM436 426h1v1h-1zM441 426h1v1h-1zM446 426h1v1h-1zM456 426h1v1h-1zM461 426h1v1h-1zM466 426h1v1h-1zM471 426h1v1h-1zM481 426h1v1h-1zM486 426h1v1h-1zM491 426h1v1h-1zM496 426h1v1h-1zM506 426h1v1h-1zM511 426h1v1h-1zM516 426h1v1h-1zM521 426h1v1h-1zM531 426h1v1h-1zM536 426h1v1h-1zM541 426h1v1h-1zM546 426h1v1h-1zM556 426h1v1h-1zM561 426h1v1h-1zM566 426h1v1h-1zM571 426h1v1h-1zM581 426h1v1h-1zM586 426h1v1h-1zM591 426h1v1h-1zM596 426h1v1h-1zM606 426h1v1h-1zM611 426h1v1h-1zM616 426h1v1h-1zM621 426h1v1h-1zM631 426h1v1h-1zM636 426h1v1h-1zM641 426h1v1h-1zM646 426h1v1h-1zM656 426h1v1h-1zM661 426h1v1h-1zM666 426h1v1h-1zM671 426h1v1h-1zM681 426h1v1h-1zM686 426h1v1h-1zM691 426h1v1h-1zM696 426h1v1h-1zM706 426h1v1h-1zM711 426h1v1h-1zM716 426h1v1h-1zM721 426h1v1h-1zM731 426h1v1h-1zM736 426h1v1h-1zM741 426h1v1h-1zM746 426h1v1h-1zM756 426h1v1h-1zM761 426h1v1h-1zM766 426h1v1h-1zM771 426h1v1h-1zM781 426h1v1h-1zM786 426h1v1h-1zM791 426h1v1h-1zM796 426h1v1h-1zM806 426h1v1h-1zM811 426h1v1h-1zM816 426h1v1h-1zM821 426h1v1h-1zM831 426h1v1h-1zM836 426h1v1h-1zM841 426h1v1h-1zM31 451h1v1h-1zM36 451h1v1h-1zM41 451h1v1h-1zM46 451h1v1h-1zM56 451h1v1h-1zM61 451h1v1h-1zM66 451h1v1h-1zM71 451h1v1h-1zM81 451h1v1h-1zM86 451h1v1h-1zM91 451h1v1h-1zM96 451h1v1h-1zM106 451h1v1h-1zM111 451h1v1h-1zM116 451h1v1h-1zM121 451h1v1h-1zM131 451h1v1h-1zM136 451h1v1h-1zM141 451h1v1h-1zM146 451h1v1h-1zM156 451h1v1h-1zM161 451h1v1h-1zM166 451h1v1h-1zM171 451h1v1h-1zM181 451h1v1h-1zM186 451h1v1h-1zM191 451h1v1h-1zM196 451h1v1h-1zM206 451h1v1h-1zM211 451h1v1h-1zM216 451h1v1h-1zM221 451h1v1h-1zM231 451h1v1h-1zM236 451h1v1h-1zM241 451h1v1h-1zM246 451h1v1h-1zM256 451h1v1h-1zM261 451h1v1h-1zM266 451h1v1h-1zM271 451h1v1h-1zM281 451h1v1h-1zM286 451h1v1h-1zM291 451h1v1h-1zM296 451h1v1h-1zM306 451h1v1h-1zM311 451h1v1h-1zM316 451h1v1h-1zM321 451h1v1h-1zM331 451h1v1h-1zM336 451h1v1h-1zM341 451h1v1h-1zM346 451h1v1h-1zM356 451h1v1h-1zM361 451h1v1h-1zM366 451h1v1h-1zM371 451h1v1h-1zM381 451h1v1h-1zM386 451h1v1h-1zM391 451h1v1h-1zM396 451h1v1h-1zM406 451h1v1h-1zM411 451h1v1h-1zM416 451h1v1h-1zM421 451h1v1h-1zM431 451h1v1h-1zM436 451h1v1h-1zM441 451h1v1h-1zM446 451h1v1h-1zM456 451h1v1h-1zM461 451h1v1h-1zM466 451h1v1h-1zM471 451h1v1h-1zM481 451h1v1h-1zM486 451h1v1h-1zM491 451h1v1h-1zM496 451h1v1h-1zM506 451h1v1h-1zM511 451h1v1h-1zM516 451h1v1h-1zM521 451h1v1h-1zM531 451h1v1h-1zM536 451h1v1h-1zM541 451h1v1h-1zM546 451h1v1h-1zM556 451h1v1h-1zM561 451h1v1h-1zM566 451h1v1h-1zM571 451h1v1h-1zM581 451h1v1h-1zM586 451h1v1h-1zM591 451h1v1h-1zM596 451h1v1h-1zM606 451h1v1h-1zM611 451h1v1h-1zM616 451h1v1h-1zM621 451h1v1h-1zM631 451h1v1h-1zM636 451h1v1h-1zM641 451h1v1h-1zM646 451h1v1h-1zM656 451h1v1h-1zM661 451h1v1h-1zM666 451h1v1h-1zM671 451h1v1h-1zM681 451h1v1h-1zM686 451h1v1h-1zM691 451h1v1h-1zM696 451h1v1h-1zM706 451h1v1h-1zM711 451h1v1h-1zM716 451h1v1h-1zM721 451h1v1h-1zM731 451h1v1h-1zM736 451h1v1h-1zM741 451h1v1h-1zM746 451h1v1h-1zM756 451h1v1h-1zM761 451h1v1h-1zM766 451h1v1h-1zM771 451h1v1h-1zM781 451h1v1h-1zM786 451h1v1h-1zM791 451h1v1h-1zM796 451h1v1h-1zM806 451h1v1h-1zM811 451h1v1h-1zM816 451h1v1h-1zM821 451h1v1h-1zM831 451h1v1h-1zM836 451h1v1h-1zM841 451h1v1h-1zM31 476h1v1h-1zM36 476h1v1h-1zM41 476h1v1h-1zM46 476h1v1h-1zM56 476h1v1h-1zM61 476h1v1h-1zM66 476h1v1h-1zM71 476h1v1h-1zM81 476h1v1h-1zM86 476h1v1h-1zM91 476h1v1h-1zM96 476h1v1h-1zM106 476h1v1h-1zM111 476h1v1h-1zM116 476h1v1h-1zM121 476h1v1h-1zM131 476h1v1h-1zM136 476h1v1h-1zM141 476h1v1h-1zM146 476h1v1h-1zM156 476h1v1h-1zM161 476h1v1h-1zM166 476h1v1h-1zM171 476h1v1h-1zM181 476h1v1h-1zM186 476h1v1h-1zM191 476h1v1h-1zM196 476h1v1h-1zM206 476h1v1h-1zM211 476h1v1h-1zM216 476h1v1h-1zM221 476h1v1h-1zM231 476h1v1h-1zM236 476h1v1h-1zM241 476h1v1h-1zM246 476h1v1h-1zM256 476h1v1h-1zM261 476h1v1h-1zM266 476h1v1h-1zM271 476h1v1h-1zM281 476h1v1h-1zM286 476h1v1h-1zM291 476h1v1h-1zM296 476h1v1h-1zM306 476h1v1h-1zM311 476h1v1h-1zM316 476h1v1h-1zM321 476h1v1h-1zM331 476h1v1h-1zM336 476h1v1h-1zM341 476h1v1h-1zM346 476h1v1h-1zM356 476h1v1h-1zM361 476h1v1h-1zM366 476h1v1h-1zM371 476h1v1h-1zM381 476h1v1h-1zM386 476h1v1h-1zM391 476h1v1h-1zM396 476h1v1h-1zM406 476h1v1h-1zM411 476h1v1h-1zM416 476h1v1h-1zM421 476h1v1h-1zM431 476h1v1h-1zM436 476h1v1h-1zM441 476h1v1h-1zM446 476h1v1h-1zM456 476h1v1h-1zM461 476h1v1h-1zM466 476h1v1h-1zM471 476h1v1h-1zM481 476h1v1h-1zM486 476h1v1h-1zM491 476h1v1h-1zM496 476h1v1h-1zM506 476h1v1h-1zM511 476h1v1h-1zM516 476h1v1h-1zM521 476h1v1h-1zM531 476h1v1h-1zM536 476h1v1h-1zM541 476h1v1h-1zM546 476h1v1h-1zM556 476h1v1h-1zM561 476h1v1h-1zM566 476h1v1h-1zM571 476h1v1h-1zM581 476h1v1h-1zM586 476h1v1h-1zM591 476h1v1h-1zM596 476h1v1h-1zM606 476h1v1h-1zM611 476h1v1h-1zM616 476h1v1h-1zM621 476h1v1h-1zM631 476h1v1h-1zM636 476h1v1h-1zM641 476h1v1h-1zM646 476h1v1h-1zM656 476h1v1h-1zM661 476h1v1h-1zM666 476h1v1h-1zM671 476h1v1h-1zM681 476h1v1h-1zM686 476h1v1h-1zM691 476h1v1h-1zM696 476h1v1h-1zM706 476h1v1h-1zM711 476h1v1h-1zM716 476h1v1h-1zM721 476h1v1h-1zM731 476h1v1h-1zM736 476h1v1h-1zM741 476h1v1h-1zM746 476h1v1h-1zM756 476h1v1h-1zM761 476h1v1h-1zM766 476h1v1h-1zM771 476h1v1h-1zM781 476h1v1h-1zM786 476h1v1h-1zM791 476h1v1h-1zM796 476h1v1h-1zM806 476h1v1h-1zM811 476h1v1h-1zM816 476h1v1h-1zM821 476h1v1h-1zM831 476h1v1h-1zM836 476h1v1h-1zM841 476h1v1h-1zM31 501h1v1h-1zM36 501h1v1h-1zM41 501h1v1h-1zM46 501h1v1h-1zM56 501h1v1h-1zM61 501h1v1h-1zM66 501h1v1h-1zM71 501h1v1h-1zM81 501h1v1h-1zM86 501h1v1h-1zM91 501h1v1h-1zM96 501h1v1h-1zM106 501h1v1h-1zM111 501h1v1h-1zM116 501h1v1h-1zM121 501h1v1h-1zM131 501h1v1h-1zM136 501h1v1h-1zM141 501h1v1h-1zM146 501h1v1h-1zM156 501h1v1h-1zM161 501h1v1h-1zM166 501h1v1h-1zM171 501h1v1h-1zM181 501h1v1h-1zM186 501h1v1h-1zM191 501h1v1h-1zM196 501h1v1h-1zM206 501h1v1h-1zM211 501h1v1h-1zM216 501h1v1h-1zM221 501h1v1h-1zM231 501h1v1h-1zM236 501h1v1h-1zM241 501h1v1h-1zM246 501h1v1h-1zM256 501h1v1h-1zM261 501h1v1h-1zM266 501h1v1h-1zM271 501h1v1h-1zM281 501h1v1h-1zM286 501h1v1h-1zM291 501h1v1h-1zM296 501h1v1h-1zM306 501h1v1h-1zM311 501h1v1h-1zM316 501h1v1h-1zM321 501h1v1h-1zM331 501h1v1h-1zM336 501h1v1h-1zM341 501h1v1h-1zM346 501h1v1h-1zM356 501h1v1h-1zM361 501h1v1h-1zM366 501h1v1h-1zM371 501h1v1h-1zM381 501h1v1h-1zM386 501h1v1h-1zM391 501h1v1h-1zM396 501h1v1h-1zM406 501h1v1h-1zM411 501h1v1h-1zM416 501h1v1h-1zM421 501h1v1h-1zM431 501h1v1h-1zM436 501h1v1h-1zM441 501h1v1h-1zM446 501h1v1h-1zM456 501h1v1h-1zM461 501h1v1h-1zM466 501h1v1h-1zM471 501h1v1h-1zM481 501h1v1h-1zM486 501h1v1h-1zM491 501h1v1h-1zM496 501h1v1h-1zM506 501h1v1h-1zM511 501h1v1h-1zM516 501h1v1h-1zM521 501h1v1h-1zM531 501h1v1h-1zM536 501h1v1h-1zM541 501h1v1h-1zM546 501h1v1h-1zM556 501h1v1h-1zM561 501h1v1h-1zM566 501h1v1h-1zM571 501h1v1h-1zM581 501h1v1h-1zM586 501h1v1h-1zM591 501h1v1h-1zM596 501h1v1h-1zM606 501h1v1h-1zM611 501h1v1h-1zM616 501h1v1h-1zM621 501h1v1h-1zM631 501h1v1h-1zM636 501h1v1h-1zM641 501h1v1h-1zM646 501h1v1h-1zM656 501h1v1h-1zM661 501h1v1h-1zM666 501h1v1h-1zM671 501h1v1h-1zM681 501h1v1h-1zM686 501h1v1h-1zM691 501h1v1h-1zM696 501h1v1h-1zM706 501h1v1h-1zM711 501h1v1h-1zM716 501h1v1h-1zM721 501h1v1h-1zM731 501h1v1h-1zM736 501h1v1h-1zM741 501h1v1h-1zM746 501h1v1h-1zM756 501h1v1h-1zM761 501h1v1h-1zM766 501h1v1h-1zM771 501h1v1h-1zM781 501h1v1h-1zM786 501h1v1h-1zM791 501h1v1h-1zM796 501h1v1h-1zM806 501h1v1h-1zM811 501h1v1h-1zM816 501h1v1h-1zM821 501h1v1h-1zM831 501h1v1h-1zM836 501h1v1h-1zM841 501h1v1h-1zM31 526h1v1h-1zM36 526h1v1h-1zM41 526h1v1h-1zM46 526h1v1h-1zM56 526h1v1h-1zM61 526h1v1h-1zM66 526h1v1h-1zM71 526h1v1h-1zM81 526h1v1h-1zM86 526h1v1h-1zM91 526h1v1h-1zM96 526h1v1h-1zM106 526h1v1h-1zM111 526h1v1h-1zM116 526h1v1h-1zM121 526h1v1h-1zM131 526h1v1h-1zM136 526h1v1h-1zM141 526h1v1h-1zM146 526h1v1h-1zM156 526h1v1h-1zM161 526h1v1h-1zM166 526h1v1h-1zM171 526h1v1h-1zM181 526h1v1h-1zM186 526h1v1h-1zM191 526h1v1h-1zM196 526h1v1h-1zM206 526h1v1h-1zM211 526h1v1h-1zM216 526h1v1h-1zM221 526h1v1h-1zM231 526h1v1h-1zM236 526h1v1h-1zM241 526h1v1h-1zM246 526h1v1h-1zM256 526h1v1h-1zM261 526h1v1h-1zM266 526h1v1h-1zM271 526h1v1h-1zM281 526h1v1h-1zM286 526h1v1h-1zM291 526h1v1h-1zM296 526h1v1h-1zM306 526h1v1h-1zM311 526h1v1h-1zM316 526h1v1h-1zM321 526h1v1h-1zM331 526h1v1h-1zM336 526h1v1h-1zM341 526h1v1h-1zM346 526h1v1h-1zM356 526h1v1h-1zM361 526h1v1h-1zM366 526h1v1h-1zM371 526h1v1h-1zM381 526h1v1h-1zM386 526h1v1h-1zM391 526h1v1h-1zM396 526h1v1h-1zM406 526h1v1h-1zM411 526h1v1h-1zM416 526h1v1h-1zM421 526h1v1h-1zM431 526h1v1h-1zM436 526h1v1h-1zM441 526h1v1h-1zM446 526h1v1h-1zM456 526h1v1h-1zM461 526h1v1h-1zM466 526h1v1h-1zM471 526h1v1h-1zM481 526h1v1h-1zM486 526h1v1h-1zM491 526h1v1h-1zM496 526h1v1h-1zM506 526h1v1h-1zM511 526h1v1h-1zM516 526h1v1h-1zM521 526h1v1h-1zM531 526h1v1h-1zM536 526h1v1h-1zM541 526h1v1h-1zM546 526h1v1h-1zM556 526h1v1h-1zM561 526h1v1h-1zM566 526h1v1h-1zM571 526h1v1h-1zM581 526h1v1h-1zM586 526h1v1h-1zM591 526h1v1h-1zM596 526h1v1h-1zM606 526h1v1h-1zM611 526h1v1h-1zM616 526h1v1h-1zM621 526h1v1h-1zM631 526h1v1h-1zM636 526h1v1h-1zM641 526h1v1h-1zM646 526h1v1h-1zM656 526h1v1h-1zM661 526h1v1h-1zM666 526h1v1h-1zM671 526h1v1h-1zM681 526h1v1h-1zM686 526h1v1h-1zM691 526h1v1h-1zM696 526h1v1h-1zM706 526h1v1h-1zM711 526h1v1h-1zM716 526h1v1h-1zM721 526h1v1h-1zM731 526h1v1h-1zM736 526h1v1h-1zM741 526h1v1h-1zM746 526h1v1h-1zM756 526h1v1h-1zM761 526h1v1h-1zM766 526h1v1h-1zM771 526h1v1h-1zM781 526h1v1h-1zM786 526h1v1h-1zM791 526h1v1h-1zM796 526h1v1h-1zM806 526h1v1h-1zM811 526h1v1h-1zM816 526h1v1h-1zM821 526h1v1h-1zM831 526h1v1h-1zM836 526h1v1h-1zM841 526h1v1h-1zM31 551h1v1h-1zM36 551h1v1h-1zM41 551h1v1h-1zM46 551h1v1h-1zM56 551h1v1h-1zM61 551h1v1h-1zM66 551h1v1h-1zM71 551h1v1h-1zM81 551h1v1h-1zM86 551h1v1h-1zM91 551h1v1h-1zM96 551h1v1h-1zM106 551h1v1h-1zM111 551h1v1h-1zM116 551h1v1h-1zM121 551h1v1h-1zM131 551h1v1h-1zM136 551h1v1h-1zM141 551h1v1h-1zM146 551h1v1h-1zM156 551h1v1h-1zM161 551h1v1h-1zM166 551h1v1h-1zM171 551h1v1h-1zM181 551h1v1h-1zM186 551h1v1h-1zM191 551h1v1h-1zM196 551h1v1h-1zM206 551h1v1h-1zM211 551h1v1h-1zM216 551h1v1h-1zM221 551h1v1h-1zM231 551h1v1h-1zM236 551h1v1h-1zM241 551h1v1h-1zM246 551h1v1h-1zM256 551h1v1h-1zM261 551h1v1h-1zM266 551h1v1h-1zM271 551h1v1h-1zM281 551h1v1h-1zM286 551h1v1h-1zM291 551h1v1h-1zM296 551h1v1h-1zM306 551h1v1h-1zM311 551h1v1h-1zM316 551h1v1h-1zM321 551h1v1h-1zM331 551h1v1h-1zM336 551h1v1h-1zM341 551h1v1h-1zM346 551h1v1h-1zM356 551h1v1h-1zM361 551h1v1h-1zM366 551h1v1h-1zM371 551h1v1h-1zM381 551h1v1h-1zM386 551h1v1h-1zM391 551h1v1h-1zM396 551h1v1h-1zM406 551h1v1h-1zM411 551h1v1h-1zM416 551h1v1h-1zM421 551h1v1h-1zM431 551h1v1h-1zM436 551h1v1h-1zM441 551h1v1h-1zM446 551h1v1h-1zM456 551h1v1h-1zM461 551h1v1h-1zM466 551h1v1h-1zM471 551h1v1h-1zM481 551h1v1h-1zM486 551h1v1h-1zM491 551h1v1h-1zM496 551h1v1h-1zM506 551h1v1h-1zM511 551h1v1h-1zM516 551h1v1h-1zM521 551h1v1h-1zM531 551h1v1h-1zM536 551h1v1h-1zM541 551h1v1h-1zM546 551h1v1h-1zM556 551h1v1h-1zM561 551h1v1h-1zM566 551h1v1h-1zM571 551h1v1h-1zM581 551h1v1h-1zM586 551h1v1h-1zM591 551h1v1h-1zM596 551h1v1h-1zM606 551h1v1h-1zM611 551h1v1h-1zM616 551h1v1h-1zM621 551h1v1h-1zM631 551h1v1h-1zM636 551h1v1h-1zM641 551h1v1h-1zM646 551h1v1h-1zM656 551h1v1h-1zM661 551h1v1h-1zM666 551h1v1h-1zM671 551h1v1h-1zM681 551h1v1h-1zM686 551h1v1h-1zM691 551h1v1h-1zM696 551h1v1h-1zM706 551h1v1h-1zM711 551h1v1h-1zM716 551h1v1h-1zM721 551h1v1h-1zM731 551h1v1h-1zM736 551h1v1h-1zM741 551h1v1h-1zM746 551h1v1h-1zM756 551h1v1h-1zM761 551h1v1h-1zM766 551h1v1h-1zM771 551h1v1h-1zM781 551h1v1h-1zM786 551h1v1h-1zM791 551h1v1h-1zM796 551h1v1h-1zM806 551h1v1h-1zM811 551h1v1h-1zM816 551h1v1h-1zM821 551h1v1h-1zM831 551h1v1h-1zM836 551h1v1h-1zM841 551h1v1h-1zM31 576h1v1h-1zM36 576h1v1h-1zM41 576h1v1h-1zM46 576h1v1h-1zM56 576h1v1h-1zM61 576h1v1h-1zM66 576h1v1h-1zM71 576h1v1h-1zM81 576h1v1h-1zM86 576h1v1h-1zM91 576h1v1h-1zM96 576h1v1h-1zM106 576h1v1h-1zM111 576h1v1h-1zM116 576h1v1h-1zM121 576h1v1h-1zM131 576h1v1h-1zM136 576h1v1h-1zM141 576h1v1h-1zM146 576h1v1h-1zM156 576h1v1h-1zM161 576h1v1h-1zM166 576h1v1h-1zM171 576h1v1h-1zM181 576h1v1h-1zM186 576h1v1h-1zM191 576h1v1h-1zM196 576h1v1h-1zM206 576h1v1h-1zM211 576h1v1h-1zM216 576h1v1h-1zM221 576h1v1h-1zM231 576h1v1h-1zM236 576h1v1h-1zM241 576h1v1h-1zM246 576h1v1h-1zM256 576h1v1h-1zM261 576h1v1h-1zM266 576h1v1h-1zM271 576h1v1h-1zM281 576h1v1h-1zM286 576h1v1h-1zM291 576h1v1h-1zM296 576h1v1h-1zM306 576h1v1h-1zM311 576h1v1h-1zM316 576h1v1h-1zM321 576h1v1h-1zM331 576h1v1h-1zM336 576h1v1h-1zM341 576h1v1h-1zM346 576h1v1h-1zM356 576h1v1h-1zM361 576h1v1h-1zM366 576h1v1h-1zM371 576h1v1h-1zM381 576h1v1h-1zM386 576h1v1h-1zM391 576h1v1h-1zM396 576h1v1h-1zM406 576h1v1h-1zM411 576h1v1h-1zM416 576h1v1h-1zM421 576h1v1h-1zM431 576h1v1h-1zM436 576h1v1h-1zM441 576h1v1h-1zM446 576h1v1h-1zM456 576h1v1h-1zM461 576h1v1h-1zM466 576h1v1h-1zM471 576h1v1h-1zM481 576h1v1h-1zM486 576h1v1h-1zM491 576h1v1h-1zM496 576h1v1h-1zM506 576h1v1h-1zM511 576h1v1h-1zM516 576h1v1h-1zM521 576h1v1h-1zM531 576h1v1h-1zM536 576h1v1h-1zM541 576h1v1h-1zM546 576h1v1h-1zM556 576h1v1h-1zM561 576h1v1h-1zM566 576h1v1h-1zM571 576h1v1h-1zM581 576h1v1h-1zM586 576h1v1h-1zM591 576h1v1h-1zM596 576h1v1h-1zM606 576h1v1h-1zM611 576h1v1h-1zM616 576h1v1h-1zM621 576h1v1h-1zM631 576h1v1h-1zM636 576h1v1h-1zM641 576h1v1h-1zM646 576h1v1h-1zM656 576h1v1h-1zM661 576h1v1h-1zM666 576h1v1h-1zM671 576h1v1h-1zM681 576h1v1h-1zM686 576h1v1h-1zM691 576h1v1h-1zM696 576h1v1h-1zM706 576h1v1h-1zM711 576h1v1h-1zM716 576h1v1h-1zM721 576h1v1h-1zM731 576h1v1h-1zM736 576h1v1h-1zM741 576h1v1h-1zM746 576h1v1h-1zM756 576h1v1h-1zM761 576h1v1h-1zM766 576h1v1h-1zM771 576h1v1h-1zM781 576h1v1h-1zM786 576h1v1h-1zM791 576h1v1h-1zM796 576h1v1h-1zM806 576h1v1h-1zM811 576h1v1h-1zM816 576h1v1h-1zM821 576h1v1h-1zM831 576h1v1h-1zM836 576h1v1h-1zM841 576h1v1h-1zM31 601h1v1h-1zM36 601h1v1h-1zM41 601h1v1h-1zM46 601h1v1h-1zM56 601h1v1h-1zM61 601h1v1h-1zM66 601h1v1h-1zM71 601h1v1h-1zM81 601h1v1h-1zM86 601h1v1h-1zM91 601h1v1h-1zM96 601h1v1h-1zM106 601h1v1h-1zM111 601h1v1h-1zM116 601h1v1h-1zM121 601h1v1h-1zM131 601h1v1h-1zM136 601h1v1h-1zM141 601h1v1h-1zM146 601h1v1h-1zM156 601h1v1h-1zM161 601h1v1h-1zM166 601h1v1h-1zM171 601h1v1h-1zM181 601h1v1h-1zM186 601h1v1h-1zM191 601h1v1h-1zM196 601h1v1h-1zM206 601h1v1h-1zM211 601h1v1h-1zM216 601h1v1h-1zM221 601h1v1h-1zM231 601h1v1h-1zM236 601h1v1h-1zM241 601h1v1h-1zM246 601h1v1h-1zM256 601h1v1h-1zM261 601h1v1h-1zM266 601h1v1h-1zM271 601h1v1h-1zM281 601h1v1h-1zM286 601h1v1h-1zM291 601h1v1h-1zM296 601h1v1h-1zM306 601h1v1h-1zM311 601h1v1h-1zM316 601h1v1h-1zM321 601h1v1h-1zM331 601h1v1h-1zM336 601h1v1h-1zM341 601h1v1h-1zM346 601h1v1h-1zM356 601h1v1h-1zM361 601h1v1h-1zM366 601h1v1h-1zM371 601h1v1h-1zM381 601h1v1h-1zM386 601h1v1h-1zM391 601h1v1h-1zM396 601h1v1h-1zM406 601h1v1h-1zM411 601h1v1h-1zM416 601h1v1h-1zM421 601h1v1h-1zM431 601h1v1h-1zM436 601h1v1h-1zM441 601h1v1h-1zM446 601h1v1h-1zM456 601h1v1h-1zM461 601h1v1h-1zM466 601h1v1h-1zM471 601h1v1h-1zM481 601h1v1h-1zM486 601h1v1h-1zM491 601h1v1h-1zM496 601h1v1h-1zM506 601h1v1h-1zM511 601h1v1h-1zM516 601h1v1h-1zM521 601h1v1h-1zM531 601h1v1h-1zM536 601h1v1h-1zM541 601h1v1h-1zM546 601h1v1h-1zM556 601h1v1h-1zM561 601h1v1h-1zM566 601h1v1h-1zM571 601h1v1h-1zM581 601h1v1h-1zM586 601h1v1h-1zM591 601h1v1h-1zM596 601h1v1h-1zM606 601h1v1h-1zM611 601h1v1h-1zM616 601h1v1h-1zM621 601h1v1h-1zM631 601h1v1h-1zM636 601h1v1h-1zM641 601h1v1h-1zM646 601h1v1h-1zM656 601h1v1h-1zM661 601h1v1h-1zM666 601h1v1h-1zM671 601h1v1h-1zM681 601h1v1h-1zM686 601h1v1h-1zM691 601h1v1h-1zM696 601h1v1h-1zM706 601h1v1h-1zM711 601h1v1h-1zM716 601h1v1h-1zM721 601h1v1h-1zM731 601h1v1h-1zM736 601h1v1h-1zM741 601h1v1h-1zM746 601h1v1h-1zM756 601h1v1h-1zM761 601h1v1h-1zM766 601h1v1h-1zM771 601h1v1h-1zM781 601h1v1h-1zM786 601h1v1h-1zM791 601h1v1h-1zM796 601h1v1h-1zM806 601h1v1h-1zM811 601h1v1h-1zM816 601h1v1h-1zM821 601h1v1h-1zM831 601h1v1h-1zM836 601h1v1h-1zM841 601h1v1h-1z"/><path fill="#808080" d="M2 5h1v1h-1zM2 10h1v1h-1zM2 15h1v1h-1zM2 20h1v1h-1zM2 30h1v1h-1zM2 35h1v1h-1zM2 40h1v1h-1zM2 45h1v1h-1zM2 55h1v1h-1zM2 60h1v1h-1zM2 65h1v1h-1zM2 70h1v1h-1zM2 80h1v1h-1zM2 85h1v1h-1zM2 90h1v1h-1zM2 95h1v1h-1zM2 105h1v1h-1zM2 110h1v1h-1zM2 115h1v1h-1zM2 120h1v1h-1zM2 130h1v1h-1zM2 135h1v1h-1zM2 140h1v1h-1zM2 145h1v1h-1zM2 155h1v1h-1zM2 160h1v1h-1zM2 165h1v1h-1zM2 170h1v1h-1zM2 180h1v1h-1zM2 185h1v1h-1zM2 190h1v1h-1zM2 195h1v1h-1zM2 205h1v1h-1zM2 210h1v1h-1zM2 215h1v1h-1zM2 220h1v1h-1zM2 230h1v1h-1zM2 235h1v1h-1zM2 240h1v1h-1zM2 245h1v1h-1zM2 255h1v1h-1zM2 260h1v1h-1zM2 265h1v1h-1zM2 270h1v1h-1zM2 280h1v1h-1zM2 285h1v1h-1zM2 290h1v1h-1zM2 295h1v1h-1zM2 305h1v1h-1zM2 310h1v1h-1zM2 315h1v1h-1zM2 320h1v1h-1zM2 330h1v1h-1zM2 335h1v1h-1zM2 340h1v1h-1zM2 345h1v1h-1zM2 355h1v1h-1zM2 360h1v1h-1zM2 365h1v1h-1zM2 370h1v1h-1zM2 380h1v1h-1zM2 385h1v1h-1zM2 390h1v1h-1zM2 395h1v1h-1zM2 405h1v1h-1zM2 410h1v1h-1zM2 415h1v1h-1zM2 420h1v1h-1zM2 430h1v1h-1zM2 435h1v1h-1zM2 440h1v1h-1zM2 445h1v1h-1zM2 455h1v1h-1zM2 460h1v1h-1zM2 465h1v1h-1zM2 470h1v1h-1zM2 480h1v1h-1zM2 485h1v1h-1zM2 490h1v1h-1zM2 495h1v1h-1zM2 505h1v1h-1zM2 510h1v1h-1zM2 515h1v1h-1zM2 520h1v1h-1zM2 530h1v1h-1zM2 535h1v1h-1zM2 540h1v1h-1zM2 545h1v1h-1zM2 555h1v1h-1zM2 560h1v1h-1zM2 565h1v1h-1zM2 570h1v1h-1zM2 580h1v1h-1zM2 585h1v1h-1zM2 590h1v1h-1zM2 595h1v1h-1zM2 605h1v1h-1zM2 610h1v1h-1zM2 615h1v1h-1zM2 620h1v1h-1zM2 630h1v1h-1z"/><path fill="#ff0000" d="M26 258h1V280h-1zM27 279h1V298h-1zM28 266h1V280h-1zM29 279h1V289h-1zM30 274h1V280h-1zM31 279h1V281h-1zM32 276h1V280h-1zM33 279h1V288h-1zM34 267h1V280h-1zM35 279h1V297h-1zM36 259h1V280h-1zM37 279h1V305h-1zM38 251h1V280h-1zM39 279h1V314h-1zM40 242h1V280h-1zM41 279h1V322h-1zM42 234h1V280h-1zM43 279h1V331h-1zM44 226h1V280h-1zM45 279h1V340h-1zM46 218h1V280h-1zM47 279h1V348h-1zM48 209h1V280h-1zM49 279h1V353h-1zM50 209h1V280h-1zM51 279h1V353h-1zM52 209h1V280h-1zM53 279h1V353h-1zM54 209h1V280h-1zM55 279h1V353h-1zM56 209h1V280h-1zM57 279h1V350h-1zM58 216h1V280h-1zM59 279h1V342h-1zM60 224h1V280h-1zM61 279h1V333h-1zM62 232h1V280h-1zM63 279h1V324h-1zM64 241h1V280h-1zM65 279h1V316h-1zM66 249h1V280h-1zM67 279h1V307h-1zM68 257h1V280h-1zM69 279h1V298h-1zM70 266h1V280h-1zM71 279h1V290h-1zM72 274h1V280h-1zM73 278h1V280h-1zM74 279h1V283h-1zM75 272h1V280h-1zM76 279h1V292h-1zM77 263h1V280h-1zM78 279h1V301h-1zM79 255h1V280h-1zM80 279h1V309h-1zM81 247h1V280h-1zM82 279h1V318h-1zM83 239h1V280h-1zM84 279h1V326h-1zM85 230h1V280h-1zM86 279h1V335h-1zM87 222h1V280h-1zM88 279h1V344h-1zM89 214h1V280h-1zM90 279h1V352h-1zM91 209h1V280h-1zM92 279h1V353h-1zM93 209h1V280h-1zM94 279h1V353h-1zM95 209h1V280h-1zM96 279h1V353h-1zM97 209h1V280h-1zM98 279h1V353h-1zM99 212h1V280h-1zM100 279h1V346h-1zM101 220h1V280h-1zM102 279h1V337h-1zM103 228h1V280h-1zM104 279h1V328h-1zM105 237h1V280h-1zM106 279h1V320h-1zM107 245h1V280h-1zM108 279h1V311h-1zM109 253h1V280h-1zM110 279h1V302h-1zM111 262h1V280h-1zM112 279h1V294h-1zM113 270h1V280h-1zM114 279h1V285h-1zM115 278h1V280h-1zM116 276h1V280h-1zM117 279h1V288h-1zM118 267h1V280h-1zM119 279h1V296h-1zM120 259h1V280h-1zM121 279h1V305h-1zM122 251h1V280h-1zM123 279h1V314h-1zM124 243h1V280h-1zM125 279h1V322h-1zM126 234h1V280h-1zM127 279h1V331h-1zM128 226h1V280h-1zM129 279h1V340h-1zM130 218h1V280h-1zM131 279h1V348h-1zM132 209h1V280h-1zM133 279h1V353h-1zM134 209h1V280h-1zM135 279h1V353h-1zM136 209h1V280h-1zM137 279h1V353h-1zM138 209h1V280h-1zM139 279h1V353h-1zM140 211h1V280h-1zM141 279h1V347h-1zM142 219h1V280h-1zM143 279h1V338h-1zM144 227h1V280h-1zM145 279h1V329h-1zM146 236h1V280h-1zM147 279h1V321h-1zM148 244h1V280h-1zM149 279h1V312h-1zM150 252h1V280h-1zM151 279h1V304h-1zM152 261h1V280h-1zM153 279h1V295h-1zM154 269h1V280h-1zM155 279h1V286h-1zM156 277h1V280h-1zM157 277h1V280h-1zM158 279h1V287h-1zM159 268h1V280h-1zM160 279h1V295h-1zM161 260h1V280h-1zM162 279h1V304h-1zM163 252h1V280h-1zM164 279h1V313h-1zM165 244h1V280h-1zM166 279h1V321h-1zM167 235h1V280h-1zM168 279h1V330h-1zM169 227h1V280h-1zM170 279h1V339h-1zM171 219h1V280h-1zM172 279h1V347h-1zM173 210h1V280h-1zM174 279h1V353h-1zM175 209h1V280h-1zM176 279h1V353h-1zM177 209h1V280h-1zM178 279h1V353h-1zM179 209h1V280h-1zM180 279h1V353h-1zM181 209h1V280h-1zM182 279h1V349h-1zM183 217h1V280h-1zM184 279h1V341h-1zM185 225h1V280h-1zM186 279h1V332h-1zM187 233h1V280h-1zM188 279h1V323h-1zM189 242h1V280h-1zM190 279h1V315h-1zM191 250h1V280h-1zM192 279h1V306h-1zM193 258h1V280h-1zM194 279h1V297h-1zM195 266h1V280h-1zM196 279h1V289h-1zM197 275h1V280h-1zM198 279h1V280h-1zM199 279h1V284h-1zM200 271h1V280h-1zM201 279h1V293h-1zM202 263h1V280h-1zM203 279h1V301h-1zM204 254h1V280h-1zM205 279h1V310h-1zM206 246h1V280h-1zM207 279h1V319h-1zM208 238h1V280h-1zM209 279h1V327h-1zM210 230h1V280h-1zM211 279h1V336h-1zM212 221h1V280h-1zM213 279h1V345h-1zM214 213h1V280h-1zM215 279h1V353h-1zM216 209h1V280h-1zM217 279h1V353h-1zM218 209h1V280h-1zM219 279h1V353h-1zM220 209h1V280h-1zM221 279h1V353h-1zM222 209h1V280h-1zM223 279h1V353h-1zM224 213h1V280h-1zM225 279h1V344h-1zM226 222h1V280h-1zM227 279h1V336h-1zM228 230h1V280h-1zM229 279h1V327h-1zM230 238h1V280h-1zM231 279h1V318h-1zM232 246h1V280h-1zM233 279h1V310h-1zM234 255h1V280h-1zM235 279h1V301h-1zM236 263h1V280h-1zM237 279h1V292h-1zM238 271h1V280h-1zM239 279h1V284h-1zM240 279h1V281h-1zM241 274h1V280h-1zM242 279h1V289h-1zM243 266h1V280h-1zM244 279h1V298h-1zM245 258h1V280h-1zM246 279h1V307h-1zM247 249h1V280h-1zM248 279h1V315h-1zM249 241h1V280h-1zM250 279h1V324h-1zM251 233h1V280h-1zM252 279h1V332h-1zM253 225h1V280h-1zM254 279h1V341h-1zM255 216h1V280h-1zM256 279h1V350h-1zM257 209h1V280h-1zM258 279h1V353h-1zM259 209h1V280h-1zM260 279h1V353h-1zM261 209h1V280h-1zM262 279h1V353h-1zM263 209h1V280h-1zM264 279h1V353h-1zM265 211h1V280h-1zM266 279h1V346h-1zM267 220h1V280h-1zM268 279h1V338h-1zM269 228h1V280h-1zM270 279h1V329h-1zM271 236h1V280h-1zM272 279h1V320h-1zM273 244h1V280h-1zM274 279h1V312h-1zM275 253h1V280h-1zM276 279h1V303h-1zM277 261h1V280h-1zM278 279h1V294h-1zM279 269h1V280h-1zM280 279h1V286h-1zM281 278h1V280h-1zM282 276h1V280h-1zM283 279h1V287h-1zM284 268h1V280h-1zM285 279h1V296h-1zM286 260h1V280h-1zM287 279h1V304h-1zM288 251h1V280h-1zM289 279h1V313h-1zM290 243h1V280h-1zM291 279h1V322h-1zM292 235h1V280h-1zM293 279h1V330h-1zM294 227h1V280h-1zM295 279h1V339h-1zM296 218h1V280h-1zM297 279h1V348h-1zM298 210h1V280h-1zM299 279h1V353h-1zM300 209h1V280h-1zM301 279h1V353h-1zM302 209h1V280h-1zM303 279h1V353h-1zM304 209h1V280h-1zM305 279h1V353h-1zM306 209h1V280h-1zM307 279h1V350h-1zM308 216h1V280h-1zM309 279h1V342h-1zM310 224h1V280h-1zM311 279h1V333h-1zM312 232h1V280h-1zM313 279h1V324h-1zM314 241h1V280h-1zM315 279h1V316h-1zM316 249h1V280h-1zM317 279h1V307h-1zM318 257h1V280h-1zM319 279h1V298h-1zM320 266h1V280h-1zM321 279h1V290h-1zM322 274h1V280h-1zM323 278h1V280h-1zM324 279h1V283h-1zM325 272h1V280h-1zM326 279h1V292h-1zM327 263h1V280h-1zM328 279h1V301h-1zM329 255h1V280h-1zM330 279h1V309h-1zM331 247h1V280h-1zM332 279h1V318h-1zM333 239h1V280h-1zM334 279h1V326h-1zM335 230h1V280h-1zM336 279h1V335h-1zM337 222h1V280h-1zM338 279h1V344h-1zM339 214h1V280h-1zM340 279h1V352h-1zM341 209h1V280h-1zM342 279h1V353h-1zM343 209h1V280h-1zM344 279h1V353h-1zM345 209h1V280h-1zM346 279h1V353h-1zM347 209h1V280h-1zM348 279h1V353h-1zM349 213h1V280h-1zM350 279h1V345h-1zM351 221h1V280h-1zM352 279h1V336h-1zM353 229h1V280h-1zM354 279h1V328h-1zM355 237h1V280h-1zM356 279h1V319h-1zM357 246h1V280h-1zM358 279h1V310h-1zM359 254h1V280h-1zM360 279h1V302h-1zM361 262h1V280h-1zM362 279h1V293h-1zM363 271h1V280h-1zM364 279h1V285h-1zM365 279h1V280h-1zM366 275h1V280h-1zM367 279h1V288h-1zM368 267h1V280h-1zM369 279h1V297h-1zM370 258h1V280h-1zM371 279h1V306h-1zM372 250h1V280h-1zM373 279h1V314h-1zM374 242h1V280h-1zM375 279h1V323h-1zM376 234h1V280h-1zM377 279h1V332h-1zM378 225h1V280h-1zM379 279h1V340h-1zM380 217h1V280h-1zM381 279h1V349h-1zM382 209h1V280h-1zM383 279h1V353h-1zM384 209h1V280h-1zM385 279h1V353h-1zM386 209h1V280h-1zM387 279h1V353h-1zM388 209h1V280h-1zM389 279h1V353h-1zM390 210h1V280h-1zM391 279h1V347h-1zM392 219h1V280h-1zM393 279h1V339h-1zM394 227h1V280h-1zM395 279h1V330h-1zM396 235h1V280h-1zM397 279h1V321h-1zM398 243h1V280h-1zM399 279h1V313h-1zM400 252h1V280h-1zM401 279h1V304h-1zM402 260h1V280h-1zM403 279h1V296h-1zM404 268h1V280h-1zM405 279h1V287h-1zM406 277h1V280h-1zM407 277h1V280h-1zM408 279h1V286h-1zM409 269h1V280h-1zM410 279h1V295h-1zM411 261h1V280h-1zM412 279h1V303h-1zM413 252h1V280h-1zM414 279h1V312h-1zM415 244h1V280h-1zM416 279h1V321h-1zM417 236h1V280h-1zM418 279h1V329h-1zM419 228h1V280h-1zM420 279h1V338h-1zM421 219h1V280h-1zM422 279h1V347h-1zM423 211h1V280h-1zM424 279h1V353h-1zM425 209h1V280h-1zM426 279h1V353h-1zM427 209h1V280h-1zM428 279h1V353h-1zM429 209h1V280h-1zM430 279h1V353h-1zM431 209h1V280h-1zM432 279h1V352h-1zM433 214h1V280h-1zM434 279h1V343h-1zM435 223h1V280h-1zM436 279h1V334h-1zM437 231h1V280h-1zM438 279h1V326h-1zM439 239h1V280h-1zM440 279h1V317h-1zM441 248h1V280h-1zM442 279h1V309h-1zM443 256h1V280h-1zM444 279h1V300h-1zM445 264h1V280h-1zM446 279h1V291h-1zM447 272h1V280h-1zM448 279h1V283h-1zM449 279h1V282h-1zM450 273h1V280h-1zM451 279h1V290h-1zM452 265h1V280h-1zM453 279h1V299h-1zM454 257h1V280h-1zM455 279h1V308h-1zM456 248h1V280h-1zM457 279h1V316h-1zM458 240h1V280h-1zM459 279h1V325h-1zM460 232h1V280h-1zM461 279h1V334h-1zM462 223h1V280h-1zM463 279h1V342h-1zM464 215h1V280h-1zM465 279h1V351h-1zM466 209h1V280h-1zM467 279h1V353h-1zM468 209h1V280h-1zM469 279h1V353h-1zM470 209h1V280h-1zM471 279h1V353h-1zM472 209h1V280h-1zM473 279h1V353h-1zM474 211h1V280h-1zM475 279h1V346h-1zM476 220h1V280h-1zM477 279h1V338h-1zM478 228h1V280h-1zM479 279h1V329h-1zM480 236h1V280h-1zM481 279h1V320h-1zM482 244h1V280h-1zM483 279h1V312h-1zM484 253h1V280h-1zM485 279h1V303h-1zM486 261h1V280h-1zM487 279h1V294h-1zM488 269h1V280h-1zM489 279h1V286h-1zM490 278h1V280h-1zM491 276h1V280h-1zM492 279h1V287h-1zM493 268h1V280h-1zM494 279h1V296h-1zM495 260h1V280h-1zM496 279h1V304h-1zM497 251h1V280h-1zM498 279h1V313h-1zM499 243h1V280h-1zM500 279h1V322h-1zM501 235h1V280h-1zM502 279h1V330h-1zM503 227h1V280h-1zM504 279h1V339h-1zM505 218h1V280h-1zM506 279h1V348h-1zM507 210h1V280h-1zM508 279h1V353h-1zM509 209h1V280h-1zM510 279h1V353h-1zM511 209h1V280h-1zM512 279h1V353h-1zM513 209h1V280h-1zM514 279h1V353h-1zM515 211h1V280h-1zM516 279h1V347h-1zM517 219h1V280h-1zM518 279h1V338h-1zM519 227h1V280h-1zM520 279h1V330h-1zM521 236h1V280h-1zM522 279h1V321h-1zM523 244h1V280h-1zM524 279h1V312h-1zM525 252h1V280h-1zM526 279h1V304h-1zM527 260h1V280h-1zM528 279h1V295h-1zM529 269h1V280h-1zM530 279h1V286h-1zM531 277h1V280h-1zM532 277h1V280h-1zM533 279h1V286h-1zM534 269h1V280h-1zM535 279h1V295h-1zM536 260h1V280h-1zM537 279h1V304h-1zM538 252h1V280h-1zM539 279h1V312h-1zM540 244h1V280h-1zM541 279h1V321h-1zM542 236h1V280h-1zM543 279h1V330h-1zM544 227h1V280h-1zM545 279h1V338h-1zM546 219h1V280h-1zM547 279h1V347h-1zM548 211h1V280h-1zM549 279h1V353h-1zM550 209h1V280h-1zM551 279h1V353h-1zM552 209h1V280h-1zM553 279h1V353h-1zM554 209h1V280h-1zM555 279h1V353h-1zM556 209h1V280h-1zM557 279h1V349h-1zM558 217h1V280h-1zM559 279h1V340h-1zM560 226h1V280h-1zM561 279h1V331h-1zM562 234h1V280h-1zM563 279h1V323h-1zM564 242h1V280h-1zM565 279h1V314h-1zM566 250h1V280h-1zM567 279h1V305h-1zM568 259h1V280h-1zM569 279h1V297h-1zM570 267h1V280h-1zM571 279h1V288h-1zM572 275h1V280h-1zM573 279h1V280h-1zM574 279h1V285h-1zM575 270h1V280h-1zM576 279h1V293h-1zM577 262h1V280h-1zM578 279h1V302h-1zM579 254h1V280h-1zM580 279h1V311h-1zM581 245h1V280h-1zM582 279h1V319h-1zM583 237h1V280h-1zM584 279h1V328h-1zM585 229h1V280h-1zM586 279h1V337h-1zM587 221h1V280h-1zM588 279h1V345h-1zM589 212h1V280h-1zM590 279h1V353h-1zM591 209h1V280h-1zM592 279h1V353h-1zM593 209h1V280h-1zM594 279h1V353h-1zM595 209h1V280h-1zM596 279h1V353h-1zM597 209h1V280h-1zM598 279h1V350h-1zM599 216h1V280h-1zM600 279h1V341h-1zM601 225h1V280h-1zM602 279h1V332h-1zM603 233h1V280h-1zM604 279h1V324h-1zM605 241h1V280h-1zM606 279h1V315h-1zM607 249h1V280h-1zM608 279h1V307h-1zM609 258h1V280h-1zM610 279h1V298h-1zM611 266h1V280h-1zM612 279h1V289h-1zM613 274h1V280h-1zM614 279h1V281h-1zM615 279h1V284h-1zM616 271h1V280h-1zM617 279h1V292h-1zM618 263h1V280h-1zM619 279h1V301h-1zM620 255h1V280h-1zM621 279h1V310h-1zM622 246h1V280h-1zM623 279h1V318h-1zM624 238h1V280h-1zM625 279h1V327h-1zM626 230h1V280h-1zM627 279h1V336h-1zM628 222h1V280h-1zM629 279h1V344h-1zM630 213h1V280h-1zM631 279h1V353h-1zM632 209h1V280h-1zM633 279h1V353h-1zM634 209h1V280h-1zM635 279h1V353h-1zM636 209h1V280h-1zM637 279h1V353h-1zM638 209h1V280h-1zM639 279h1V350h-1zM640 216h1V280h-1zM641 279h1V341h-1zM642 225h1V280h-1zM643 279h1V332h-1zM644 233h1V280h-1zM645 279h1V324h-1zM646 241h1V280h-1zM647 279h1V315h-1zM648 249h1V280h-1zM649 279h1V307h-1zM650 258h1V280h-1zM651 279h1V298h-1zM652 266h1V280h-1zM653 279h1V289h-1zM654 274h1V280h-1zM655 279h1V281h-1zM656 279h1V284h-1zM657 271h1V280h-1zM658 279h1V292h-1zM659 263h1V280h-1zM660 279h1V301h-1zM661 255h1V280h-1zM662 279h1V310h-1zM663 246h1V280h-1zM664 279h1V318h-1zM665 238h1V280h-1zM666 279h1V327h-1zM667 230h1V280h-1zM668 279h1V336h-1zM669 222h1V280h-1zM670 279h1V344h-1zM671 213h1V280h-1zM672 287h1V370h-1zM673 210h1V288h-1zM674 287h1V370h-1zM675 210h1V288h-1zM676 287h1V370h-1zM677 210h1V288h-1zM678 287h1V370h-1zM679 210h1V288h-1zM680 287h1V370h-1zM681 214h1V288h-1zM682 287h1V361h-1zM683 223h1V288h-1zM684 287h1V351h-1zM685 233h1V288h-1zM686 287h1V341h-1zM687 242h1V288h-1zM688 287h1V331h-1zM689 251h1V288h-1zM690 287h1V322h-1zM691 260h1V288h-1zM692 287h1V312h-1zM693 269h1V288h-1zM694 287h1V302h-1zM695 278h1V288h-1zM696 287h1V293h-1zM697 287h1V288h-1zM698 282h1V288h-1zM699 287h1V298h-1zM700 273h1V288h-1zM701 287h1V308h-1zM702 264h1V288h-1zM703 287h1V317h-1zM704 255h1V288h-1zM705 287h1V327h-1zM706 246h1V288h-1zM707 287h1V337h-1zM708 237h1V288h-1zM709 287h1V346h-1zM710 228h1V288h-1zM711 287h1V356h-1zM712 218h1V288h-1zM713 287h1V366h-1zM714 210h1V288h-1zM715 287h1V370h-1zM716 210h1V288h-1zM717 287h1V370h-1zM718 210h1V288h-1zM719 287h1V370h-1zM720 210h1V288h-1zM721 287h1V370h-1zM722 210h1V288h-1zM723 287h1V365h-1zM724 220h1V288h-1zM725 287h1V355h-1zM726 229h1V288h-1zM727 287h1V345h-1zM728 238h1V288h-1zM729 287h1V336h-1zM730 247h1V288h-1zM731 287h1V326h-1zM732 256h1V288h-1zM733 287h1V316h-1zM734 265h1V288h-1zM735 287h1V306h-1zM736 274h1V288h-1zM737 287h1V297h-1zM738 283h1V288h-1zM739 286h1V288h-1zM740 287h1V294h-1zM741 277h1V288h-1zM742 287h1V304h-1zM743 268h1V288h-1zM744 287h1V313h-1zM745 259h1V288h-1zM746 287h1V323h-1zM747 250h1V288h-1zM748 287h1V333h-1zM749 241h1V288h-1zM750 287h1V342h-1zM751 231h1V288h-1zM752 287h1V352h-1zM753 222h1V288h-1zM754 287h1V362h-1zM755 213h1V288h-1zM756 287h1V370h-1zM757 210h1V288h-1zM758 287h1V370h-1zM759 210h1V288h-1zM760 287h1V370h-1zM761 210h1V288h-1zM762 287h1V370h-1zM763 210h1V288h-1zM764 287h1V369h-1zM765 216h1V288h-1zM766 287h1V359h-1zM767 225h1V288h-1zM768 287h1V349h-1zM769 234h1V288h-1zM770 287h1V339h-1zM771 243h1V288h-1zM772 287h1V330h-1zM773 252h1V288h-1zM774 287h1V320h-1zM775 261h1V288h-1zM776 287h1V310h-1zM777 271h1V288h-1zM778 287h1V301h-1zM779 280h1V288h-1zM780 287h1V291h-1zM781 287h1V290h-1zM782 281h1V288h-1zM783 287h1V300h-1zM784 272h1V288h-1zM785 287h1V309h-1zM786 262h1V288h-1zM787 287h1V319h-1zM788 253h1V288h-1zM789 287h1V329h-1zM790 244h1V288h-1zM791 287h1V338h-1zM792 235h1V288h-1zM793 287h1V348h-1zM794 226h1V288h-1zM795 287h1V358h-1zM796 217h1V288h-1zM797 287h1V368h-1zM798 210h1V288h-1zM799 287h1V370h-1zM800 210h1V288h-1zM801 287h1V370h-1zM802 210h1V288h-1zM803 287h1V370h-1zM804 210h1V288h-1zM805 287h1V370h-1zM806 213h1V288h-1zM807 287h1V362h-1zM808 222h1V288h-1zM809 287h1V353h-1zM810 231h1V288h-1zM811 287h1V343h-1zM812 240h1V288h-1zM813 287h1V333h-1zM814 249h1V288h-1zM815 287h1V324h-1zM816 258h1V288h-1zM817 287h1V314h-1zM818 267h1V288h-1zM819 287h1V304h-1zM820 276h1V288h-1zM821 287h1V295h-1zM822 285h1V288h-1zM823 284h1V288h-1zM824 287h1V296h-1zM825 275h1V288h-1zM826 287h1V306h-1zM827 266h1V288h-1zM828 287h1V315h-1zM829 257h1V288h-1zM830 287h1V325h-1zM831 248h1V288h-1zM832 287h1V335h-1zM833 238h1V288h-1zM834 287h1V345h-1zM835 229h1V288h-1zM836 287h1V354h-1zM837 220h1V288h-1zM838 287h1V364h-1zM839 211h1V288h-1zM840 287h1V370h-1zM841 210h1V288h-1z"/><path fill="#ff0000" d="M26 277h1V281h-1zM27 278h1V281h-1zM28 277h1V280h-1zM29 277h1V281h-1zM30 276h1V281h-1zM31 276h1V281h-1zM32 277h1V281h-1zM33 278h1V282h-1zM34 277h1V281h-1zM35 277h1V280h-1zM36 278h1V281h-1zM37 276h1V281h-1zM38 277h1V280h-1zM39 277h1V280h-1zM40 276h1V282h-1zM41 277h1V281h-1zM42 277h1V280h-1zM43 277h1V281h-1zM44 278h1V281h-1zM45 276h1V281h-1zM46 276h1V281h-1zM47 276h1V281h-1zM57 277h1V280h-1zM58 276h1V281h-1zM59 277h1V281h-1zM60 276h1V281h-1zM61 276h1V281h-1zM62 276h1V281h-1zM63 278h1V280h-1zM64 278h1V281h-1zM65 278h1V280h-1zM66 278h1V281h-1zM67 277h1V281h-1zM68 277h1V281h-1zM69 277h1V280h-1zM70 277h1V280h-1zM71 278h1V281h-1zM72 278h1V281h-1zM73 276h1V281h-1zM74 277h1V280h-1zM75 278h1V281h-1zM76 277h1V281h-1zM77 278h1V282h-1zM78 277h1V281h-1zM79 276h1V280h-1zM80 277h1V281h-1zM81 277h1V280h-1zM82 278h1V280h-1zM83 278h1V281h-1zM84 277h1V281h-1zM85 278h1V281h-1zM86 277h1V281h-1zM87 276h1V282h-1zM88 277h1V282h-1zM89 277h1V281h-1zM90 278h1V281h-1zM99 277h1V280h-1zM100 277h1V282h-1zM101 277h1V281h-1zM102 277h1V281h-1zM103 277h1V282h-1zM104 278h1V282h-1zM105 277h1V281h-1zM106 278h1V282h-1zM107 276h1V281h-1zM108 277h1V282h-1zM109 276h1V281h-1zM110 278h1V281h-1zM111 278h1V281h-1zM112 277h1V281h-1zM113 277h1V281h-1zM114 277h1V281h-1zM115 277h1V282h-1zM116 276h1V281h-1zM117 277h1V281h-1zM118 277h1V281h-1zM119 278h1V280h-1zM120 277h1V280h-1zM121 276h1V281h-1zM122 277h1V280h-1zM123 276h1V281h-1zM124 278h1V280h-1zM125 278h1V282h-1zM126 278h1V282h-1zM127 277h1V282h-1zM128 278h1V281h-1zM129 277h1V281h-1zM130 277h1V282h-1zM131 277h1V281h-1zM141 277h1V280h-1zM142 277h1V281h-1zM143 277h1V280h-1zM144 277h1V280h-1zM145 277h1V281h-1zM146 276h1V281h-1zM147 277h1V281h-1zM148 276h1V282h-1zM149 277h1V281h-1zM150 277h1V280h-1zM151 277h1V282h-1zM152 277h1V281h-1zM153 278h1V282h-1zM154 278h1V282h-1zM155 277h1V281h-1zM156 277h1V281h-1zM157 277h1V281h-1zM158 278h1V281h-1zM159 276h1V281h-1zM160 277h1V280h-1zM161 277h1V281h-1zM162 276h1V281h-1zM163 276h1V281h-1zM164 277h1V281h-1zM165 276h1V281h-1zM166 277h1V281h-1zM167 277h1V280h-1zM168 276h1V280h-1zM169 277h1V281h-1zM170 276h1V281h-1zM171 277h1V282h-1zM172 277h1V281h-1zM182 276h1V282h-1zM183 277h1V281h-1zM184 277h1V281h-1zM185 278h1V281h-1zM186 277h1V280h-1zM187 277h1V282h-1zM188 277h1V281h-1zM189 277h1V281h-1zM190 277h1V281h-1zM191 278h1V281h-1zM192 277h1V281h-1zM193 278h1V280h-1zM194 276h1V281h-1zM195 278h1V281h-1zM196 277h1V281h-1zM197 278h1V281h-1zM198 278h1V281h-1zM199 278h1V281h-1zM200 277h1V282h-1zM201 278h1V282h-1zM202 277h1V281h-1zM203 277h1V281h-1zM204 277h1V281h-1zM205 276h1V282h-1zM206 277h1V280h-1zM207 276h1V282h-1zM208 277h1V281h-1zM209 276h1V280h-1zM210 277h1V281h-1zM211 277h1V281h-1zM212 276h1V281h-1zM213 278h1V281h-1zM214 277h1V281h-1zM224 277h1V281h-1zM225 277h1V280h-1zM226 277h1V280h-1zM227 277h1V281h-1zM228 276h1V282h-1zM229 277h1V281h-1zM230 277h1V282h-1zM231 276h1V280h-1zM232 278h1V280h-1zM233 277h1V280h-1zM234 277h1V280h-1zM235 276h1V281h-1zM236 278h1V281h-1zM237 276h1V281h-1zM238 277h1V281h-1zM239 277h1V282h-1zM240 276h1V281h-1zM241 276h1V281h-1zM242 277h1V280h-1zM243 276h1V280h-1zM244 278h1V281h-1zM245 276h1V281h-1zM246 277h1V281h-1zM247 277h1V281h-1zM248 277h1V280h-1zM249 278h1V280h-1zM250 277h1V281h-1zM251 278h1V281h-1zM252 276h1V280h-1zM253 276h1V280h-1zM254 277h1V281h-1zM255 278h1V280h-1zM256 276h1V282h-1zM266 276h1V281h-1zM267 276h1V281h-1zM268 276h1V281h-1zM269 278h1V281h-1zM270 278h1V281h-1zM271 278h1V282h-1zM272 277h1V281h-1zM273 277h1V282h-1zM274 277h1V281h-1zM275 277h1V281h-1zM276 277h1V281h-1zM277 277h1V281h-1zM278 277h1V282h-1zM279 277h1V281h-1zM280 278h1V282h-1zM281 277h1V281h-1zM282 277h1V282h-1zM283 276h1V282h-1zM284 277h1V282h-1zM285 277h1V281h-1zM286 277h1V281h-1zM287 277h1V281h-1zM288 277h1V280h-1zM289 278h1V282h-1zM290 277h1V282h-1zM291 277h1V280h-1zM292 276h1V281h-1zM293 276h1V281h-1zM294 277h1V281h-1zM295 277h1V281h-1zM296 277h1V281h-1zM297 277h1V281h-1zM307 277h1V281h-1zM308 278h1V281h-1zM309 278h1V281h-1zM310 276h1V280h-1zM311 276h1V282h-1zM312 277h1V281h-1zM313 277h1V281h-1zM314 277h1V282h-1zM315 277h1V281h-1zM316 277h1V281h-1zM317 277h1V281h-1zM318 276h1V281h-1zM319 277h1V281h-1zM320 277h1V282h-1zM321 277h1V281h-1zM322 276h1V282h-1zM323 277h1V280h-1zM324 277h1V281h-1zM325 276h1V281h-1zM326 277h1V281h-1zM327 277h1V281h-1zM328 277h1V281h-1zM329 277h1V281h-1zM330 276h1V281h-1zM331 277h1V282h-1zM332 276h1V281h-1zM333 277h1V281h-1zM334 277h1V281h-1zM335 277h1V281h-1zM336 277h1V280h-1zM337 276h1V281h-1zM338 276h1V282h-1zM339 277h1V282h-1zM349 277h1V282h-1zM350 278h1V280h-1zM351 278h1V280h-1zM352 277h1V281h-1zM353 277h1V281h-1zM354 277h1V281h-1zM355 278h1V281h-1zM356 277h1V281h-1zM357 277h1V281h-1zM358 277h1V282h-1zM359 277h1V281h-1zM360 277h1V282h-1zM361 276h1V281h-1zM362 276h1V281h-1zM363 277h1V281h-1zM364 278h1V281h-1zM365 277h1V281h-1zM366 278h1V281h-1zM367 277h1V281h-1zM368 277h1V280h-1zM369 277h1V281h-1zM370 277h1V281h-1zM371 277h1V281h-1zM372 277h1V281h-1zM373 277h1V282h-1zM374 277h1V282h-1zM375 277h1V280h-1zM376 277h1V281h-1zM377 276h1V281h-1zM378 277h1V281h-1zM379 277h1V281h-1zM380 278h1V280h-1zM381 277h1V282h-1zM391 277h1V281h-1zM392 277h1V281h-1zM393 277h1V280h-1zM394 276h1V281h-1zM395 276h1V282h-1zM396 277h1V282h-1zM397 277h1V281h-1zM398 276h1V281h-1zM399 277h1V280h-1zM400 278h1V280h-1zM401 277h1V280h-1zM402 276h1V280h-1zM403 277h1V280h-1zM404 277h1V281h-1zM405 277h1V281h-1zM406 277h1V281h-1zM407 277h1V282h-1zM408 278h1V280h-1zM409 277h1V281h-1zM410 276h1V281h-1zM411 278h1V281h-1zM412 277h1V282h-1zM413 277h1V280h-1zM414 276h1V281h-1zM415 276h1V281h-1zM416 278h1V281h-1zM417 277h1V281h-1zM418 277h1V281h-1zM419 277h1V282h-1zM420 278h1V282h-1zM421 277h1V282h-1zM422 277h1V281h-1zM423 276h1V281h-1zM432 277h1V280h-1zM433 277h1V281h-1zM434 277h1V281h-1zM435 276h1V280h-1zM436 277h1V281h-1zM437 278h1V281h-1zM438 278h1V281h-1zM439 277h1V281h-1zM440 278h1V281h-1zM441 276h1V281h-1zM442 278h1V282h-1zM443 278h1V281h-1zM444 276h1V281h-1zM445 277h1V281h-1zM446 278h1V281h-1zM447 277h1V282h-1zM448 277h1V280h-1zM449 278h1V281h-1zM450 278h1V281h-1zM451 277h1V281h-1zM452 276h1V281h-1zM453 277h1V280h-1zM454 277h1V281h-1zM455 277h1V280h-1zM456 276h1V281h-1zM457 277h1V281h-1zM458 277h1V282h-1zM459 278h1V282h-1zM460 277h1V281h-1zM461 277h1V282h-1zM462 278h1V282h-1zM463 277h1V281h-1zM464 278h1V281h-1zM465 278h1V281h-1zM475 277h1V281h-1zM476 277h1V281h-1zM477 277h1V282h-1zM478 277h1V281h-1zM479 277h1V281h-1zM480 277h1V281h-1zM481 277h1V282h-1zM482 278h1V280h-1zM483 277h1V281h-1zM484 278h1V281h-1zM485 277h1V281h-1zM486 277h1V281h-1zM487 277h1V281h-1zM488 277h1V281h-1zM489 278h1V280h-1zM490 277h1V281h-1zM491 277h1V282h-1zM492 277h1V282h-1zM493 276h1V280h-1zM494 277h1V281h-1zM495 277h1V282h-1zM496 278h1V280h-1zM497 277h1V281h-1zM498 278h1V281h-1zM499 276h1V281h-1zM500 277h1V282h-1zM501 278h1V281h-1zM502 277h1V281h-1zM503 277h1V281h-1zM504 278h1V281h-1zM505 277h1V282h-1zM506 276h1V282h-1zM516 277h1V281h-1zM517 277h1V281h-1zM518 277h1V280h-1zM519 278h1V280h-1zM520 277h1V282h-1zM521 277h1V282h-1zM522 278h1V281h-1zM523 276h1V281h-1zM524 277h1V281h-1zM525 277h1V281h-1zM526 276h1V281h-1zM527 277h1V281h-1zM528 277h1V281h-1zM529 276h1V281h-1zM530 277h1V282h-1zM531 278h1V282h-1zM532 276h1V281h-1zM533 278h1V281h-1zM534 277h1V281h-1zM535 278h1V281h-1zM536 276h1V281h-1zM537 277h1V280h-1zM538 276h1V281h-1zM539 277h1V281h-1zM540 277h1V282h-1zM541 278h1V282h-1zM542 278h1V281h-1zM543 277h1V281h-1zM544 277h1V282h-1zM545 278h1V280h-1zM546 278h1V281h-1zM547 277h1V282h-1zM557 276h1V282h-1zM558 278h1V281h-1zM559 277h1V281h-1zM560 277h1V281h-1zM561 276h1V281h-1zM562 278h1V281h-1zM563 276h1V281h-1zM564 277h1V281h-1zM565 277h1V280h-1zM566 277h1V281h-1zM567 277h1V281h-1zM568 276h1V282h-1zM569 277h1V281h-1zM570 277h1V281h-1zM571 276h1V280h-1zM572 277h1V282h-1zM573 277h1V281h-1zM574 276h1V281h-1zM575 277h1V280h-1zM576 277h1V282h-1zM577 277h1V281h-1zM578 277h1V282h-1zM579 276h1V281h-1zM580 276h1V281h-1zM581 277h1V282h-1zM582 277h1V281h-1zM583 277h1V281h-1zM584 278h1V282h-1zM585 277h1V281h-1zM586 277h1V282h-1zM587 277h1V281h-1zM588 278h1V281h-1zM589 277h1V282h-1zM599 277h1V282h-1zM600 277h1V281h-1zM601 277h1V280h-1zM602 277h1V281h-1zM603 278h1V281h-1zM604 277h1V281h-1zM605 277h1V282h-1zM606 277h1V281h-1zM607 277h1V281h-1zM608 276h1V282h-1zM609 276h1V281h-1zM610 277h1V282h-1zM611 278h1V281h-1zM612 276h1V281h-1zM613 278h1V281h-1zM614 277h1V281h-1zM615 276h1V281h-1zM616 278h1V281h-1zM617 277h1V281h-1zM618 278h1V282h-1zM619 277h1V281h-1zM620 277h1V281h-1zM621 277h1V281h-1zM622 277h1V280h-1zM623 278h1V281h-1zM624 277h1V282h-1zM625 277h1V281h-1zM626 278h1V281h-1zM627 277h1V281h-1zM628 277h1V281h-1zM629 277h1V281h-1zM630 278h1V281h-1zM639 276h1V281h-1zM640 278h1V281h-1zM641 277h1V282h-1zM642 277h1V281h-1zM643 278h1V281h-1zM644 277h1V280h-1zM645 278h1V281h-1zM646 277h1V281h-1zM647 278h1V281h-1zM648 278h1V281h-1zM649 278h1V281h-1zM650 278h1V281h-1zM651 278h1V281h-1zM652 277h1V281h-1zM653 277h1V281h-1zM654 276h1V281h-1zM655 277h1V281h-1zM656 277h1V280h-1zM657 277h1V281h-1zM658 277h1V281h-1zM659 277h1V281h-1zM660 276h1V281h-1zM661 277h1V281h-1zM662 277h1V282h-1zM663 278h1V282h-1zM664 277h1V282h-1zM665 278h1V281h-1zM666 278h1V281h-1zM667 277h1V281h-1zM668 277h1V280h-1zM669 277h1V281h-1zM670 277h1V282h-1zM671 277h1V280h-1zM681 285h1V288h-1zM682 285h1V290h-1zM683 285h1V289h-1zM684 286h1V289h-1zM685 285h1V290h-1zM686 284h1V288h-1zM687 285h1V289h-1zM688 286h1V289h-1zM689 285h1V289h-1zM690 284h1V289h-1zM691 285h1V289h-1zM692 286h1V290h-1zM693 286h1V289h-1zM694 285h1V289h-1zM695 286h1V290h-1zM696 284h1V289h-1zM697 284h1V289h-1zM698 285h1V289h-1zM699 285h1V288h-1zM700 285h1V289h-1zM701 285h1V289h-1zM702 285h1V290h-1zM703 285h1V289h-1zM704 285h1V289h-1zM705 285h1V289h-1zM706 284h1V289h-1zM707 285h1V289h-1zM708 286h1V289h-1zM709 285h1V288h-1zM710 284h1V289h-1zM711 285h1V290h-1zM712 285h1V289h-1zM713 285h1V290h-1zM723 285h1V290h-1zM724 285h1V289h-1zM725 285h1V289h-1zM726 285h1V289h-1zM727 285h1V288h-1zM728 284h1V289h-1zM729 285h1V289h-1zM730 284h1V289h-1zM731 286h1V288h-1zM732 285h1V289h-1zM733 285h1V288h-1zM734 284h1V289h-1zM735 285h1V289h-1zM736 285h1V289h-1zM737 285h1V289h-1zM738 285h1V289h-1zM739 285h1V288h-1zM740 285h1V289h-1zM741 285h1V290h-1zM742 285h1V289h-1zM743 284h1V289h-1zM744 285h1V289h-1zM745 285h1V290h-1zM746 284h1V290h-1zM747 285h1V290h-1zM748 285h1V290h-1zM749 284h1V289h-1zM750 284h1V289h-1zM751 285h1V290h-1zM752 285h1V290h-1zM753 285h1V289h-1zM754 286h1V289h-1zM755 285h1V288h-1zM764 285h1V290h-1zM765 286h1V289h-1zM766 285h1V289h-1zM767 286h1V290h-1zM768 285h1V289h-1zM769 286h1V289h-1zM770 286h1V289h-1zM771 285h1V290h-1zM772 284h1V289h-1zM773 286h1V289h-1zM774 285h1V289h-1zM775 285h1V288h-1zM776 285h1V290h-1zM777 285h1V288h-1zM778 284h1V289h-1zM779 284h1V289h-1zM780 285h1V289h-1zM781 285h1V289h-1zM782 284h1V289h-1zM783 285h1V289h-1zM784 286h1V290h-1zM785 285h1V289h-1zM786 285h1V289h-1zM787 286h1V289h-1zM788 285h1V288h-1zM789 286h1V289h-1zM790 284h1V289h-1zM791 285h1V288h-1zM792 286h1V288h-1zM793 285h1V290h-1zM794 285h1V288h-1zM795 285h1V289h-1zM796 286h1V288h-1zM797 285h1V290h-1zM807 285h1V289h-1zM808 285h1V289h-1zM809 285h1V289h-1zM810 284h1V289h-1zM811 285h1V289h-1zM812 286h1V288h-1zM813 286h1V288h-1zM814 285h1V290h-1zM815 285h1V288h-1zM816 285h1V290h-1zM817 286h1V289h-1zM818 286h1V288h-1zM819 286h1V289h-1zM820 285h1V289h-1zM821 284h1V290h-1zM822 286h1V289h-1zM823 286h1V288h-1zM824 286h1V289h-1zM825 286h1V290h-1zM826 285h1V289h-1zM827 285h1V289h-1zM828 286h1V289h-1zM829 285h1V290h-1zM830 284h1V288h-1zM831 285h1V289h-1zM832 285h1V289h-1zM833 285h1V288h-1zM834 285h1V289h-1zM835 284h1V290h-1zM836 285h1V289h-1zM837 285h1V288h-1zM838 285h1V289h-1z"/><path fill="#ffffff" d="M26 470h3v1h-3zM29 470h1v7h-1zM30 476h1v17h-1zM31 492h1v11h-1zM32 494h1v9h-1zM33 470h1v25h-1zM34 456h1v15h-1zM35 464h1v7h-1zM36 470h12v1h-12zM48 471h3v1h-3zM51 470h15v1h-15zM66 471h2v1h-2zM68 470h15v1h-15zM83 471h2v1h-2zM85 470h13v1h-13zM98 470h1v17h-1zM99 486h1v17h-1zM100 501h1v2h-1zM101 478h1v25h-1zM102 454h1v25h-1zM103 462h1v9h-1zM104 470h13v1h-13zM117 471h3v1h-3zM120 470h15v1h-15zM135 471h2v1h-2zM137 470h15v1h-15zM152 471h2v1h-2zM154 470h13v1h-13zM167 470h1v14h-1zM168 483h1v20h-1zM169 481h1v22h-1zM170 460h1v22h-1zM171 465h1v6h-1zM172 470h13v1h-13zM185 471h2v1h-2zM187 470h15v1h-15zM202 471h2v1h-2zM204 470h431v1h-431zM635 470h1v9h-1zM636 478h1v17h-1zM637 494h1v9h-1zM638 501h2v2h-2zM640 476h1v27h-1zM641 448h1v29h-1zM642 459h1v12h-1zM643 470h20v1h-20zM663 471h3v1h-3zM666 470h24v1h-24zM690 471h2v1h-2zM692 470h19v1h-19zM711 470h1v15h-1zM712 484h1v15h-1zM713 469h1v18h-1zM714 463h1v6h-1zM715 467h1v4h-1zM716 470h26v1h-26zM742 470h1v11h-1zM743 480h1v17h-1zM744 496h1v7h-1zM745 501h2v2h-2zM747 474h1v29h-1zM748 446h1v29h-1zM749 458h1v13h-1zM750 470h22v1h-22zM772 471h2v1h-2zM774 470h24v1h-24zM798 471h2v1h-2zM800 470h22v1h-22zM822 471h2v1h-2zM824 470h18v1h-18z"/><path fill="#ffff00" d="M26 571h12v1h-12zM38 570h1v1h-1zM39 571h14v1h-14zM53 569h1v3h-1zM54 561h1v9h-1zM55 555h1v7h-1zM56 561h1v9h-1zM57 569h1v3h-1zM58 571h64v1h-64zM122 569h1v3h-1zM123 563h1v7h-1zM124 558h1v6h-1zM125 563h1v7h-1zM126 569h1v3h-1zM127 571h48v1h-48zM175 570h1v1h-1zM176 571h14v1h-14zM190 569h1v3h-1zM191 561h1v9h-1zM192 555h1v7h-1zM193 561h1v9h-1zM194 569h1v3h-1zM195 571h63v1h-63zM258 569h1v3h-1zM259 562h1v8h-1zM260 557h1v7h-1zM261 563h1v7h-1zM262 569h1v3h-1zM263 571h50v1h-50zM313 570h1v1h-1zM314 571h14v1h-14zM328 568h1v4h-1zM329 559h1v10h-1zM330 553h1v8h-1zM331 560h1v9h-1zM332 568h1v4h-1zM333 571h53v1h-53zM386 570h1v1h-1zM387 571h16v1h-16zM403 570h1v2h-1zM404 564h1v7h-1zM405 561h1v5h-1zM406 565h1v6h-1zM407 570h1v2h-1zM408 571h58v1h-58zM466 570h1v1h-1zM467 571h17v1h-17zM484 569h1v3h-1zM485 561h1v9h-1zM486 555h1v7h-1zM487 561h1v9h-1zM488 569h1v3h-1zM489 571h64v1h-64zM553 570h1v1h-1zM554 571h19v1h-19zM573 570h1v2h-1zM574 566h1v5h-1zM575 564h1v4h-1zM576 567h1v4h-1zM577 570h1v2h-1zM578 571h71v1h-71zM649 570h1v1h-1zM650 571h24v1h-24zM674 568h1v4h-1zM675 560h1v9h-1zM676 554h1v8h-1zM677 561h1v8h-1zM678 568h1v4h-1zM679 571h78v1h-78zM757 570h1v1h-1zM758 571h23v1h-23zM781 567h1v5h-1zM782 553h1v15h-1zM783 544h1v12h-1zM784 555h1v13h-1zM785 567h1v5h-1zM786 571h56v1h-56z"/><path fill="#00ff00" d="M26 33h1V34h-1zM27 33h1V51h-1zM28 50h1V73h-1zM29 72h1V79h-1zM30 69h1V77h-1zM31 76h1V95h-1zM32 94h1V113h-1zM33 102h1V119h-1zM34 83h1V103h-1zM35 80h1V97h-1zM36 96h1V113h-1zM37 103h1V109h-1zM38 106h1V112h-1zM39 110h1V115h-1zM40 96h1V111h-1zM41 70h1V97h-1zM42 46h1V71h-1zM43 37h1V53h-1zM44 52h1V71h-1zM45 70h1V76h-1zM46 69h1V77h-1zM47 76h1V93h-1zM48 92h1V103h-1zM49 91h1V99h-1zM50 94h1V105h-1zM51 83h1V95h-1zM52 92h1V105h-1zM53 104h1V110h-1zM54 103h1V107h-1zM55 104h1V110h-1zM56 109h1V116h-1zM57 104h1V119h-1zM58 80h1V105h-1zM59 58h1V81h-1zM60 48h1V66h-1zM61 65h1V83h-1zM62 72h1V79h-1zM63 68h1V83h-1zM64 82h1V105h-1zM65 104h1V112h-1zM66 93h1V106h-1zM67 87h1V98h-1zM68 97h1V108h-1zM69 87h1V101h-1zM70 100h1V113h-1zM71 98h1V106h-1zM72 104h1V110h-1zM73 101h1V108h-1zM74 106h1V114h-1zM75 86h1V107h-1zM76 62h1V87h-1zM77 46h1V63h-1zM78 40h1V56h-1zM79 55h1V77h-1zM80 76h1V82h-1zM81 73h1V80h-1zM82 79h1V97h-1zM83 96h1V113h-1zM84 103h1V119h-1zM85 86h1V104h-1zM86 83h1V95h-1zM87 94h1V109h-1zM88 108h1V114h-1zM89 103h1V109h-1zM90 106h1V112h-1zM91 110h1V115h-1zM92 96h1V111h-1zM93 70h1V97h-1zM94 45h1V71h-1zM95 36h1V52h-1zM96 51h1V71h-1zM97 70h1V76h-1zM98 69h1V77h-1zM99 76h1V94h-1zM100 93h1V104h-1zM101 92h1V99h-1zM102 94h1V106h-1zM103 84h1V95h-1zM104 93h1V108h-1zM105 107h1V113h-1zM106 105h1V109h-1zM107 106h1V112h-1zM108 111h1V119h-1zM109 106h1V122h-1zM110 81h1V107h-1zM111 58h1V82h-1zM112 47h1V65h-1zM113 64h1V82h-1zM114 63h1V73h-1zM115 68h1V87h-1zM116 86h1V107h-1zM117 106h1V116h-1zM118 96h1V107h-1zM119 100h1V105h-1zM120 99h1V105h-1zM121 104h1V110h-1zM122 102h1V107h-1zM123 106h1V115h-1zM124 114h1V119h-1zM125 110h1V115h-1zM126 98h1V116h-1zM127 69h1V99h-1zM128 52h1V70h-1zM129 46h1V63h-1zM130 62h1V80h-1zM131 76h1V79h-1zM132 78h1V90h-1zM133 89h1V107h-1zM134 103h1V115h-1zM135 92h1V104h-1zM136 91h1V98h-1zM137 85h1V100h-1zM138 99h1V114h-1zM139 109h1V113h-1zM140 110h1V115h-1zM141 106h1V112h-1zM142 98h1V117h-1zM143 70h1V99h-1zM144 52h1V71h-1zM145 45h1V53h-1zM146 45h1V64h-1zM147 63h1V82h-1zM148 62h1V73h-1zM149 68h1V87h-1zM150 86h1V109h-1zM151 107h1V118h-1zM152 97h1V108h-1zM153 102h1V107h-1zM154 100h1V107h-1zM155 106h1V112h-1zM156 104h1V109h-1zM157 108h1V117h-1zM158 116h1V121h-1zM159 111h1V117h-1zM160 98h1V118h-1zM161 64h1V99h-1zM162 45h1V65h-1zM163 39h1V60h-1zM164 59h1V80h-1zM165 58h1V69h-1zM166 65h1V87h-1zM167 86h1V111h-1zM168 108h1V121h-1zM169 97h1V109h-1zM170 102h1V109h-1zM171 102h1V109h-1zM172 108h1V115h-1zM173 105h1V111h-1zM174 110h1V121h-1zM175 120h1V125h-1zM176 115h1V121h-1zM177 102h1V122h-1zM178 72h1V103h-1zM179 53h1V73h-1zM180 47h1V67h-1zM181 66h1V85h-1zM182 80h1V83h-1zM183 82h1V96h-1zM184 95h1V115h-1zM185 110h1V123h-1zM186 98h1V111h-1zM187 98h1V105h-1zM188 91h1V107h-1zM189 106h1V123h-1zM190 118h1V121h-1zM191 118h1V124h-1zM192 114h1V121h-1zM193 105h1V126h-1zM194 74h1V106h-1zM195 56h1V75h-1zM196 48h1V57h-1zM197 48h1V67h-1zM198 66h1V85h-1zM199 80h1V83h-1zM200 82h1V96h-1zM201 95h1V115h-1zM202 110h1V123h-1zM203 98h1V111h-1zM204 98h1V105h-1zM205 91h1V107h-1zM206 106h1V122h-1zM207 117h1V121h-1zM208 118h1V123h-1zM209 113h1V119h-1zM210 104h1V125h-1zM211 75h1V105h-1zM212 57h1V76h-1zM213 49h1V58h-1zM214 49h1V63h-1zM215 62h1V81h-1zM216 80h1V85h-1zM217 79h1V86h-1zM218 85h1V101h-1zM219 100h1V111h-1zM220 99h1V107h-1zM221 102h1V113h-1zM222 93h1V103h-1zM223 101h1V114h-1zM224 112h1V118h-1zM225 107h1V113h-1zM226 108h1V115h-1zM227 114h1V123h-1zM228 110h1V127h-1zM229 80h1V111h-1zM230 54h1V81h-1zM231 42h1V59h-1zM232 58h1V80h-1zM233 79h1V85h-1zM234 77h1V85h-1zM235 84h1V103h-1zM236 102h1V114h-1zM237 101h1V109h-1zM238 104h1V117h-1zM239 93h1V105h-1zM240 102h1V118h-1zM241 117h1V123h-1zM242 114h1V119h-1zM243 116h1V122h-1zM244 121h1V129h-1zM245 116h1V133h-1zM246 88h1V117h-1zM247 64h1V89h-1zM248 51h1V71h-1zM249 70h1V90h-1zM250 85h1V88h-1zM251 87h1V101h-1zM252 100h1V120h-1zM253 116h1V129h-1zM254 103h1V117h-1zM255 102h1V110h-1zM256 96h1V113h-1zM257 112h1V128h-1zM258 123h1V127h-1zM259 124h1V130h-1zM260 119h1V125h-1zM261 110h1V131h-1zM262 80h1V111h-1zM263 61h1V81h-1zM264 53h1V62h-1zM265 53h1V71h-1zM266 70h1V89h-1zM267 70h1V80h-1zM268 76h1V95h-1zM269 94h1V117h-1zM270 114h1V126h-1zM271 104h1V115h-1zM272 108h1V114h-1zM273 108h1V115h-1zM274 114h1V120h-1zM275 111h1V117h-1zM276 116h1V125h-1zM277 124h1V129h-1zM278 120h1V125h-1zM279 108h1V126h-1zM280 80h1V109h-1zM281 64h1V81h-1zM282 59h1V77h-1zM283 76h1V93h-1zM284 89h1V92h-1zM285 91h1V103h-1zM286 102h1V119h-1zM287 116h1V127h-1zM288 105h1V117h-1zM289 104h1V111h-1zM290 98h1V109h-1zM291 108h1V123h-1zM292 122h1V127h-1zM293 122h1V125h-1zM294 122h1V128h-1zM295 118h1V123h-1zM296 108h1V128h-1zM297 80h1V109h-1zM298 64h1V81h-1zM299 56h1V65h-1zM300 56h1V69h-1zM301 68h1V86h-1zM302 85h1V90h-1zM303 83h1V91h-1zM304 90h1V105h-1zM305 104h1V114h-1zM306 103h1V109h-1zM307 106h1V114h-1zM308 98h1V107h-1zM309 102h1V111h-1zM310 110h1V118h-1zM311 117h1V122h-1zM312 114h1V119h-1zM313 112h1V118h-1zM314 107h1V115h-1zM315 106h1V121h-1zM316 81h1V107h-1zM317 62h1V82h-1zM318 54h1V68h-1zM319 67h1V85h-1zM320 84h1V89h-1zM321 79h1V88h-1zM322 87h1V104h-1zM323 103h1V112h-1zM324 100h1V109h-1zM325 95h1V101h-1zM326 98h1V101h-1zM327 96h1V104h-1zM328 103h1V115h-1zM329 114h1V118h-1zM330 111h1V115h-1zM331 108h1V117h-1zM332 98h1V109h-1zM333 88h1V99h-1zM334 70h1V89h-1zM335 54h1V71h-1zM336 50h1V65h-1zM337 64h1V78h-1zM338 67h1V73h-1zM339 70h1V84h-1zM340 83h1V100h-1zM341 97h1V106h-1zM342 89h1V98h-1zM343 92h1V99h-1zM344 98h1V102h-1zM345 97h1V101h-1zM346 100h1V104h-1zM347 97h1V103h-1zM348 102h1V109h-1zM349 94h1V105h-1zM350 82h1V95h-1zM351 68h1V83h-1zM352 51h1V69h-1zM353 40h1V52h-1zM354 37h1V53h-1zM355 52h1V68h-1zM356 59h1V65h-1zM357 56h1V71h-1zM358 70h1V84h-1zM359 72h1V85h-1zM360 84h1V96h-1zM361 79h1V89h-1zM362 77h1V85h-1zM363 84h1V95h-1zM364 94h1V98h-1zM365 92h1V99h-1zM366 98h1V105h-1zM367 90h1V99h-1zM368 82h1V91h-1zM369 71h1V83h-1zM370 58h1V72h-1zM371 44h1V59h-1zM372 36h1V45h-1zM373 34h1V48h-1zM374 47h1V64h-1zM375 60h1V67h-1zM376 54h1V67h-1zM377 66h1V85h-1zM378 84h1V90h-1zM379 80h1V85h-1zM380 80h1V86h-1zM381 76h1V83h-1zM382 82h1V91h-1zM383 90h1V97h-1zM384 96h1V103h-1zM385 98h1V105h-1zM386 87h1V99h-1zM387 75h1V88h-1zM388 63h1V76h-1zM389 51h1V64h-1zM390 38h1V52h-1zM391 31h1V39h-1zM392 30h1V43h-1zM393 42h1V57h-1zM394 52h1V59h-1zM395 47h1V61h-1zM396 60h1V79h-1zM397 78h1V84h-1zM398 70h1V79h-1zM399 68h1V71h-1zM400 70h1V77h-1zM401 76h1V83h-1zM402 82h1V88h-1zM403 87h1V93h-1zM404 89h1V96h-1zM405 76h1V90h-1zM406 62h1V77h-1zM407 48h1V63h-1zM408 35h1V49h-1zM409 24h1V36h-1zM410 17h1V25h-1zM411 17h1V31h-1zM412 30h1V47h-1zM413 42h1V49h-1zM414 35h1V51h-1zM415 50h1V71h-1zM416 70h1V78h-1zM417 62h1V72h-1zM418 59h1V63h-1zM419 62h1V70h-1zM420 69h1V75h-1zM421 74h1V78h-1zM422 77h1V82h-1zM423 81h1V88h-1zM424 84h1V91h-1zM425 71h1V85h-1zM426 58h1V72h-1zM427 44h1V59h-1zM428 32h1V45h-1zM429 21h1V33h-1zM430 15h1V22h-1zM431 15h1V29h-1zM432 28h1V43h-1zM433 38h1V45h-1zM434 32h1V47h-1zM435 46h1V65h-1zM436 64h1V71h-1zM437 56h1V65h-1zM438 54h1V57h-1zM439 56h1V64h-1zM440 63h1V69h-1zM441 68h1V71h-1zM442 70h1V75h-1zM443 74h1V80h-1zM444 76h1V83h-1zM445 62h1V77h-1zM446 48h1V63h-1zM447 34h1V49h-1zM448 22h1V35h-1zM449 10h1V23h-1zM450 3h1V11h-1zM451 3h1V19h-1zM452 18h1V33h-1zM453 25h1V31h-1zM454 22h1V39h-1zM455 38h1V61h-1zM456 60h1V67h-1zM457 51h1V61h-1zM458 48h1V52h-1zM459 51h1V59h-1zM460 58h1V65h-1zM461 64h1V67h-1zM462 62h1V65h-1zM463 64h1V72h-1zM464 71h1V79h-1zM465 74h1V81h-1zM466 62h1V75h-1zM467 50h1V63h-1zM468 38h1V51h-1zM469 26h1V39h-1zM470 16h1V27h-1zM471 10h1V17h-1zM472 10h1V23h-1zM473 22h1V34h-1zM474 28h1V33h-1zM475 25h1V39h-1zM476 38h1V57h-1zM477 56h1V62h-1zM478 48h1V57h-1zM479 46h1V49h-1zM480 48h1V55h-1zM481 54h1V59h-1zM482 58h1V61h-1zM483 60h1V65h-1zM484 64h1V70h-1zM485 66h1V73h-1zM486 55h1V67h-1zM487 43h1V56h-1zM488 32h1V44h-1zM489 21h1V33h-1zM490 11h1V22h-1zM491 6h1V12h-1zM492 6h1V17h-1zM493 16h1V29h-1zM494 24h1V30h-1zM495 20h1V31h-1zM496 30h1V47h-1zM497 44h1V51h-1zM498 37h1V45h-1zM499 43h1V50h-1zM500 37h1V44h-1zM501 40h1V46h-1zM502 45h1V50h-1zM503 49h1V51h-1zM504 50h1V55h-1zM505 54h1V59h-1zM506 54h1V61h-1zM507 41h1V55h-1zM508 34h1V42h-1zM509 34h1V49h-1zM510 14h1V35h-1zM511 2h1V15h-1zM512 2h1V3h-1zM515 2h1V13h-1zM516 8h1V15h-1zM517 2h1V17h-1zM518 16h1V35h-1zM519 32h1V41h-1zM520 24h1V33h-1zM521 31h1V39h-1zM522 24h1V32h-1zM523 26h1V34h-1zM524 33h1V39h-1zM525 38h1V41h-1zM526 40h1V45h-1zM527 44h1V51h-1zM528 46h1V53h-1zM529 33h1V47h-1zM530 26h1V34h-1zM531 26h1V41h-1zM532 5h1V27h-1zM533 2h1V6h-1zM537 2h1V3h-1zM538 2h1V5h-1zM539 2h1V7h-1zM540 6h1V26h-1zM541 25h1V32h-1zM542 17h1V27h-1zM543 14h1V18h-1zM544 17h1V25h-1zM545 24h1V29h-1zM546 28h1V31h-1zM547 27h1V30h-1zM548 29h1V35h-1zM549 34h1V41h-1zM550 37h1V44h-1zM551 24h1V38h-1zM552 10h1V25h-1zM553 2h1V11h-1zM561 2h1V11h-1zM562 7h1V15h-1zM563 2h1V8h-1zM564 6h1V14h-1zM565 2h1V7h-1zM566 2h1V9h-1zM567 8h1V13h-1zM568 12h1V15h-1zM569 14h1V19h-1zM570 18h1V23h-1zM571 19h1V26h-1zM572 6h1V20h-1zM573 2h1V7h-1zM574 2h1V14h-1zM591 2h1V3h-1zM592 2h1V8h-1zM593 4h1V11h-1zM594 2h1V5h-1z"/><path fill="#ff0000" d="M6 392h1v1h-1zM7 392h1v1h-1zM8 392h1v1h-1zM9 392h1v1h-1zM5 393h1v1h-1zM6 393h1v1h-1zM9 393h1v1h-1zM10 393h1v1h-1zM5 394h1v1h-1zM6 394h1v1h-1zM9 394h1v1h-1zM10 394h1v1h-1zM9 395h1v1h-1zM10 395h1v1h-1zM8 396h1v1h-1zM9 396h1v1h-1zM7 397h1v1h-1zM8 397h1v1h-1zM6 398h1v1h-1zM7 398h1v1h-1zM5 399h1v1h-1zM6 399h1v1h-1zM5 400h1v1h-1zM6 400h1v1h-1zM7 400h1v1h-1zM8 400h1v1h-1zM9 400h1v1h-1zM10 400h1v1h-1zM5 401h1v1h-1zM6 401h1v1h-1zM7 401h1v1h-1zM8 401h1v1h-1zM9 401h1v1h-1zM10 401h1v1h-1z"/><path fill="#ff0000" d="M15 394h1v1h-1zM16 394h1v1h-1zM15 395h1v1h-1zM16 395h1v1h-1zM17 395h1v1h-1zM18 395h1v1h-1zM15 396h1v1h-1zM16 396h1v1h-1zM17 396h1v1h-1zM18 396h1v1h-1zM19 396h1v1h-1zM20 396h1v1h-1zM12 397h1v1h-1zM13 397h1v1h-1zM14 397h1v1h-1zM15 397h1v1h-1zM16 397h1v1h-1zM17 397h1v1h-1zM18 397h1v1h-1zM19 397h1v1h-1zM20 397h1v1h-1zM21 397h1v1h-1zM22 397h1v1h-1zM15 398h1v1h-1zM16 398h1v1h-1zM17 398h1v1h-1zM18 398h1v1h-1zM19 398h1v1h-1zM20 398h1v1h-1zM15 399h1v1h-1zM16 399h1v1h-1zM17 399h1v1h-1zM18 399h1v1h-1zM15 400h1v1h-1zM16 400h1v1h-1z"/><path fill="#ffffff" d="M9 502h1v1h-1zM10 502h1v1h-1zM8 503h1v1h-1zM9 503h1v1h-1zM10 503h1v1h-1zM7 504h1v1h-1zM8 504h1v1h-1zM9 504h1v1h-1zM10 504h1v1h-1zM6 505h1v1h-1zM7 505h1v1h-1zM9 505h1v1h-1zM10 505h1v1h-1zM5 506h1v1h-1zM6 506h1v1h-1zM9 506h1v1h-1zM10 506h1v1h-1zM5 507h1v1h-1zM6 507h1v1h-1zM9 507h1v1h-1zM10 507h1v1h-1zM5 508h1v1h-1zM6 508h1v1h-1zM7 508h1v1h-1zM8 508h1v1h-1zM9 508h1v1h-1zM10 508h1v1h-1zM5 509h1v1h-1zM6 509h1v1h-1zM7 509h1v1h-1zM8 509h1v1h-1zM9 509h1v1h-1zM10 509h1v1h-1zM9 510h1v1h-1zM10 510h1v1h-1zM9 511h1v1h-1zM10 511h1v1h-1z"/><path fill="#ffffff" d="M15 504h1v1h-1zM16 504h1v1h-1zM15 505h1v1h-1zM16 505h1v1h-1zM17 505h1v1h-1zM18 505h1v1h-1zM15 506h1v1h-1zM16 506h1v1h-1zM17 506h1v1h-1zM18 506h1v1h-1zM19 506h1v1h-1zM20 506h1v1h-1zM12 507h1v1h-1zM13 507h1v1h-1zM14 507h1v1h-1zM15 507h1v1h-1zM16 507h1v1h-1zM17 507h1v1h-1zM18 507h1v1h-1zM19 507h1v1h-1zM20 507h1v1h-1zM21 507h1v1h-1zM22 507h1v1h-1zM15 508h1v1h-1zM16 508h1v1h-1zM17 508h1v1h-1zM18 508h1v1h-1zM19 508h1v1h-1zM20 508h1v1h-1zM15 509h1v1h-1zM16 509h1v1h-1zM17 509h1v1h-1zM18 509h1v1h-1zM15 510h1v1h-1zM16 510h1v1h-1z"/><path fill="#00ff00" d="M7 546h1v1h-1zM8 546h1v1h-1zM6 547h1v1h-1zM7 547h1v1h-1zM8 547h1v1h-1zM5 548h1v1h-1zM6 548h1v1h-1zM7 548h1v1h-1zM8 548h1v1h-1zM7 549h1v1h-1zM8 549h1v1h-1zM7 550h1v1h-1zM8 550h1v1h-1zM7 551h1v1h-1zM8 551h1v1h-1zM7 552h1v1h-1zM8 552h1v1h-1zM7 553h1v1h-1zM8 553h1v1h-1zM7 554h1v1h-1zM8 554h1v1h-1zM7 555h1v1h-1zM8 555h1v1h-1z"/><path fill="#00ff00" d="M15 548h1v1h-1zM16 548h1v1h-1zM15 549h1v1h-1zM16 549h1v1h-1zM17 549h1v1h-1zM18 549h1v1h-1zM15 550h1v1h-1zM16 550h1v1h-1zM17 550h1v1h-1zM18 550h1v1h-1zM19 550h1v1h-1zM20 550h1v1h-1zM12 551h1v1h-1zM13 551h1v1h-1zM14 551h1v1h-1zM15 551h1v1h-1zM16 551h1v1h-1zM17 551h1v1h-1zM18 551h1v1h-1zM19 551h1v1h-1zM20 551h1v1h-1zM21 551h1v1h-1zM22 551h1v1h-1zM15 552h1v1h-1zM16 552h1v1h-1zM17 552h1v1h-1zM18 552h1v1h-1zM19 552h1v1h-1zM20 552h1v1h-1zM15 553h1v1h-1zM16 553h1v1h-1zM17 553h1v1h-1zM18 553h1v1h-1zM15 554h1v1h-1zM16 554h1v1h-1z"/><path fill="#ffff00" d="M6 566h1v1h-1zM7 566h1v1h-1zM8 566h1v1h-1zM9 566h1v1h-1zM5 567h1v1h-1zM6 567h1v1h-1zM9 567h1v1h-1zM10 567h1v1h-1zM9 568h1v1h-1zM10 568h1v1h-1zM9 569h1v1h-1zM10 569h1v1h-1zM7 570h1v1h-1zM8 570h1v1h-1zM9 570h1v1h-1zM9 571h1v1h-1zM10 571h1v1h-1zM9 572h1v1h-1zM10 572h1v1h-1zM9 573h1v1h-1zM10 573h1v1h-1zM5 574h1v1h-1zM6 574h1v1h-1zM9 574h1v1h-1zM10 574h1v1h-1zM6 575h1v1h-1zM7 575h1v1h-1zM8 575h1v1h-1zM9 575h1v1h-1z"/><path fill="#ffff00" d="M15 568h1v1h-1zM16 568h1v1h-1zM15 569h1v1h-1zM16 569h1v1h-1zM17 569h1v1h-1zM18 569h1v1h-1zM15 570h1v1h-1zM16 570h1v1h-1zM17 570h1v1h-1zM18 570h1v1h-1zM19 570h1v1h-1zM20 570h1v1h-1zM12 571h1v1h-1zM13 571h1v1h-1zM14 571h1v1h-1zM15 571h1v1h-1zM16 571h1v1h-1zM17 571h1v1h-1zM18 571h1v1h-1zM19 571h1v1h-1zM20 571h1v1h-1zM21 571h1v1h-1zM22 571h1v1h-1zM15 572h1v1h-1zM16 572h1v1h-1zM17 572h1v1h-1zM18 572h1v1h-1zM19 572h1v1h-1zM20 572h1v1h-1zM15 573h1v1h-1zM16 573h1v1h-1zM17 573h1v1h-1zM18 573h1v1h-1zM15 574h1v1h-1zM16 574h1v1h-1z"/><rect x="0" y="0" width="842" height="1" fill="#aca899"/><rect x="0" y="0" width="1" height="631" fill="#aca899"/><rect x="1" y="1" width="841" height="1" fill="#716f64"/><rect x="1" y="1" width="1" height="630" fill="#716f64"/></svg>
<svg width="842" height="631" shape-rendering="crispEdges" style="position:absolute;left:0;top:0"><path fill="#c8c8c8" d="M47 606h10v1h-10zM46 607h1v10h-1zM57 607h1v10h-1zM47 617h10v2h-10zM46 619h1v10h-1zM57 619h1v10h-1zM47 629h10v1h-10z"/><path fill="#c8c8c8" d="M48 608h1v1h-1zM49 608h1v1h-1zM50 608h1v1h-1zM51 608h1v1h-1zM52 608h1v1h-1zM53 608h1v1h-1zM54 608h1v1h-1zM48 609h1v1h-1zM49 609h1v1h-1zM55 609h1v1h-1zM48 610h1v1h-1zM49 610h1v1h-1zM55 610h1v1h-1zM48 611h1v1h-1zM49 611h1v1h-1zM50 611h1v1h-1zM51 611h1v1h-1zM52 611h1v1h-1zM53 611h1v1h-1zM54 611h1v1h-1zM48 612h1v1h-1zM49 612h1v1h-1zM55 612h1v1h-1zM48 613h1v1h-1zM49 613h1v1h-1zM55 613h1v1h-1zM48 614h1v1h-1zM49 614h1v1h-1zM55 614h1v1h-1zM48 615h1v1h-1zM49 615h1v1h-1zM50 615h1v1h-1zM51 615h1v1h-1zM52 615h1v1h-1zM53 615h1v1h-1zM54 615h1v1h-1z"/><path fill="#c8c8c8" d="M51 620h1v1h-1zM52 620h1v1h-1zM50 621h1v1h-1zM53 621h1v1h-1zM50 622h1v1h-1zM53 622h1v1h-1zM49 623h1v1h-1zM54 623h1v1h-1zM49 624h1v1h-1zM54 624h1v1h-1zM49 625h1v1h-1zM50 625h1v1h-1zM51 625h1v1h-1zM52 625h1v1h-1zM53 625h1v1h-1zM54 625h1v1h-1zM48 626h1v1h-1zM49 626h1v1h-1zM54 626h1v1h-1zM55 626h1v1h-1zM48 627h1v1h-1zM49 627h1v1h-1zM54 627h1v1h-1zM55 627h1v1h-1z"/></svg>
<svg width="842" height="631" shape-rendering="crispEdges" style="position:absolute;left:0;top:0;mix-blend-mode:difference"><rect x="51" y="2" width="1" height="604" fill="#c8c8c8"/></svg>
</body></html>
